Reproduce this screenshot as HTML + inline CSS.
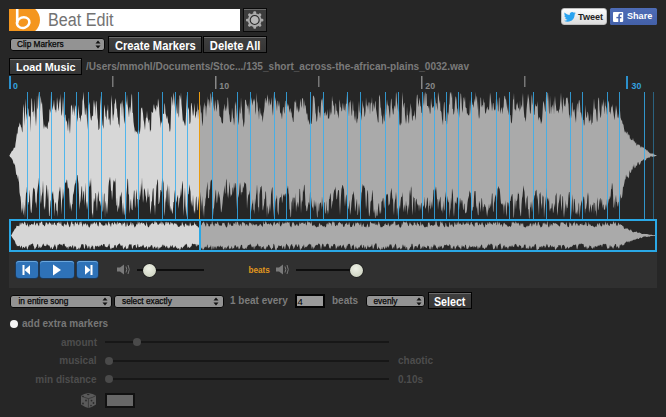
<!DOCTYPE html>
<html><head><meta charset="utf-8">
<style>
*{margin:0;padding:0;box-sizing:border-box}
html,body{width:666px;height:417px;overflow:hidden;background:#262626;font-family:"Liberation Sans",sans-serif}
.a{position:absolute}
.btn{position:absolute;background:linear-gradient(#3f3f3f,#353535);border:1px solid #030303;box-shadow:inset 0 1px 0 #6a6a6a;color:#fff;font-weight:bold;white-space:nowrap;text-align:center}
.sel{position:absolute;background:#939393;border:1px solid #080808;border-radius:3px;color:#050505;font-size:8.3px;white-space:nowrap;-webkit-text-stroke:0.25px #050505}
.lbl{position:absolute;font-weight:bold;white-space:nowrap;font-size:10px}
.t{display:inline-block;transform-origin:50% 50%}
.tl{display:inline-block;transform-origin:0 50%}
.arr{position:absolute;width:5px;height:8px}
</style></head><body>
<svg class="a" style="left:0;top:0" width="666" height="417" viewBox="0 0 666 417">
  <defs>
    <clipPath id="cl"><rect x="0" y="0" width="199" height="417"/></clipPath>
    <clipPath id="cr"><rect x="199" y="0" width="467" height="417"/></clipPath>
    <clipPath id="ml"><rect x="0" y="0" width="199" height="417"/></clipPath>
    <clipPath id="mr"><rect x="199" y="0" width="467" height="417"/></clipPath>
  </defs>
  <!-- main waveform -->
  <path d="M9.0,155.6 L9.5,155.4 L10.0,154.4 L10.5,153.4 L11.0,152.8 L11.5,151.5 L12.0,151.2 L12.5,150.6 L13.0,150.6 L13.5,148.8 L14.0,147.4 L14.5,147.6 L15.0,148.3 L15.5,143.5 L16.0,140.5 L16.5,136.3 L17.0,132.8 L17.5,134.5 L18.0,128.0 L18.5,126.4 L19.0,126.8 L19.5,122.2 L20.0,124.5 L20.5,124.4 L21.0,127.1 L21.5,127.5 L22.0,131.3 L22.5,132.5 L23.0,108.5 L23.5,103.8 L24.0,113.8 L24.5,125.9 L25.0,109.0 L25.5,98.4 L26.0,113.0 L26.5,115.5 L27.0,119.9 L27.5,108.1 L28.0,108.1 L28.5,109.9 L29.0,117.6 L29.5,116.3 L30.0,115.3 L30.5,132.0 L31.0,109.8 L31.5,97.7 L32.0,99.8 L32.5,112.0 L33.0,112.3 L33.5,110.2 L34.0,117.7 L34.5,98.2 L35.0,109.3 L35.5,119.0 L36.0,126.4 L36.5,116.5 L37.0,94.5 L37.5,109.7 L38.0,107.2 L38.5,91.6 L39.0,100.4 L39.5,107.0 L40.0,112.3 L40.5,95.4 L41.0,99.1 L41.5,104.4 L42.0,101.8 L42.5,109.2 L43.0,118.0 L43.5,126.0 L44.0,129.3 L44.5,123.9 L45.0,127.8 L45.5,127.1 L46.0,125.5 L46.5,127.2 L47.0,128.2 L47.5,129.3 L48.0,123.5 L48.5,120.8 L49.0,123.5 L49.5,108.4 L50.0,110.6 L50.5,112.9 L51.0,93.1 L51.5,98.6 L52.0,105.6 L52.5,110.2 L53.0,107.0 L53.5,103.9 L54.0,99.3 L54.5,106.3 L55.0,110.0 L55.5,109.6 L56.0,113.0 L56.5,108.2 L57.0,96.9 L57.5,101.6 L58.0,106.1 L58.5,111.4 L59.0,107.5 L59.5,98.3 L60.0,103.8 L60.5,93.5 L61.0,109.9 L61.5,115.9 L62.0,114.2 L62.5,105.8 L63.0,96.6 L63.5,104.4 L64.0,117.9 L64.5,117.7 L65.0,114.9 L65.5,114.6 L66.0,122.1 L66.5,120.1 L67.0,122.3 L67.5,126.0 L68.0,131.7 L68.5,122.2 L69.0,117.2 L69.5,129.4 L70.0,134.1 L70.5,123.0 L71.0,104.5 L71.5,106.6 L72.0,104.4 L72.5,115.5 L73.0,107.0 L73.5,112.6 L74.0,103.2 L74.5,116.5 L75.0,109.7 L75.5,104.9 L76.0,106.8 L76.5,109.6 L77.0,117.6 L77.5,122.1 L78.0,113.9 L78.5,104.8 L79.0,113.0 L79.5,117.9 L80.0,117.9 L80.5,122.3 L81.0,116.3 L81.5,115.5 L82.0,114.1 L82.5,101.1 L83.0,98.3 L83.5,91.6 L84.0,102.0 L84.5,107.6 L85.0,115.3 L85.5,113.9 L86.0,107.1 L86.5,111.1 L87.0,120.1 L87.5,129.7 L88.0,109.3 L88.5,105.2 L89.0,104.9 L89.5,101.8 L90.0,112.3 L90.5,117.3 L91.0,120.2 L91.5,120.4 L92.0,115.8 L92.5,115.8 L93.0,116.8 L93.5,104.1 L94.0,99.3 L94.5,107.3 L95.0,101.1 L95.5,116.2 L96.0,100.4 L96.5,102.0 L97.0,108.6 L97.5,117.8 L98.0,120.7 L98.5,130.2 L99.0,129.4 L99.5,127.9 L100.0,113.6 L100.5,95.2 L101.0,105.6 L101.5,111.1 L102.0,118.0 L102.5,124.5 L103.0,126.5 L103.5,129.1 L104.0,109.6 L104.5,104.3 L105.0,109.7 L105.5,115.9 L106.0,117.3 L106.5,120.6 L107.0,109.0 L107.5,111.6 L108.0,103.5 L108.5,118.6 L109.0,120.6 L109.5,117.3 L110.0,126.0 L110.5,123.8 L111.0,107.2 L111.5,94.8 L112.0,103.3 L112.5,113.9 L113.0,121.6 L113.5,115.5 L114.0,113.8 L114.5,104.1 L115.0,103.1 L115.5,98.0 L116.0,100.7 L116.5,108.0 L117.0,109.4 L117.5,116.4 L118.0,118.6 L118.5,124.2 L119.0,124.6 L119.5,128.5 L120.0,108.3 L120.5,102.8 L121.0,104.6 L121.5,100.9 L122.0,117.0 L122.5,99.2 L123.0,104.7 L123.5,109.4 L124.0,120.8 L124.5,124.0 L125.0,116.5 L125.5,102.4 L126.0,100.7 L126.5,105.6 L127.0,94.0 L127.5,103.9 L128.0,108.1 L128.5,112.2 L129.0,117.8 L129.5,108.6 L130.0,106.3 L130.5,112.9 L131.0,103.9 L131.5,95.4 L132.0,93.6 L132.5,112.4 L133.0,113.2 L133.5,121.7 L134.0,125.9 L134.5,128.4 L135.0,133.0 L135.5,130.0 L136.0,131.7 L136.5,131.6 L137.0,132.5 L137.5,134.5 L138.0,129.7 L138.5,132.3 L139.0,129.7 L139.5,134.0 L140.0,132.0 L140.5,126.8 L141.0,108.0 L141.5,108.6 L142.0,106.9 L142.5,110.3 L143.0,113.4 L143.5,119.6 L144.0,121.9 L144.5,126.1 L145.0,130.3 L145.5,122.1 L146.0,117.3 L146.5,118.1 L147.0,110.4 L147.5,117.5 L148.0,119.2 L148.5,123.6 L149.0,119.0 L149.5,120.7 L150.0,132.2 L150.5,129.6 L151.0,131.1 L151.5,111.5 L152.0,112.1 L152.5,112.8 L153.0,112.7 L153.5,106.1 L154.0,104.0 L154.5,108.1 L155.0,108.7 L155.5,109.7 L156.0,111.9 L156.5,104.7 L157.0,106.2 L157.5,107.8 L158.0,98.3 L158.5,101.0 L159.0,106.0 L159.5,114.3 L160.0,118.8 L160.5,127.9 L161.0,120.0 L161.5,123.7 L162.0,121.8 L162.5,121.6 L163.0,114.0 L163.5,113.5 L164.0,114.3 L164.5,102.7 L165.0,105.0 L165.5,113.6 L166.0,115.1 L166.5,117.6 L167.0,119.2 L167.5,115.3 L168.0,122.0 L168.5,123.3 L169.0,124.4 L169.5,130.8 L170.0,132.0 L170.5,128.4 L171.0,112.1 L171.5,96.1 L172.0,98.1 L172.5,102.3 L173.0,106.2 L173.5,92.3 L174.0,95.3 L174.5,101.9 L175.0,107.2 L175.5,111.8 L176.0,115.3 L176.5,103.0 L177.0,113.0 L177.5,114.1 L178.0,97.6 L178.5,115.3 L179.0,118.1 L179.5,95.0 L180.0,96.0 L180.5,100.1 L181.0,92.2 L181.5,104.1 L182.0,109.5 L182.5,116.7 L183.0,122.7 L183.5,119.8 L184.0,122.0 L184.5,123.8 L185.0,126.2 L185.5,124.2 L186.0,113.9 L186.5,103.1 L187.0,94.0 L187.5,104.0 L188.0,110.6 L188.5,106.9 L189.0,109.7 L189.5,123.5 L190.0,124.1 L190.5,121.6 L191.0,103.0 L191.5,103.3 L192.0,106.4 L192.5,111.7 L193.0,116.2 L193.5,114.3 L194.0,109.0 L194.5,103.0 L195.0,114.5 L195.5,118.4 L196.0,115.6 L196.5,111.3 L197.0,111.8 L197.5,102.6 L198.0,119.6 L198.5,109.3 L199.0,110.3 L199.5,98.3 L200.0,103.9 L200.5,106.7 L201.0,113.9 L201.5,111.5 L202.0,121.8 L202.5,126.6 L203.0,120.3 L203.5,104.5 L204.0,110.4 L204.5,102.1 L205.0,105.1 L205.5,106.5 L206.0,117.2 L206.5,108.2 L207.0,105.2 L207.5,95.9 L208.0,106.7 L208.5,99.2 L209.0,99.6 L209.5,103.2 L210.0,108.6 L210.5,92.8 L211.0,94.8 L211.5,103.5 L212.0,96.6 L212.5,97.3 L213.0,95.9 L213.5,104.5 L214.0,108.7 L214.5,111.8 L215.0,99.6 L215.5,102.7 L216.0,106.4 L216.5,112.1 L217.0,107.6 L217.5,100.1 L218.0,99.4 L218.5,103.3 L219.0,105.8 L219.5,116.0 L220.0,116.3 L220.5,117.4 L221.0,117.4 L221.5,122.0 L222.0,123.1 L222.5,123.4 L223.0,123.2 L223.5,107.8 L224.0,111.5 L224.5,103.6 L225.0,107.0 L225.5,110.1 L226.0,111.6 L226.5,104.9 L227.0,110.2 L227.5,97.8 L228.0,97.4 L228.5,106.9 L229.0,113.4 L229.5,115.4 L230.0,121.5 L230.5,121.9 L231.0,122.6 L231.5,118.6 L232.0,107.2 L232.5,112.0 L233.0,117.5 L233.5,119.1 L234.0,125.8 L234.5,121.7 L235.0,101.6 L235.5,106.0 L236.0,100.8 L236.5,118.4 L237.0,107.3 L237.5,112.8 L238.0,114.7 L238.5,125.2 L239.0,121.2 L239.5,106.3 L240.0,114.3 L240.5,112.2 L241.0,96.9 L241.5,105.5 L242.0,109.6 L242.5,117.9 L243.0,121.1 L243.5,127.5 L244.0,125.2 L244.5,121.6 L245.0,100.6 L245.5,99.4 L246.0,100.2 L246.5,104.0 L247.0,105.3 L247.5,106.2 L248.0,109.5 L248.5,102.9 L249.0,115.9 L249.5,109.9 L250.0,97.7 L250.5,105.4 L251.0,103.4 L251.5,96.9 L252.0,100.8 L252.5,105.7 L253.0,102.8 L253.5,98.5 L254.0,101.6 L254.5,98.2 L255.0,102.4 L255.5,114.9 L256.0,111.0 L256.5,92.6 L257.0,101.0 L257.5,103.5 L258.0,110.2 L258.5,111.9 L259.0,120.0 L259.5,110.1 L260.0,107.0 L260.5,114.9 L261.0,112.6 L261.5,116.7 L262.0,114.8 L262.5,122.5 L263.0,119.1 L263.5,113.6 L264.0,111.3 L264.5,106.6 L265.0,97.9 L265.5,98.5 L266.0,103.8 L266.5,101.0 L267.0,99.5 L267.5,94.3 L268.0,97.7 L268.5,102.8 L269.0,106.7 L269.5,98.1 L270.0,103.0 L270.5,105.5 L271.0,103.1 L271.5,97.1 L272.0,105.5 L272.5,111.8 L273.0,116.0 L273.5,102.6 L274.0,92.1 L274.5,100.2 L275.0,101.0 L275.5,97.1 L276.0,102.0 L276.5,106.1 L277.0,111.2 L277.5,101.3 L278.0,100.6 L278.5,104.7 L279.0,106.9 L279.5,101.0 L280.0,111.8 L280.5,114.0 L281.0,112.3 L281.5,116.0 L282.0,119.5 L282.5,113.1 L283.0,107.4 L283.5,106.8 L284.0,111.9 L284.5,114.0 L285.0,100.8 L285.5,100.9 L286.0,107.7 L286.5,95.7 L287.0,107.5 L287.5,102.8 L288.0,106.6 L288.5,104.1 L289.0,108.8 L289.5,112.7 L290.0,108.4 L290.5,108.4 L291.0,113.7 L291.5,110.8 L292.0,117.1 L292.5,118.0 L293.0,122.1 L293.5,121.8 L294.0,111.5 L294.5,101.9 L295.0,101.2 L295.5,103.2 L296.0,99.2 L296.5,111.3 L297.0,105.8 L297.5,108.5 L298.0,110.9 L298.5,112.8 L299.0,107.8 L299.5,112.0 L300.0,102.8 L300.5,98.5 L301.0,105.5 L301.5,108.1 L302.0,99.0 L302.5,98.3 L303.0,98.0 L303.5,104.6 L304.0,109.4 L304.5,99.7 L305.0,106.3 L305.5,104.7 L306.0,108.9 L306.5,114.7 L307.0,112.7 L307.5,115.0 L308.0,122.6 L308.5,119.0 L309.0,121.2 L309.5,125.1 L310.0,123.0 L310.5,123.2 L311.0,123.7 L311.5,123.9 L312.0,120.1 L312.5,110.0 L313.0,95.3 L313.5,96.1 L314.0,96.4 L314.5,98.4 L315.0,104.7 L315.5,112.6 L316.0,114.9 L316.5,121.8 L317.0,121.2 L317.5,115.8 L318.0,105.5 L318.5,106.8 L319.0,112.8 L319.5,112.3 L320.0,118.6 L320.5,113.8 L321.0,103.6 L321.5,98.8 L322.0,100.7 L322.5,97.3 L323.0,106.8 L323.5,108.3 L324.0,112.8 L324.5,113.0 L325.0,116.4 L325.5,111.1 L326.0,113.1 L326.5,116.0 L327.0,114.2 L327.5,109.1 L328.0,119.2 L328.5,117.7 L329.0,119.2 L329.5,115.4 L330.0,107.7 L330.5,115.8 L331.0,111.6 L331.5,114.8 L332.0,95.4 L332.5,100.4 L333.0,101.6 L333.5,106.6 L334.0,104.7 L334.5,113.5 L335.0,115.4 L335.5,103.7 L336.0,103.2 L336.5,111.1 L337.0,110.5 L337.5,113.0 L338.0,115.6 L338.5,118.8 L339.0,111.5 L339.5,99.3 L340.0,102.2 L340.5,107.3 L341.0,107.5 L341.5,110.9 L342.0,111.4 L342.5,105.1 L343.0,102.5 L343.5,107.4 L344.0,110.4 L344.5,109.9 L345.0,102.8 L345.5,112.3 L346.0,103.4 L346.5,104.1 L347.0,93.4 L347.5,99.1 L348.0,102.2 L348.5,106.9 L349.0,116.8 L349.5,101.8 L350.0,102.7 L350.5,99.5 L351.0,107.5 L351.5,114.1 L352.0,116.5 L352.5,106.0 L353.0,100.5 L353.5,111.7 L354.0,109.7 L354.5,120.7 L355.0,115.8 L355.5,121.6 L356.0,109.7 L356.5,121.4 L357.0,123.7 L357.5,119.0 L358.0,118.3 L358.5,108.2 L359.0,100.6 L359.5,110.3 L360.0,113.2 L360.5,112.2 L361.0,114.1 L361.5,120.8 L362.0,112.6 L362.5,99.9 L363.0,104.9 L363.5,107.3 L364.0,109.0 L364.5,117.2 L365.0,115.5 L365.5,110.9 L366.0,97.1 L366.5,103.6 L367.0,106.9 L367.5,104.4 L368.0,110.3 L368.5,103.4 L369.0,101.4 L369.5,103.5 L370.0,114.9 L370.5,105.0 L371.0,102.2 L371.5,103.4 L372.0,96.6 L372.5,110.7 L373.0,112.0 L373.5,102.5 L374.0,105.7 L374.5,109.6 L375.0,102.3 L375.5,100.5 L376.0,108.8 L376.5,112.1 L377.0,115.5 L377.5,119.3 L378.0,122.7 L378.5,122.1 L379.0,96.9 L379.5,94.5 L380.0,97.5 L380.5,107.0 L381.0,108.8 L381.5,115.0 L382.0,116.8 L382.5,123.0 L383.0,124.8 L383.5,113.1 L384.0,120.1 L384.5,122.1 L385.0,107.5 L385.5,114.4 L386.0,115.2 L386.5,106.2 L387.0,99.0 L387.5,103.7 L388.0,105.7 L388.5,105.6 L389.0,110.5 L389.5,115.1 L390.0,119.0 L390.5,106.5 L391.0,99.7 L391.5,98.3 L392.0,107.5 L392.5,110.1 L393.0,114.7 L393.5,113.9 L394.0,107.1 L394.5,105.0 L395.0,109.7 L395.5,105.0 L396.0,91.7 L396.5,94.3 L397.0,102.0 L397.5,106.0 L398.0,111.0 L398.5,112.0 L399.0,107.9 L399.5,123.5 L400.0,125.8 L400.5,124.7 L401.0,122.2 L401.5,124.6 L402.0,101.5 L402.5,91.8 L403.0,103.2 L403.5,108.3 L404.0,103.6 L404.5,102.5 L405.0,114.6 L405.5,119.5 L406.0,123.9 L406.5,120.3 L407.0,106.2 L407.5,114.7 L408.0,115.7 L408.5,122.1 L409.0,124.1 L409.5,109.9 L410.0,115.2 L410.5,102.9 L411.0,106.4 L411.5,110.1 L412.0,119.5 L412.5,121.2 L413.0,115.0 L413.5,116.1 L414.0,116.4 L414.5,109.7 L415.0,116.5 L415.5,120.8 L416.0,113.5 L416.5,99.5 L417.0,94.5 L417.5,95.0 L418.0,102.2 L418.5,107.2 L419.0,102.5 L419.5,97.4 L420.0,101.1 L420.5,106.3 L421.0,106.6 L421.5,112.4 L422.0,113.2 L422.5,117.3 L423.0,106.3 L423.5,102.3 L424.0,92.1 L424.5,96.6 L425.0,106.0 L425.5,91.6 L426.0,93.8 L426.5,93.7 L427.0,105.9 L427.5,106.1 L428.0,105.7 L428.5,108.7 L429.0,105.3 L429.5,110.1 L430.0,114.4 L430.5,111.9 L431.0,97.8 L431.5,102.9 L432.0,106.0 L432.5,108.3 L433.0,107.1 L433.5,105.8 L434.0,108.2 L434.5,110.6 L435.0,111.0 L435.5,96.6 L436.0,103.3 L436.5,103.3 L437.0,107.6 L437.5,110.8 L438.0,91.7 L438.5,94.5 L439.0,98.1 L439.5,103.9 L440.0,100.0 L440.5,110.7 L441.0,111.1 L441.5,112.8 L442.0,119.0 L442.5,121.5 L443.0,125.5 L443.5,110.0 L444.0,102.4 L444.5,102.0 L445.0,113.3 L445.5,121.1 L446.0,120.9 L446.5,123.7 L447.0,124.9 L447.5,113.7 L448.0,111.8 L448.5,115.6 L449.0,105.4 L449.5,103.4 L450.0,91.6 L450.5,94.1 L451.0,91.8 L451.5,98.2 L452.0,91.6 L452.5,109.0 L453.0,108.8 L453.5,114.8 L454.0,113.9 L454.5,109.9 L455.0,102.0 L455.5,96.7 L456.0,96.4 L456.5,100.1 L457.0,107.9 L457.5,109.5 L458.0,114.1 L458.5,115.8 L459.0,105.8 L459.5,118.3 L460.0,104.2 L460.5,93.9 L461.0,93.2 L461.5,99.8 L462.0,109.2 L462.5,113.0 L463.0,107.6 L463.5,98.0 L464.0,97.2 L464.5,102.3 L465.0,95.8 L465.5,106.7 L466.0,108.1 L466.5,108.0 L467.0,114.4 L467.5,112.7 L468.0,114.9 L468.5,115.1 L469.0,115.9 L469.5,113.2 L470.0,99.6 L470.5,114.0 L471.0,98.3 L471.5,97.0 L472.0,101.4 L472.5,104.4 L473.0,105.2 L473.5,107.9 L474.0,103.1 L474.5,98.3 L475.0,102.7 L475.5,91.6 L476.0,101.2 L476.5,97.2 L477.0,95.4 L477.5,110.6 L478.0,100.9 L478.5,114.4 L479.0,119.1 L479.5,117.1 L480.0,107.4 L480.5,98.1 L481.0,97.3 L481.5,107.6 L482.0,105.4 L482.5,104.8 L483.0,107.7 L483.5,97.9 L484.0,103.3 L484.5,101.8 L485.0,111.7 L485.5,114.0 L486.0,112.8 L486.5,109.5 L487.0,107.8 L487.5,106.5 L488.0,110.2 L488.5,108.7 L489.0,111.1 L489.5,102.9 L490.0,92.4 L490.5,95.5 L491.0,101.2 L491.5,104.9 L492.0,111.6 L492.5,107.7 L493.0,102.8 L493.5,103.5 L494.0,108.9 L494.5,109.9 L495.0,110.7 L495.5,108.8 L496.0,98.2 L496.5,106.8 L497.0,106.0 L497.5,98.4 L498.0,112.0 L498.5,110.2 L499.0,97.0 L499.5,98.6 L500.0,109.6 L500.5,114.0 L501.0,108.9 L501.5,107.0 L502.0,110.6 L502.5,114.6 L503.0,106.3 L503.5,108.9 L504.0,98.9 L504.5,96.0 L505.0,95.8 L505.5,99.4 L506.0,99.3 L506.5,103.0 L507.0,107.4 L507.5,111.2 L508.0,103.4 L508.5,115.5 L509.0,111.0 L509.5,112.8 L510.0,115.0 L510.5,115.3 L511.0,122.8 L511.5,123.5 L512.0,121.6 L512.5,113.4 L513.0,99.4 L513.5,99.5 L514.0,92.8 L514.5,108.4 L515.0,109.8 L515.5,109.3 L516.0,111.8 L516.5,103.0 L517.0,105.8 L517.5,101.7 L518.0,106.9 L518.5,108.5 L519.0,108.4 L519.5,112.1 L520.0,99.8 L520.5,110.0 L521.0,108.1 L521.5,104.4 L522.0,107.9 L522.5,98.1 L523.0,92.8 L523.5,106.5 L524.0,112.9 L524.5,118.2 L525.0,117.0 L525.5,122.0 L526.0,119.3 L526.5,109.9 L527.0,104.5 L527.5,100.6 L528.0,93.4 L528.5,96.9 L529.0,99.2 L529.5,106.2 L530.0,113.1 L530.5,114.0 L531.0,109.6 L531.5,96.9 L532.0,93.9 L532.5,102.6 L533.0,105.4 L533.5,110.5 L534.0,114.9 L534.5,114.6 L535.0,106.7 L535.5,103.6 L536.0,106.8 L536.5,106.2 L537.0,106.1 L537.5,101.0 L538.0,115.0 L538.5,120.8 L539.0,117.7 L539.5,117.1 L540.0,118.6 L540.5,120.4 L541.0,124.3 L541.5,122.2 L542.0,121.0 L542.5,113.0 L543.0,103.8 L543.5,100.7 L544.0,103.1 L544.5,106.3 L545.0,110.6 L545.5,112.3 L546.0,95.6 L546.5,94.8 L547.0,101.7 L547.5,93.0 L548.0,92.6 L548.5,101.1 L549.0,112.6 L549.5,114.2 L550.0,95.1 L550.5,105.2 L551.0,114.6 L551.5,107.4 L552.0,106.2 L552.5,104.3 L553.0,110.1 L553.5,100.6 L554.0,115.1 L554.5,102.0 L555.0,95.7 L555.5,102.7 L556.0,106.5 L556.5,111.6 L557.0,110.3 L557.5,110.7 L558.0,110.9 L558.5,113.4 L559.0,109.7 L559.5,109.5 L560.0,104.9 L560.5,99.7 L561.0,92.4 L561.5,101.6 L562.0,107.5 L562.5,114.1 L563.0,100.8 L563.5,96.7 L564.0,105.8 L564.5,106.4 L565.0,103.1 L565.5,107.4 L566.0,98.1 L566.5,97.4 L567.0,98.8 L567.5,96.9 L568.0,101.8 L568.5,104.6 L569.0,114.2 L569.5,115.6 L570.0,119.1 L570.5,115.2 L571.0,118.6 L571.5,114.2 L572.0,102.1 L572.5,103.3 L573.0,112.7 L573.5,110.8 L574.0,108.9 L574.5,109.9 L575.0,115.9 L575.5,119.2 L576.0,122.9 L576.5,110.3 L577.0,104.6 L577.5,103.0 L578.0,112.6 L578.5,103.8 L579.0,99.8 L579.5,100.5 L580.0,104.1 L580.5,112.8 L581.0,112.3 L581.5,115.1 L582.0,118.9 L582.5,116.0 L583.0,119.9 L583.5,119.8 L584.0,126.1 L584.5,124.2 L585.0,115.2 L585.5,104.6 L586.0,114.9 L586.5,118.3 L587.0,117.0 L587.5,111.5 L588.0,112.4 L588.5,116.0 L589.0,123.5 L589.5,120.2 L590.0,121.0 L590.5,119.5 L591.0,112.7 L591.5,125.5 L592.0,122.4 L592.5,122.9 L593.0,113.8 L593.5,107.2 L594.0,98.0 L594.5,105.5 L595.0,110.6 L595.5,108.1 L596.0,109.9 L596.5,117.5 L597.0,122.4 L597.5,119.9 L598.0,101.0 L598.5,98.1 L599.0,97.4 L599.5,109.4 L600.0,113.9 L600.5,118.0 L601.0,116.9 L601.5,110.0 L602.0,101.6 L602.5,107.1 L603.0,103.8 L603.5,98.8 L604.0,108.9 L604.5,114.6 L605.0,100.7 L605.5,105.5 L606.0,106.7 L606.5,108.8 L607.0,114.9 L607.5,113.6 L608.0,103.9 L608.5,100.5 L609.0,102.2 L609.5,112.4 L610.0,111.5 L610.5,114.7 L611.0,109.2 L611.5,106.0 L612.0,107.6 L612.5,104.1 L613.0,110.3 L613.5,112.9 L614.0,117.0 L614.5,120.2 L615.0,115.6 L615.5,111.1 L616.0,104.9 L616.5,108.6 L617.0,111.3 L617.5,116.2 L618.0,118.6 L618.5,117.1 L619.0,113.3 L619.5,107.3 L620.0,110.0 L620.5,117.5 L621.0,118.9 L621.5,120.7 L622.0,120.2 L622.5,123.4 L623.0,123.9 L623.5,125.0 L624.0,128.4 L624.5,131.1 L625.0,132.8 L625.5,132.1 L626.0,131.0 L626.5,133.8 L627.0,132.4 L627.5,131.4 L628.0,135.8 L628.5,133.5 L629.0,135.6 L629.5,134.4 L630.0,139.7 L630.5,138.1 L631.0,140.2 L631.5,139.7 L632.0,140.2 L632.5,139.9 L633.0,138.1 L633.5,140.2 L634.0,141.4 L634.5,140.9 L635.0,142.8 L635.5,143.6 L636.0,141.8 L636.5,145.4 L637.0,145.6 L637.5,144.5 L638.0,144.0 L638.5,144.9 L639.0,144.5 L639.5,144.9 L640.0,145.8 L640.5,147.1 L641.0,147.9 L641.5,146.6 L642.0,146.5 L642.5,147.5 L643.0,147.2 L643.5,147.6 L644.0,148.1 L644.5,148.7 L645.0,149.8 L645.5,148.9 L646.0,149.2 L646.5,150.8 L647.0,149.8 L647.5,150.6 L648.0,151.7 L648.5,151.6 L649.0,152.6 L649.5,152.8 L650.0,153.5 L650.5,153.6 L651.0,153.3 L651.5,153.5 L652.0,154.1 L652.5,153.6 L653.0,153.2 L653.5,153.7 L654.0,154.4 L654.5,154.6 L655.0,154.9 L655.5,154.9 L656.0,155.1 L656.5,155.4 L657.0,155.6 L657.0,155.6 L656.5,155.7 L656.0,155.9 L655.5,156.0 L655.0,156.2 L654.5,156.6 L654.0,156.5 L653.5,156.2 L653.0,156.7 L652.5,156.8 L652.0,156.8 L651.5,156.6 L651.0,156.0 L650.5,156.6 L650.0,157.1 L649.5,157.6 L649.0,158.0 L648.5,157.6 L648.0,157.5 L647.5,158.3 L647.0,158.1 L646.5,158.6 L646.0,159.7 L645.5,160.2 L645.0,160.6 L644.5,160.8 L644.0,159.8 L643.5,159.3 L643.0,159.8 L642.5,160.6 L642.0,160.9 L641.5,160.7 L641.0,161.6 L640.5,163.0 L640.0,164.3 L639.5,164.7 L639.0,164.4 L638.5,162.4 L638.0,162.1 L637.5,162.9 L637.0,165.7 L636.5,166.0 L636.0,164.9 L635.5,168.0 L635.0,167.2 L634.5,168.6 L634.0,164.0 L633.5,167.8 L633.0,165.6 L632.5,170.0 L632.0,169.0 L631.5,170.1 L631.0,172.2 L630.5,173.1 L630.0,172.4 L629.5,170.1 L629.0,177.5 L628.5,178.6 L628.0,176.6 L627.5,176.4 L627.0,177.5 L626.5,176.3 L626.0,174.2 L625.5,179.8 L625.0,179.0 L624.5,182.0 L624.0,184.8 L623.5,187.0 L623.0,186.8 L622.5,193.8 L622.0,197.6 L621.5,198.6 L621.0,197.0 L620.5,193.8 L620.0,201.6 L619.5,196.0 L619.0,201.5 L618.5,202.6 L618.0,206.9 L617.5,205.5 L617.0,202.2 L616.5,201.8 L616.0,194.8 L615.5,198.5 L615.0,210.0 L614.5,198.8 L614.0,206.4 L613.5,208.2 L613.0,192.8 L612.5,185.1 L612.0,182.6 L611.5,189.0 L611.0,189.2 L610.5,198.4 L610.0,195.7 L609.5,199.7 L609.0,198.6 L608.5,201.2 L608.0,204.1 L607.5,206.2 L607.0,198.6 L606.5,209.2 L606.0,204.0 L605.5,205.9 L605.0,210.0 L604.5,209.2 L604.0,209.9 L603.5,204.8 L603.0,204.6 L602.5,208.7 L602.0,198.6 L601.5,200.6 L601.0,204.2 L600.5,198.1 L600.0,198.6 L599.5,201.0 L599.0,205.3 L598.5,209.2 L598.0,210.6 L597.5,197.2 L597.0,201.3 L596.5,217.1 L596.0,211.5 L595.5,210.3 L595.0,202.9 L594.5,202.8 L594.0,214.5 L593.5,201.8 L593.0,205.3 L592.5,204.5 L592.0,207.2 L591.5,212.9 L591.0,207.3 L590.5,203.8 L590.0,207.8 L589.5,210.8 L589.0,212.9 L588.5,196.5 L588.0,192.2 L587.5,195.4 L587.0,202.5 L586.5,205.8 L586.0,209.0 L585.5,208.5 L585.0,214.3 L584.5,201.4 L584.0,196.3 L583.5,197.1 L583.0,199.9 L582.5,203.5 L582.0,203.1 L581.5,199.9 L581.0,204.3 L580.5,206.5 L580.0,212.6 L579.5,217.8 L579.0,202.2 L578.5,204.2 L578.0,215.2 L577.5,209.2 L577.0,215.3 L576.5,211.4 L576.0,214.3 L575.5,212.6 L575.0,203.4 L574.5,199.0 L574.0,198.7 L573.5,209.1 L573.0,213.2 L572.5,194.2 L572.0,200.7 L571.5,210.5 L571.0,217.5 L570.5,211.5 L570.0,198.9 L569.5,191.9 L569.0,192.0 L568.5,195.8 L568.0,203.8 L567.5,207.7 L567.0,208.6 L566.5,203.5 L566.0,212.6 L565.5,199.8 L565.0,206.8 L564.5,212.4 L564.0,218.0 L563.5,212.7 L563.0,196.4 L562.5,196.0 L562.0,203.9 L561.5,211.6 L561.0,204.7 L560.5,194.5 L560.0,194.2 L559.5,198.7 L559.0,201.7 L558.5,203.8 L558.0,208.5 L557.5,215.9 L557.0,211.1 L556.5,192.5 L556.0,194.4 L555.5,196.1 L555.0,207.8 L554.5,203.2 L554.0,208.2 L553.5,211.8 L553.0,213.6 L552.5,204.5 L552.0,202.5 L551.5,207.5 L551.0,208.9 L550.5,208.0 L550.0,211.7 L549.5,208.9 L549.0,197.7 L548.5,202.0 L548.0,198.1 L547.5,199.7 L547.0,196.5 L546.5,187.6 L546.0,196.2 L545.5,200.5 L545.0,205.8 L544.5,211.1 L544.0,218.4 L543.5,195.6 L543.0,197.5 L542.5,194.6 L542.0,209.6 L541.5,205.3 L541.0,202.8 L540.5,191.4 L540.0,194.2 L539.5,193.0 L539.0,216.1 L538.5,208.6 L538.0,202.4 L537.5,194.8 L537.0,200.1 L536.5,189.6 L536.0,190.7 L535.5,190.8 L535.0,195.2 L534.5,195.6 L534.0,199.0 L533.5,199.4 L533.0,200.0 L532.5,206.9 L532.0,212.6 L531.5,205.0 L531.0,201.3 L530.5,206.7 L530.0,207.9 L529.5,218.6 L529.0,218.6 L528.5,208.9 L528.0,209.6 L527.5,195.2 L527.0,197.0 L526.5,199.0 L526.0,209.3 L525.5,204.3 L525.0,200.9 L524.5,192.1 L524.0,189.2 L523.5,185.3 L523.0,190.6 L522.5,196.3 L522.0,198.2 L521.5,205.1 L521.0,216.6 L520.5,215.3 L520.0,211.6 L519.5,208.1 L519.0,194.0 L518.5,194.1 L518.0,191.9 L517.5,198.3 L517.0,201.1 L516.5,200.6 L516.0,209.7 L515.5,203.6 L515.0,198.1 L514.5,206.2 L514.0,216.0 L513.5,218.4 L513.0,204.8 L512.5,194.5 L512.0,194.1 L511.5,195.9 L511.0,196.9 L510.5,201.0 L510.0,201.1 L509.5,205.6 L509.0,207.2 L508.5,203.4 L508.0,202.3 L507.5,202.6 L507.0,208.0 L506.5,217.1 L506.0,213.0 L505.5,200.2 L505.0,206.7 L504.5,203.5 L504.0,215.3 L503.5,207.8 L503.0,203.1 L502.5,205.5 L502.0,202.7 L501.5,204.5 L501.0,203.7 L500.5,198.6 L500.0,192.0 L499.5,187.8 L499.0,189.3 L498.5,186.1 L498.0,187.6 L497.5,189.8 L497.0,201.5 L496.5,193.7 L496.0,197.4 L495.5,194.3 L495.0,197.1 L494.5,201.1 L494.0,203.1 L493.5,211.8 L493.0,211.4 L492.5,193.9 L492.0,193.1 L491.5,199.9 L491.0,207.2 L490.5,203.0 L490.0,207.7 L489.5,208.4 L489.0,203.8 L488.5,208.9 L488.0,211.1 L487.5,217.6 L487.0,208.6 L486.5,216.2 L486.0,207.6 L485.5,207.0 L485.0,204.7 L484.5,203.7 L484.0,207.1 L483.5,206.5 L483.0,212.1 L482.5,206.5 L482.0,198.7 L481.5,197.9 L481.0,207.0 L480.5,212.6 L480.0,203.9 L479.5,202.6 L479.0,200.5 L478.5,214.8 L478.0,215.6 L477.5,210.9 L477.0,205.7 L476.5,209.1 L476.0,202.4 L475.5,190.8 L475.0,191.6 L474.5,190.8 L474.0,197.1 L473.5,207.5 L473.0,206.6 L472.5,211.3 L472.0,209.9 L471.5,211.1 L471.0,198.3 L470.5,192.7 L470.0,192.5 L469.5,190.2 L469.0,195.4 L468.5,197.5 L468.0,199.2 L467.5,202.7 L467.0,209.2 L466.5,212.3 L466.0,213.1 L465.5,213.5 L465.0,211.9 L464.5,203.3 L464.0,204.6 L463.5,210.2 L463.0,209.1 L462.5,201.9 L462.0,199.5 L461.5,200.7 L461.0,204.3 L460.5,200.6 L460.0,197.6 L459.5,203.7 L459.0,210.5 L458.5,208.8 L458.0,198.5 L457.5,197.8 L457.0,196.6 L456.5,204.6 L456.0,202.3 L455.5,203.4 L455.0,200.6 L454.5,209.0 L454.0,216.9 L453.5,212.6 L453.0,194.7 L452.5,190.8 L452.0,188.3 L451.5,204.6 L451.0,197.3 L450.5,207.8 L450.0,211.3 L449.5,218.6 L449.0,199.1 L448.5,202.8 L448.0,201.8 L447.5,195.7 L447.0,202.1 L446.5,208.8 L446.0,191.2 L445.5,196.3 L445.0,198.2 L444.5,211.2 L444.0,208.8 L443.5,200.5 L443.0,213.7 L442.5,209.8 L442.0,206.1 L441.5,211.6 L441.0,209.4 L440.5,196.5 L440.0,198.0 L439.5,202.8 L439.0,198.8 L438.5,204.2 L438.0,210.1 L437.5,199.6 L437.0,198.9 L436.5,191.5 L436.0,186.2 L435.5,188.9 L435.0,190.9 L434.5,189.1 L434.0,189.2 L433.5,190.4 L433.0,198.5 L432.5,204.6 L432.0,208.4 L431.5,201.3 L431.0,207.7 L430.5,209.8 L430.0,199.6 L429.5,205.7 L429.0,205.7 L428.5,214.1 L428.0,202.4 L427.5,197.2 L427.0,198.4 L426.5,204.8 L426.0,206.8 L425.5,208.9 L425.0,207.2 L424.5,196.4 L424.0,205.3 L423.5,205.8 L423.0,207.4 L422.5,218.6 L422.0,211.5 L421.5,202.4 L421.0,203.8 L420.5,210.2 L420.0,204.3 L419.5,206.0 L419.0,212.0 L418.5,204.2 L418.0,206.1 L417.5,204.3 L417.0,203.2 L416.5,198.6 L416.0,199.5 L415.5,202.6 L415.0,213.7 L414.5,197.9 L414.0,198.1 L413.5,196.3 L413.0,204.5 L412.5,215.4 L412.0,208.7 L411.5,188.4 L411.0,185.9 L410.5,196.6 L410.0,189.6 L409.5,194.6 L409.0,211.3 L408.5,204.1 L408.0,209.7 L407.5,215.4 L407.0,205.0 L406.5,206.5 L406.0,200.6 L405.5,207.5 L405.0,212.3 L404.5,204.2 L404.0,207.6 L403.5,212.4 L403.0,204.5 L402.5,192.1 L402.0,196.9 L401.5,196.4 L401.0,197.7 L400.5,202.4 L400.0,209.2 L399.5,205.0 L399.0,211.4 L398.5,215.7 L398.0,207.3 L397.5,209.2 L397.0,216.9 L396.5,198.6 L396.0,191.8 L395.5,198.2 L395.0,200.2 L394.5,204.1 L394.0,215.5 L393.5,210.5 L393.0,197.6 L392.5,200.0 L392.0,193.7 L391.5,187.8 L391.0,190.4 L390.5,193.8 L390.0,200.7 L389.5,204.7 L389.0,204.2 L388.5,206.6 L388.0,195.2 L387.5,193.4 L387.0,194.9 L386.5,193.8 L386.0,197.0 L385.5,202.1 L385.0,198.8 L384.5,206.4 L384.0,209.0 L383.5,198.9 L383.0,197.5 L382.5,200.2 L382.0,201.7 L381.5,201.2 L381.0,214.3 L380.5,212.6 L380.0,209.8 L379.5,214.4 L379.0,202.8 L378.5,204.5 L378.0,208.2 L377.5,215.1 L377.0,216.4 L376.5,215.2 L376.0,209.0 L375.5,218.3 L375.0,217.6 L374.5,209.0 L374.0,213.6 L373.5,210.2 L373.0,197.9 L372.5,189.6 L372.0,193.5 L371.5,200.7 L371.0,200.6 L370.5,202.4 L370.0,211.8 L369.5,215.4 L369.0,216.4 L368.5,206.9 L368.0,191.6 L367.5,189.7 L367.0,194.8 L366.5,205.1 L366.0,209.6 L365.5,198.6 L365.0,188.0 L364.5,187.7 L364.0,185.2 L363.5,185.4 L363.0,186.8 L362.5,183.6 L362.0,191.3 L361.5,193.2 L361.0,202.8 L360.5,208.4 L360.0,213.1 L359.5,207.8 L359.0,203.1 L358.5,207.4 L358.0,214.6 L357.5,215.3 L357.0,198.5 L356.5,201.6 L356.0,205.2 L355.5,209.3 L355.0,211.9 L354.5,199.8 L354.0,194.5 L353.5,191.1 L353.0,194.7 L352.5,194.1 L352.0,198.7 L351.5,202.2 L351.0,208.9 L350.5,212.4 L350.0,215.2 L349.5,199.7 L349.0,205.5 L348.5,208.3 L348.0,209.4 L347.5,206.4 L347.0,205.3 L346.5,194.3 L346.0,196.0 L345.5,200.5 L345.0,206.8 L344.5,200.8 L344.0,189.6 L343.5,187.9 L343.0,185.4 L342.5,184.8 L342.0,187.1 L341.5,188.9 L341.0,195.6 L340.5,203.9 L340.0,215.5 L339.5,205.3 L339.0,189.7 L338.5,190.2 L338.0,190.5 L337.5,194.6 L337.0,199.1 L336.5,199.5 L336.0,194.1 L335.5,186.5 L335.0,189.5 L334.5,189.4 L334.0,191.2 L333.5,194.0 L333.0,200.4 L332.5,201.6 L332.0,205.5 L331.5,209.6 L331.0,198.2 L330.5,192.7 L330.0,195.0 L329.5,199.0 L329.0,199.3 L328.5,214.2 L328.0,209.9 L327.5,210.7 L327.0,215.3 L326.5,200.5 L326.0,208.9 L325.5,213.8 L325.0,213.0 L324.5,202.3 L324.0,202.6 L323.5,210.7 L323.0,207.8 L322.5,203.5 L322.0,196.5 L321.5,209.7 L321.0,203.6 L320.5,202.3 L320.0,203.1 L319.5,204.8 L319.0,212.2 L318.5,209.9 L318.0,201.8 L317.5,217.8 L317.0,216.8 L316.5,208.9 L316.0,201.1 L315.5,205.2 L315.0,207.3 L314.5,203.9 L314.0,199.6 L313.5,211.4 L313.0,206.3 L312.5,208.6 L312.0,205.9 L311.5,197.1 L311.0,207.1 L310.5,192.5 L310.0,192.0 L309.5,205.6 L309.0,202.1 L308.5,202.7 L308.0,205.4 L307.5,208.6 L307.0,211.3 L306.5,211.0 L306.0,206.4 L305.5,204.8 L305.0,193.2 L304.5,184.6 L304.0,185.5 L303.5,192.6 L303.0,189.6 L302.5,202.5 L302.0,199.8 L301.5,204.0 L301.0,213.4 L300.5,200.0 L300.0,188.7 L299.5,189.0 L299.0,201.4 L298.5,205.5 L298.0,207.9 L297.5,201.4 L297.0,204.2 L296.5,206.7 L296.0,212.4 L295.5,193.1 L295.0,203.7 L294.5,197.8 L294.0,197.4 L293.5,197.7 L293.0,209.9 L292.5,197.0 L292.0,200.7 L291.5,203.1 L291.0,217.6 L290.5,216.6 L290.0,209.3 L289.5,209.8 L289.0,194.9 L288.5,192.8 L288.0,185.3 L287.5,188.0 L287.0,189.1 L286.5,195.3 L286.0,193.5 L285.5,193.8 L285.0,197.3 L284.5,195.0 L284.0,194.0 L283.5,195.0 L283.0,196.5 L282.5,200.9 L282.0,203.5 L281.5,192.9 L281.0,197.5 L280.5,197.1 L280.0,197.4 L279.5,198.7 L279.0,203.5 L278.5,215.6 L278.0,213.4 L277.5,210.4 L277.0,194.8 L276.5,198.3 L276.0,199.1 L275.5,202.1 L275.0,210.2 L274.5,195.1 L274.0,202.1 L273.5,217.4 L273.0,205.4 L272.5,187.0 L272.0,187.9 L271.5,191.0 L271.0,194.4 L270.5,212.2 L270.0,203.2 L269.5,207.5 L269.0,212.3 L268.5,214.7 L268.0,208.4 L267.5,205.3 L267.0,217.9 L266.5,207.0 L266.0,192.3 L265.5,191.1 L265.0,198.5 L264.5,199.0 L264.0,204.8 L263.5,206.7 L263.0,210.8 L262.5,209.1 L262.0,191.4 L261.5,185.4 L261.0,186.7 L260.5,187.3 L260.0,191.1 L259.5,194.4 L259.0,212.9 L258.5,206.4 L258.0,207.8 L257.5,192.4 L257.0,184.2 L256.5,192.4 L256.0,195.7 L255.5,205.0 L255.0,198.0 L254.5,214.5 L254.0,209.3 L253.5,210.7 L253.0,198.9 L252.5,203.1 L252.0,204.3 L251.5,208.6 L251.0,211.7 L250.5,214.0 L250.0,195.0 L249.5,189.9 L249.0,195.0 L248.5,194.0 L248.0,197.0 L247.5,201.8 L247.0,209.3 L246.5,190.2 L246.0,183.6 L245.5,183.4 L245.0,183.3 L244.5,181.8 L244.0,185.4 L243.5,188.8 L243.0,186.0 L242.5,191.9 L242.0,192.6 L241.5,191.7 L241.0,195.8 L240.5,185.7 L240.0,182.3 L239.5,186.9 L239.0,193.7 L238.5,196.3 L238.0,198.0 L237.5,201.7 L237.0,209.8 L236.5,198.5 L236.0,183.2 L235.5,183.3 L235.0,188.8 L234.5,186.7 L234.0,182.2 L233.5,192.9 L233.0,187.1 L232.5,188.5 L232.0,194.5 L231.5,196.1 L231.0,193.5 L230.5,197.8 L230.0,187.2 L229.5,181.6 L229.0,190.1 L228.5,198.9 L228.0,191.7 L227.5,197.7 L227.0,186.4 L226.5,178.6 L226.0,181.0 L225.5,192.2 L225.0,194.2 L224.5,185.3 L224.0,189.9 L223.5,194.5 L223.0,197.7 L222.5,203.5 L222.0,208.1 L221.5,211.5 L221.0,212.6 L220.5,205.2 L220.0,198.9 L219.5,193.4 L219.0,198.5 L218.5,190.7 L218.0,193.2 L217.5,197.9 L217.0,203.7 L216.5,201.2 L216.0,189.3 L215.5,191.4 L215.0,197.3 L214.5,201.7 L214.0,207.7 L213.5,209.2 L213.0,216.4 L212.5,200.8 L212.0,181.2 L211.5,179.6 L211.0,179.9 L210.5,182.0 L210.0,189.6 L209.5,189.6 L209.0,198.5 L208.5,198.0 L208.0,197.7 L207.5,181.5 L207.0,186.3 L206.5,190.4 L206.0,196.9 L205.5,199.3 L205.0,205.5 L204.5,206.5 L204.0,218.6 L203.5,207.1 L203.0,216.6 L202.5,195.8 L202.0,206.4 L201.5,199.8 L201.0,212.7 L200.5,191.7 L200.0,199.6 L199.5,196.4 L199.0,207.7 L198.5,195.9 L198.0,203.7 L197.5,209.8 L197.0,210.6 L196.5,196.3 L196.0,197.5 L195.5,204.6 L195.0,214.6 L194.5,210.1 L194.0,213.2 L193.5,204.3 L193.0,194.7 L192.5,204.6 L192.0,207.0 L191.5,200.0 L191.0,205.3 L190.5,191.8 L190.0,188.8 L189.5,184.3 L189.0,189.2 L188.5,194.2 L188.0,194.2 L187.5,201.4 L187.0,204.4 L186.5,217.4 L186.0,212.0 L185.5,205.7 L185.0,187.2 L184.5,195.7 L184.0,207.7 L183.5,216.2 L183.0,186.9 L182.5,180.6 L182.0,184.4 L181.5,196.0 L181.0,187.7 L180.5,194.8 L180.0,197.6 L179.5,198.4 L179.0,203.9 L178.5,208.9 L178.0,194.6 L177.5,196.5 L177.0,198.0 L176.5,203.0 L176.0,200.4 L175.5,192.2 L175.0,189.8 L174.5,193.9 L174.0,202.1 L173.5,201.9 L173.0,209.1 L172.5,214.0 L172.0,212.8 L171.5,208.0 L171.0,212.1 L170.5,205.6 L170.0,210.9 L169.5,198.8 L169.0,185.1 L168.5,195.2 L168.0,207.2 L167.5,183.8 L167.0,189.2 L166.5,191.8 L166.0,203.0 L165.5,196.9 L165.0,211.3 L164.5,216.4 L164.0,198.5 L163.5,180.3 L163.0,183.2 L162.5,177.7 L162.0,180.1 L161.5,192.5 L161.0,189.9 L160.5,190.1 L160.0,196.6 L159.5,201.4 L159.0,203.7 L158.5,204.1 L158.0,180.7 L157.5,179.1 L157.0,183.4 L156.5,185.9 L156.0,194.6 L155.5,204.7 L155.0,215.4 L154.5,205.5 L154.0,205.2 L153.5,188.7 L153.0,188.0 L152.5,192.2 L152.0,200.7 L151.5,201.9 L151.0,207.9 L150.5,214.6 L150.0,207.9 L149.5,193.6 L149.0,197.6 L148.5,196.6 L148.0,187.5 L147.5,194.5 L147.0,199.4 L146.5,203.3 L146.0,197.3 L145.5,195.0 L145.0,190.5 L144.5,188.9 L144.0,188.1 L143.5,199.1 L143.0,203.0 L142.5,192.8 L142.0,177.1 L141.5,191.0 L141.0,182.8 L140.5,197.5 L140.0,190.5 L139.5,199.6 L139.0,200.1 L138.5,203.4 L138.0,208.8 L137.5,199.1 L137.0,199.0 L136.5,189.0 L136.0,193.4 L135.5,205.3 L135.0,208.4 L134.5,191.2 L134.0,190.0 L133.5,196.8 L133.0,200.9 L132.5,209.9 L132.0,210.2 L131.5,208.3 L131.0,198.4 L130.5,201.8 L130.0,209.1 L129.5,213.7 L129.0,194.9 L128.5,193.8 L128.0,179.4 L127.5,178.4 L127.0,187.5 L126.5,194.6 L126.0,216.0 L125.5,212.4 L125.0,207.4 L124.5,213.5 L124.0,215.7 L123.5,202.1 L123.0,215.0 L122.5,208.6 L122.0,202.2 L121.5,191.4 L121.0,193.9 L120.5,197.6 L120.0,194.8 L119.5,202.2 L119.0,209.6 L118.5,205.1 L118.0,209.9 L117.5,212.4 L117.0,197.3 L116.5,206.2 L116.0,204.7 L115.5,177.6 L115.0,182.9 L114.5,180.4 L114.0,182.0 L113.5,179.4 L113.0,186.0 L112.5,195.0 L112.0,200.8 L111.5,191.3 L111.0,190.3 L110.5,181.6 L110.0,176.7 L109.5,179.4 L109.0,181.3 L108.5,186.6 L108.0,200.0 L107.5,214.6 L107.0,202.5 L106.5,214.2 L106.0,203.7 L105.5,200.4 L105.0,218.6 L104.5,194.2 L104.0,193.1 L103.5,204.3 L103.0,212.3 L102.5,210.3 L102.0,190.8 L101.5,205.4 L101.0,201.9 L100.5,206.7 L100.0,200.5 L99.5,202.1 L99.0,200.1 L98.5,191.0 L98.0,194.3 L97.5,198.7 L97.0,212.0 L96.5,204.4 L96.0,193.0 L95.5,193.2 L95.0,202.2 L94.5,200.2 L94.0,197.7 L93.5,203.8 L93.0,218.6 L92.5,212.5 L92.0,215.3 L91.5,192.7 L91.0,177.5 L90.5,186.5 L90.0,179.8 L89.5,185.7 L89.0,187.3 L88.5,192.4 L88.0,200.8 L87.5,206.1 L87.0,210.0 L86.5,203.8 L86.0,201.0 L85.5,182.6 L85.0,197.3 L84.5,206.0 L84.0,190.4 L83.5,192.0 L83.0,195.7 L82.5,201.3 L82.0,185.5 L81.5,187.5 L81.0,193.3 L80.5,200.5 L80.0,203.6 L79.5,210.1 L79.0,195.3 L78.5,183.8 L78.0,180.2 L77.5,174.7 L77.0,175.4 L76.5,181.2 L76.0,179.3 L75.5,183.0 L75.0,183.8 L74.5,185.9 L74.0,191.1 L73.5,193.5 L73.0,194.9 L72.5,204.1 L72.0,204.5 L71.5,211.7 L71.0,206.9 L70.5,202.1 L70.0,210.1 L69.5,199.6 L69.0,188.4 L68.5,187.2 L68.0,189.5 L67.5,184.6 L67.0,179.2 L66.5,180.4 L66.0,183.5 L65.5,181.9 L65.0,183.2 L64.5,190.3 L64.0,192.0 L63.5,199.3 L63.0,188.1 L62.5,197.3 L62.0,200.7 L61.5,214.9 L61.0,200.9 L60.5,191.8 L60.0,186.3 L59.5,190.5 L59.0,192.0 L58.5,198.4 L58.0,202.3 L57.5,217.1 L57.0,209.9 L56.5,211.4 L56.0,201.9 L55.5,202.7 L55.0,204.4 L54.5,216.9 L54.0,200.9 L53.5,197.9 L53.0,190.7 L52.5,194.5 L52.0,191.8 L51.5,193.5 L51.0,199.5 L50.5,202.1 L50.0,209.5 L49.5,216.0 L49.0,216.1 L48.5,198.1 L48.0,188.2 L47.5,199.7 L47.0,184.9 L46.5,185.6 L46.0,191.6 L45.5,201.2 L45.0,209.9 L44.5,206.1 L44.0,210.3 L43.5,193.1 L43.0,180.5 L42.5,191.5 L42.0,194.3 L41.5,196.7 L41.0,204.3 L40.5,200.7 L40.0,185.9 L39.5,186.4 L39.0,177.2 L38.5,182.8 L38.0,185.8 L37.5,189.8 L37.0,194.4 L36.5,208.7 L36.0,201.2 L35.5,204.0 L35.0,192.4 L34.5,188.7 L34.0,188.8 L33.5,187.3 L33.0,189.4 L32.5,196.5 L32.0,205.9 L31.5,212.6 L31.0,213.0 L30.5,208.6 L30.0,196.5 L29.5,189.4 L29.0,201.8 L28.5,202.3 L28.0,205.5 L27.5,201.1 L27.0,186.2 L26.5,191.9 L26.0,193.3 L25.5,202.2 L25.0,218.6 L24.5,204.6 L24.0,212.5 L23.5,215.4 L23.0,201.3 L22.5,211.9 L22.0,207.8 L21.5,213.6 L21.0,202.5 L20.5,197.1 L20.0,195.2 L19.5,192.3 L19.0,182.5 L18.5,179.9 L18.0,175.1 L17.5,179.5 L17.0,175.0 L16.5,175.1 L16.0,173.2 L15.5,168.7 L15.0,165.3 L14.5,164.6 L14.0,162.9 L13.5,164.0 L13.0,161.2 L12.5,159.7 L12.0,159.1 L11.5,158.3 L11.0,157.4 L10.5,157.2 L10.0,156.7 L9.5,155.8 L9.0,155.6Z" fill="#d7d7d7" clip-path="url(#cl)"/>
  <path d="M9.0,155.6 L9.5,155.4 L10.0,154.4 L10.5,153.4 L11.0,152.8 L11.5,151.5 L12.0,151.2 L12.5,150.6 L13.0,150.6 L13.5,148.8 L14.0,147.4 L14.5,147.6 L15.0,148.3 L15.5,143.5 L16.0,140.5 L16.5,136.3 L17.0,132.8 L17.5,134.5 L18.0,128.0 L18.5,126.4 L19.0,126.8 L19.5,122.2 L20.0,124.5 L20.5,124.4 L21.0,127.1 L21.5,127.5 L22.0,131.3 L22.5,132.5 L23.0,108.5 L23.5,103.8 L24.0,113.8 L24.5,125.9 L25.0,109.0 L25.5,98.4 L26.0,113.0 L26.5,115.5 L27.0,119.9 L27.5,108.1 L28.0,108.1 L28.5,109.9 L29.0,117.6 L29.5,116.3 L30.0,115.3 L30.5,132.0 L31.0,109.8 L31.5,97.7 L32.0,99.8 L32.5,112.0 L33.0,112.3 L33.5,110.2 L34.0,117.7 L34.5,98.2 L35.0,109.3 L35.5,119.0 L36.0,126.4 L36.5,116.5 L37.0,94.5 L37.5,109.7 L38.0,107.2 L38.5,91.6 L39.0,100.4 L39.5,107.0 L40.0,112.3 L40.5,95.4 L41.0,99.1 L41.5,104.4 L42.0,101.8 L42.5,109.2 L43.0,118.0 L43.5,126.0 L44.0,129.3 L44.5,123.9 L45.0,127.8 L45.5,127.1 L46.0,125.5 L46.5,127.2 L47.0,128.2 L47.5,129.3 L48.0,123.5 L48.5,120.8 L49.0,123.5 L49.5,108.4 L50.0,110.6 L50.5,112.9 L51.0,93.1 L51.5,98.6 L52.0,105.6 L52.5,110.2 L53.0,107.0 L53.5,103.9 L54.0,99.3 L54.5,106.3 L55.0,110.0 L55.5,109.6 L56.0,113.0 L56.5,108.2 L57.0,96.9 L57.5,101.6 L58.0,106.1 L58.5,111.4 L59.0,107.5 L59.5,98.3 L60.0,103.8 L60.5,93.5 L61.0,109.9 L61.5,115.9 L62.0,114.2 L62.5,105.8 L63.0,96.6 L63.5,104.4 L64.0,117.9 L64.5,117.7 L65.0,114.9 L65.5,114.6 L66.0,122.1 L66.5,120.1 L67.0,122.3 L67.5,126.0 L68.0,131.7 L68.5,122.2 L69.0,117.2 L69.5,129.4 L70.0,134.1 L70.5,123.0 L71.0,104.5 L71.5,106.6 L72.0,104.4 L72.5,115.5 L73.0,107.0 L73.5,112.6 L74.0,103.2 L74.5,116.5 L75.0,109.7 L75.5,104.9 L76.0,106.8 L76.5,109.6 L77.0,117.6 L77.5,122.1 L78.0,113.9 L78.5,104.8 L79.0,113.0 L79.5,117.9 L80.0,117.9 L80.5,122.3 L81.0,116.3 L81.5,115.5 L82.0,114.1 L82.5,101.1 L83.0,98.3 L83.5,91.6 L84.0,102.0 L84.5,107.6 L85.0,115.3 L85.5,113.9 L86.0,107.1 L86.5,111.1 L87.0,120.1 L87.5,129.7 L88.0,109.3 L88.5,105.2 L89.0,104.9 L89.5,101.8 L90.0,112.3 L90.5,117.3 L91.0,120.2 L91.5,120.4 L92.0,115.8 L92.5,115.8 L93.0,116.8 L93.5,104.1 L94.0,99.3 L94.5,107.3 L95.0,101.1 L95.5,116.2 L96.0,100.4 L96.5,102.0 L97.0,108.6 L97.5,117.8 L98.0,120.7 L98.5,130.2 L99.0,129.4 L99.5,127.9 L100.0,113.6 L100.5,95.2 L101.0,105.6 L101.5,111.1 L102.0,118.0 L102.5,124.5 L103.0,126.5 L103.5,129.1 L104.0,109.6 L104.5,104.3 L105.0,109.7 L105.5,115.9 L106.0,117.3 L106.5,120.6 L107.0,109.0 L107.5,111.6 L108.0,103.5 L108.5,118.6 L109.0,120.6 L109.5,117.3 L110.0,126.0 L110.5,123.8 L111.0,107.2 L111.5,94.8 L112.0,103.3 L112.5,113.9 L113.0,121.6 L113.5,115.5 L114.0,113.8 L114.5,104.1 L115.0,103.1 L115.5,98.0 L116.0,100.7 L116.5,108.0 L117.0,109.4 L117.5,116.4 L118.0,118.6 L118.5,124.2 L119.0,124.6 L119.5,128.5 L120.0,108.3 L120.5,102.8 L121.0,104.6 L121.5,100.9 L122.0,117.0 L122.5,99.2 L123.0,104.7 L123.5,109.4 L124.0,120.8 L124.5,124.0 L125.0,116.5 L125.5,102.4 L126.0,100.7 L126.5,105.6 L127.0,94.0 L127.5,103.9 L128.0,108.1 L128.5,112.2 L129.0,117.8 L129.5,108.6 L130.0,106.3 L130.5,112.9 L131.0,103.9 L131.5,95.4 L132.0,93.6 L132.5,112.4 L133.0,113.2 L133.5,121.7 L134.0,125.9 L134.5,128.4 L135.0,133.0 L135.5,130.0 L136.0,131.7 L136.5,131.6 L137.0,132.5 L137.5,134.5 L138.0,129.7 L138.5,132.3 L139.0,129.7 L139.5,134.0 L140.0,132.0 L140.5,126.8 L141.0,108.0 L141.5,108.6 L142.0,106.9 L142.5,110.3 L143.0,113.4 L143.5,119.6 L144.0,121.9 L144.5,126.1 L145.0,130.3 L145.5,122.1 L146.0,117.3 L146.5,118.1 L147.0,110.4 L147.5,117.5 L148.0,119.2 L148.5,123.6 L149.0,119.0 L149.5,120.7 L150.0,132.2 L150.5,129.6 L151.0,131.1 L151.5,111.5 L152.0,112.1 L152.5,112.8 L153.0,112.7 L153.5,106.1 L154.0,104.0 L154.5,108.1 L155.0,108.7 L155.5,109.7 L156.0,111.9 L156.5,104.7 L157.0,106.2 L157.5,107.8 L158.0,98.3 L158.5,101.0 L159.0,106.0 L159.5,114.3 L160.0,118.8 L160.5,127.9 L161.0,120.0 L161.5,123.7 L162.0,121.8 L162.5,121.6 L163.0,114.0 L163.5,113.5 L164.0,114.3 L164.5,102.7 L165.0,105.0 L165.5,113.6 L166.0,115.1 L166.5,117.6 L167.0,119.2 L167.5,115.3 L168.0,122.0 L168.5,123.3 L169.0,124.4 L169.5,130.8 L170.0,132.0 L170.5,128.4 L171.0,112.1 L171.5,96.1 L172.0,98.1 L172.5,102.3 L173.0,106.2 L173.5,92.3 L174.0,95.3 L174.5,101.9 L175.0,107.2 L175.5,111.8 L176.0,115.3 L176.5,103.0 L177.0,113.0 L177.5,114.1 L178.0,97.6 L178.5,115.3 L179.0,118.1 L179.5,95.0 L180.0,96.0 L180.5,100.1 L181.0,92.2 L181.5,104.1 L182.0,109.5 L182.5,116.7 L183.0,122.7 L183.5,119.8 L184.0,122.0 L184.5,123.8 L185.0,126.2 L185.5,124.2 L186.0,113.9 L186.5,103.1 L187.0,94.0 L187.5,104.0 L188.0,110.6 L188.5,106.9 L189.0,109.7 L189.5,123.5 L190.0,124.1 L190.5,121.6 L191.0,103.0 L191.5,103.3 L192.0,106.4 L192.5,111.7 L193.0,116.2 L193.5,114.3 L194.0,109.0 L194.5,103.0 L195.0,114.5 L195.5,118.4 L196.0,115.6 L196.5,111.3 L197.0,111.8 L197.5,102.6 L198.0,119.6 L198.5,109.3 L199.0,110.3 L199.5,98.3 L200.0,103.9 L200.5,106.7 L201.0,113.9 L201.5,111.5 L202.0,121.8 L202.5,126.6 L203.0,120.3 L203.5,104.5 L204.0,110.4 L204.5,102.1 L205.0,105.1 L205.5,106.5 L206.0,117.2 L206.5,108.2 L207.0,105.2 L207.5,95.9 L208.0,106.7 L208.5,99.2 L209.0,99.6 L209.5,103.2 L210.0,108.6 L210.5,92.8 L211.0,94.8 L211.5,103.5 L212.0,96.6 L212.5,97.3 L213.0,95.9 L213.5,104.5 L214.0,108.7 L214.5,111.8 L215.0,99.6 L215.5,102.7 L216.0,106.4 L216.5,112.1 L217.0,107.6 L217.5,100.1 L218.0,99.4 L218.5,103.3 L219.0,105.8 L219.5,116.0 L220.0,116.3 L220.5,117.4 L221.0,117.4 L221.5,122.0 L222.0,123.1 L222.5,123.4 L223.0,123.2 L223.5,107.8 L224.0,111.5 L224.5,103.6 L225.0,107.0 L225.5,110.1 L226.0,111.6 L226.5,104.9 L227.0,110.2 L227.5,97.8 L228.0,97.4 L228.5,106.9 L229.0,113.4 L229.5,115.4 L230.0,121.5 L230.5,121.9 L231.0,122.6 L231.5,118.6 L232.0,107.2 L232.5,112.0 L233.0,117.5 L233.5,119.1 L234.0,125.8 L234.5,121.7 L235.0,101.6 L235.5,106.0 L236.0,100.8 L236.5,118.4 L237.0,107.3 L237.5,112.8 L238.0,114.7 L238.5,125.2 L239.0,121.2 L239.5,106.3 L240.0,114.3 L240.5,112.2 L241.0,96.9 L241.5,105.5 L242.0,109.6 L242.5,117.9 L243.0,121.1 L243.5,127.5 L244.0,125.2 L244.5,121.6 L245.0,100.6 L245.5,99.4 L246.0,100.2 L246.5,104.0 L247.0,105.3 L247.5,106.2 L248.0,109.5 L248.5,102.9 L249.0,115.9 L249.5,109.9 L250.0,97.7 L250.5,105.4 L251.0,103.4 L251.5,96.9 L252.0,100.8 L252.5,105.7 L253.0,102.8 L253.5,98.5 L254.0,101.6 L254.5,98.2 L255.0,102.4 L255.5,114.9 L256.0,111.0 L256.5,92.6 L257.0,101.0 L257.5,103.5 L258.0,110.2 L258.5,111.9 L259.0,120.0 L259.5,110.1 L260.0,107.0 L260.5,114.9 L261.0,112.6 L261.5,116.7 L262.0,114.8 L262.5,122.5 L263.0,119.1 L263.5,113.6 L264.0,111.3 L264.5,106.6 L265.0,97.9 L265.5,98.5 L266.0,103.8 L266.5,101.0 L267.0,99.5 L267.5,94.3 L268.0,97.7 L268.5,102.8 L269.0,106.7 L269.5,98.1 L270.0,103.0 L270.5,105.5 L271.0,103.1 L271.5,97.1 L272.0,105.5 L272.5,111.8 L273.0,116.0 L273.5,102.6 L274.0,92.1 L274.5,100.2 L275.0,101.0 L275.5,97.1 L276.0,102.0 L276.5,106.1 L277.0,111.2 L277.5,101.3 L278.0,100.6 L278.5,104.7 L279.0,106.9 L279.5,101.0 L280.0,111.8 L280.5,114.0 L281.0,112.3 L281.5,116.0 L282.0,119.5 L282.5,113.1 L283.0,107.4 L283.5,106.8 L284.0,111.9 L284.5,114.0 L285.0,100.8 L285.5,100.9 L286.0,107.7 L286.5,95.7 L287.0,107.5 L287.5,102.8 L288.0,106.6 L288.5,104.1 L289.0,108.8 L289.5,112.7 L290.0,108.4 L290.5,108.4 L291.0,113.7 L291.5,110.8 L292.0,117.1 L292.5,118.0 L293.0,122.1 L293.5,121.8 L294.0,111.5 L294.5,101.9 L295.0,101.2 L295.5,103.2 L296.0,99.2 L296.5,111.3 L297.0,105.8 L297.5,108.5 L298.0,110.9 L298.5,112.8 L299.0,107.8 L299.5,112.0 L300.0,102.8 L300.5,98.5 L301.0,105.5 L301.5,108.1 L302.0,99.0 L302.5,98.3 L303.0,98.0 L303.5,104.6 L304.0,109.4 L304.5,99.7 L305.0,106.3 L305.5,104.7 L306.0,108.9 L306.5,114.7 L307.0,112.7 L307.5,115.0 L308.0,122.6 L308.5,119.0 L309.0,121.2 L309.5,125.1 L310.0,123.0 L310.5,123.2 L311.0,123.7 L311.5,123.9 L312.0,120.1 L312.5,110.0 L313.0,95.3 L313.5,96.1 L314.0,96.4 L314.5,98.4 L315.0,104.7 L315.5,112.6 L316.0,114.9 L316.5,121.8 L317.0,121.2 L317.5,115.8 L318.0,105.5 L318.5,106.8 L319.0,112.8 L319.5,112.3 L320.0,118.6 L320.5,113.8 L321.0,103.6 L321.5,98.8 L322.0,100.7 L322.5,97.3 L323.0,106.8 L323.5,108.3 L324.0,112.8 L324.5,113.0 L325.0,116.4 L325.5,111.1 L326.0,113.1 L326.5,116.0 L327.0,114.2 L327.5,109.1 L328.0,119.2 L328.5,117.7 L329.0,119.2 L329.5,115.4 L330.0,107.7 L330.5,115.8 L331.0,111.6 L331.5,114.8 L332.0,95.4 L332.5,100.4 L333.0,101.6 L333.5,106.6 L334.0,104.7 L334.5,113.5 L335.0,115.4 L335.5,103.7 L336.0,103.2 L336.5,111.1 L337.0,110.5 L337.5,113.0 L338.0,115.6 L338.5,118.8 L339.0,111.5 L339.5,99.3 L340.0,102.2 L340.5,107.3 L341.0,107.5 L341.5,110.9 L342.0,111.4 L342.5,105.1 L343.0,102.5 L343.5,107.4 L344.0,110.4 L344.5,109.9 L345.0,102.8 L345.5,112.3 L346.0,103.4 L346.5,104.1 L347.0,93.4 L347.5,99.1 L348.0,102.2 L348.5,106.9 L349.0,116.8 L349.5,101.8 L350.0,102.7 L350.5,99.5 L351.0,107.5 L351.5,114.1 L352.0,116.5 L352.5,106.0 L353.0,100.5 L353.5,111.7 L354.0,109.7 L354.5,120.7 L355.0,115.8 L355.5,121.6 L356.0,109.7 L356.5,121.4 L357.0,123.7 L357.5,119.0 L358.0,118.3 L358.5,108.2 L359.0,100.6 L359.5,110.3 L360.0,113.2 L360.5,112.2 L361.0,114.1 L361.5,120.8 L362.0,112.6 L362.5,99.9 L363.0,104.9 L363.5,107.3 L364.0,109.0 L364.5,117.2 L365.0,115.5 L365.5,110.9 L366.0,97.1 L366.5,103.6 L367.0,106.9 L367.5,104.4 L368.0,110.3 L368.5,103.4 L369.0,101.4 L369.5,103.5 L370.0,114.9 L370.5,105.0 L371.0,102.2 L371.5,103.4 L372.0,96.6 L372.5,110.7 L373.0,112.0 L373.5,102.5 L374.0,105.7 L374.5,109.6 L375.0,102.3 L375.5,100.5 L376.0,108.8 L376.5,112.1 L377.0,115.5 L377.5,119.3 L378.0,122.7 L378.5,122.1 L379.0,96.9 L379.5,94.5 L380.0,97.5 L380.5,107.0 L381.0,108.8 L381.5,115.0 L382.0,116.8 L382.5,123.0 L383.0,124.8 L383.5,113.1 L384.0,120.1 L384.5,122.1 L385.0,107.5 L385.5,114.4 L386.0,115.2 L386.5,106.2 L387.0,99.0 L387.5,103.7 L388.0,105.7 L388.5,105.6 L389.0,110.5 L389.5,115.1 L390.0,119.0 L390.5,106.5 L391.0,99.7 L391.5,98.3 L392.0,107.5 L392.5,110.1 L393.0,114.7 L393.5,113.9 L394.0,107.1 L394.5,105.0 L395.0,109.7 L395.5,105.0 L396.0,91.7 L396.5,94.3 L397.0,102.0 L397.5,106.0 L398.0,111.0 L398.5,112.0 L399.0,107.9 L399.5,123.5 L400.0,125.8 L400.5,124.7 L401.0,122.2 L401.5,124.6 L402.0,101.5 L402.5,91.8 L403.0,103.2 L403.5,108.3 L404.0,103.6 L404.5,102.5 L405.0,114.6 L405.5,119.5 L406.0,123.9 L406.5,120.3 L407.0,106.2 L407.5,114.7 L408.0,115.7 L408.5,122.1 L409.0,124.1 L409.5,109.9 L410.0,115.2 L410.5,102.9 L411.0,106.4 L411.5,110.1 L412.0,119.5 L412.5,121.2 L413.0,115.0 L413.5,116.1 L414.0,116.4 L414.5,109.7 L415.0,116.5 L415.5,120.8 L416.0,113.5 L416.5,99.5 L417.0,94.5 L417.5,95.0 L418.0,102.2 L418.5,107.2 L419.0,102.5 L419.5,97.4 L420.0,101.1 L420.5,106.3 L421.0,106.6 L421.5,112.4 L422.0,113.2 L422.5,117.3 L423.0,106.3 L423.5,102.3 L424.0,92.1 L424.5,96.6 L425.0,106.0 L425.5,91.6 L426.0,93.8 L426.5,93.7 L427.0,105.9 L427.5,106.1 L428.0,105.7 L428.5,108.7 L429.0,105.3 L429.5,110.1 L430.0,114.4 L430.5,111.9 L431.0,97.8 L431.5,102.9 L432.0,106.0 L432.5,108.3 L433.0,107.1 L433.5,105.8 L434.0,108.2 L434.5,110.6 L435.0,111.0 L435.5,96.6 L436.0,103.3 L436.5,103.3 L437.0,107.6 L437.5,110.8 L438.0,91.7 L438.5,94.5 L439.0,98.1 L439.5,103.9 L440.0,100.0 L440.5,110.7 L441.0,111.1 L441.5,112.8 L442.0,119.0 L442.5,121.5 L443.0,125.5 L443.5,110.0 L444.0,102.4 L444.5,102.0 L445.0,113.3 L445.5,121.1 L446.0,120.9 L446.5,123.7 L447.0,124.9 L447.5,113.7 L448.0,111.8 L448.5,115.6 L449.0,105.4 L449.5,103.4 L450.0,91.6 L450.5,94.1 L451.0,91.8 L451.5,98.2 L452.0,91.6 L452.5,109.0 L453.0,108.8 L453.5,114.8 L454.0,113.9 L454.5,109.9 L455.0,102.0 L455.5,96.7 L456.0,96.4 L456.5,100.1 L457.0,107.9 L457.5,109.5 L458.0,114.1 L458.5,115.8 L459.0,105.8 L459.5,118.3 L460.0,104.2 L460.5,93.9 L461.0,93.2 L461.5,99.8 L462.0,109.2 L462.5,113.0 L463.0,107.6 L463.5,98.0 L464.0,97.2 L464.5,102.3 L465.0,95.8 L465.5,106.7 L466.0,108.1 L466.5,108.0 L467.0,114.4 L467.5,112.7 L468.0,114.9 L468.5,115.1 L469.0,115.9 L469.5,113.2 L470.0,99.6 L470.5,114.0 L471.0,98.3 L471.5,97.0 L472.0,101.4 L472.5,104.4 L473.0,105.2 L473.5,107.9 L474.0,103.1 L474.5,98.3 L475.0,102.7 L475.5,91.6 L476.0,101.2 L476.5,97.2 L477.0,95.4 L477.5,110.6 L478.0,100.9 L478.5,114.4 L479.0,119.1 L479.5,117.1 L480.0,107.4 L480.5,98.1 L481.0,97.3 L481.5,107.6 L482.0,105.4 L482.5,104.8 L483.0,107.7 L483.5,97.9 L484.0,103.3 L484.5,101.8 L485.0,111.7 L485.5,114.0 L486.0,112.8 L486.5,109.5 L487.0,107.8 L487.5,106.5 L488.0,110.2 L488.5,108.7 L489.0,111.1 L489.5,102.9 L490.0,92.4 L490.5,95.5 L491.0,101.2 L491.5,104.9 L492.0,111.6 L492.5,107.7 L493.0,102.8 L493.5,103.5 L494.0,108.9 L494.5,109.9 L495.0,110.7 L495.5,108.8 L496.0,98.2 L496.5,106.8 L497.0,106.0 L497.5,98.4 L498.0,112.0 L498.5,110.2 L499.0,97.0 L499.5,98.6 L500.0,109.6 L500.5,114.0 L501.0,108.9 L501.5,107.0 L502.0,110.6 L502.5,114.6 L503.0,106.3 L503.5,108.9 L504.0,98.9 L504.5,96.0 L505.0,95.8 L505.5,99.4 L506.0,99.3 L506.5,103.0 L507.0,107.4 L507.5,111.2 L508.0,103.4 L508.5,115.5 L509.0,111.0 L509.5,112.8 L510.0,115.0 L510.5,115.3 L511.0,122.8 L511.5,123.5 L512.0,121.6 L512.5,113.4 L513.0,99.4 L513.5,99.5 L514.0,92.8 L514.5,108.4 L515.0,109.8 L515.5,109.3 L516.0,111.8 L516.5,103.0 L517.0,105.8 L517.5,101.7 L518.0,106.9 L518.5,108.5 L519.0,108.4 L519.5,112.1 L520.0,99.8 L520.5,110.0 L521.0,108.1 L521.5,104.4 L522.0,107.9 L522.5,98.1 L523.0,92.8 L523.5,106.5 L524.0,112.9 L524.5,118.2 L525.0,117.0 L525.5,122.0 L526.0,119.3 L526.5,109.9 L527.0,104.5 L527.5,100.6 L528.0,93.4 L528.5,96.9 L529.0,99.2 L529.5,106.2 L530.0,113.1 L530.5,114.0 L531.0,109.6 L531.5,96.9 L532.0,93.9 L532.5,102.6 L533.0,105.4 L533.5,110.5 L534.0,114.9 L534.5,114.6 L535.0,106.7 L535.5,103.6 L536.0,106.8 L536.5,106.2 L537.0,106.1 L537.5,101.0 L538.0,115.0 L538.5,120.8 L539.0,117.7 L539.5,117.1 L540.0,118.6 L540.5,120.4 L541.0,124.3 L541.5,122.2 L542.0,121.0 L542.5,113.0 L543.0,103.8 L543.5,100.7 L544.0,103.1 L544.5,106.3 L545.0,110.6 L545.5,112.3 L546.0,95.6 L546.5,94.8 L547.0,101.7 L547.5,93.0 L548.0,92.6 L548.5,101.1 L549.0,112.6 L549.5,114.2 L550.0,95.1 L550.5,105.2 L551.0,114.6 L551.5,107.4 L552.0,106.2 L552.5,104.3 L553.0,110.1 L553.5,100.6 L554.0,115.1 L554.5,102.0 L555.0,95.7 L555.5,102.7 L556.0,106.5 L556.5,111.6 L557.0,110.3 L557.5,110.7 L558.0,110.9 L558.5,113.4 L559.0,109.7 L559.5,109.5 L560.0,104.9 L560.5,99.7 L561.0,92.4 L561.5,101.6 L562.0,107.5 L562.5,114.1 L563.0,100.8 L563.5,96.7 L564.0,105.8 L564.5,106.4 L565.0,103.1 L565.5,107.4 L566.0,98.1 L566.5,97.4 L567.0,98.8 L567.5,96.9 L568.0,101.8 L568.5,104.6 L569.0,114.2 L569.5,115.6 L570.0,119.1 L570.5,115.2 L571.0,118.6 L571.5,114.2 L572.0,102.1 L572.5,103.3 L573.0,112.7 L573.5,110.8 L574.0,108.9 L574.5,109.9 L575.0,115.9 L575.5,119.2 L576.0,122.9 L576.5,110.3 L577.0,104.6 L577.5,103.0 L578.0,112.6 L578.5,103.8 L579.0,99.8 L579.5,100.5 L580.0,104.1 L580.5,112.8 L581.0,112.3 L581.5,115.1 L582.0,118.9 L582.5,116.0 L583.0,119.9 L583.5,119.8 L584.0,126.1 L584.5,124.2 L585.0,115.2 L585.5,104.6 L586.0,114.9 L586.5,118.3 L587.0,117.0 L587.5,111.5 L588.0,112.4 L588.5,116.0 L589.0,123.5 L589.5,120.2 L590.0,121.0 L590.5,119.5 L591.0,112.7 L591.5,125.5 L592.0,122.4 L592.5,122.9 L593.0,113.8 L593.5,107.2 L594.0,98.0 L594.5,105.5 L595.0,110.6 L595.5,108.1 L596.0,109.9 L596.5,117.5 L597.0,122.4 L597.5,119.9 L598.0,101.0 L598.5,98.1 L599.0,97.4 L599.5,109.4 L600.0,113.9 L600.5,118.0 L601.0,116.9 L601.5,110.0 L602.0,101.6 L602.5,107.1 L603.0,103.8 L603.5,98.8 L604.0,108.9 L604.5,114.6 L605.0,100.7 L605.5,105.5 L606.0,106.7 L606.5,108.8 L607.0,114.9 L607.5,113.6 L608.0,103.9 L608.5,100.5 L609.0,102.2 L609.5,112.4 L610.0,111.5 L610.5,114.7 L611.0,109.2 L611.5,106.0 L612.0,107.6 L612.5,104.1 L613.0,110.3 L613.5,112.9 L614.0,117.0 L614.5,120.2 L615.0,115.6 L615.5,111.1 L616.0,104.9 L616.5,108.6 L617.0,111.3 L617.5,116.2 L618.0,118.6 L618.5,117.1 L619.0,113.3 L619.5,107.3 L620.0,110.0 L620.5,117.5 L621.0,118.9 L621.5,120.7 L622.0,120.2 L622.5,123.4 L623.0,123.9 L623.5,125.0 L624.0,128.4 L624.5,131.1 L625.0,132.8 L625.5,132.1 L626.0,131.0 L626.5,133.8 L627.0,132.4 L627.5,131.4 L628.0,135.8 L628.5,133.5 L629.0,135.6 L629.5,134.4 L630.0,139.7 L630.5,138.1 L631.0,140.2 L631.5,139.7 L632.0,140.2 L632.5,139.9 L633.0,138.1 L633.5,140.2 L634.0,141.4 L634.5,140.9 L635.0,142.8 L635.5,143.6 L636.0,141.8 L636.5,145.4 L637.0,145.6 L637.5,144.5 L638.0,144.0 L638.5,144.9 L639.0,144.5 L639.5,144.9 L640.0,145.8 L640.5,147.1 L641.0,147.9 L641.5,146.6 L642.0,146.5 L642.5,147.5 L643.0,147.2 L643.5,147.6 L644.0,148.1 L644.5,148.7 L645.0,149.8 L645.5,148.9 L646.0,149.2 L646.5,150.8 L647.0,149.8 L647.5,150.6 L648.0,151.7 L648.5,151.6 L649.0,152.6 L649.5,152.8 L650.0,153.5 L650.5,153.6 L651.0,153.3 L651.5,153.5 L652.0,154.1 L652.5,153.6 L653.0,153.2 L653.5,153.7 L654.0,154.4 L654.5,154.6 L655.0,154.9 L655.5,154.9 L656.0,155.1 L656.5,155.4 L657.0,155.6 L657.0,155.6 L656.5,155.7 L656.0,155.9 L655.5,156.0 L655.0,156.2 L654.5,156.6 L654.0,156.5 L653.5,156.2 L653.0,156.7 L652.5,156.8 L652.0,156.8 L651.5,156.6 L651.0,156.0 L650.5,156.6 L650.0,157.1 L649.5,157.6 L649.0,158.0 L648.5,157.6 L648.0,157.5 L647.5,158.3 L647.0,158.1 L646.5,158.6 L646.0,159.7 L645.5,160.2 L645.0,160.6 L644.5,160.8 L644.0,159.8 L643.5,159.3 L643.0,159.8 L642.5,160.6 L642.0,160.9 L641.5,160.7 L641.0,161.6 L640.5,163.0 L640.0,164.3 L639.5,164.7 L639.0,164.4 L638.5,162.4 L638.0,162.1 L637.5,162.9 L637.0,165.7 L636.5,166.0 L636.0,164.9 L635.5,168.0 L635.0,167.2 L634.5,168.6 L634.0,164.0 L633.5,167.8 L633.0,165.6 L632.5,170.0 L632.0,169.0 L631.5,170.1 L631.0,172.2 L630.5,173.1 L630.0,172.4 L629.5,170.1 L629.0,177.5 L628.5,178.6 L628.0,176.6 L627.5,176.4 L627.0,177.5 L626.5,176.3 L626.0,174.2 L625.5,179.8 L625.0,179.0 L624.5,182.0 L624.0,184.8 L623.5,187.0 L623.0,186.8 L622.5,193.8 L622.0,197.6 L621.5,198.6 L621.0,197.0 L620.5,193.8 L620.0,201.6 L619.5,196.0 L619.0,201.5 L618.5,202.6 L618.0,206.9 L617.5,205.5 L617.0,202.2 L616.5,201.8 L616.0,194.8 L615.5,198.5 L615.0,210.0 L614.5,198.8 L614.0,206.4 L613.5,208.2 L613.0,192.8 L612.5,185.1 L612.0,182.6 L611.5,189.0 L611.0,189.2 L610.5,198.4 L610.0,195.7 L609.5,199.7 L609.0,198.6 L608.5,201.2 L608.0,204.1 L607.5,206.2 L607.0,198.6 L606.5,209.2 L606.0,204.0 L605.5,205.9 L605.0,210.0 L604.5,209.2 L604.0,209.9 L603.5,204.8 L603.0,204.6 L602.5,208.7 L602.0,198.6 L601.5,200.6 L601.0,204.2 L600.5,198.1 L600.0,198.6 L599.5,201.0 L599.0,205.3 L598.5,209.2 L598.0,210.6 L597.5,197.2 L597.0,201.3 L596.5,217.1 L596.0,211.5 L595.5,210.3 L595.0,202.9 L594.5,202.8 L594.0,214.5 L593.5,201.8 L593.0,205.3 L592.5,204.5 L592.0,207.2 L591.5,212.9 L591.0,207.3 L590.5,203.8 L590.0,207.8 L589.5,210.8 L589.0,212.9 L588.5,196.5 L588.0,192.2 L587.5,195.4 L587.0,202.5 L586.5,205.8 L586.0,209.0 L585.5,208.5 L585.0,214.3 L584.5,201.4 L584.0,196.3 L583.5,197.1 L583.0,199.9 L582.5,203.5 L582.0,203.1 L581.5,199.9 L581.0,204.3 L580.5,206.5 L580.0,212.6 L579.5,217.8 L579.0,202.2 L578.5,204.2 L578.0,215.2 L577.5,209.2 L577.0,215.3 L576.5,211.4 L576.0,214.3 L575.5,212.6 L575.0,203.4 L574.5,199.0 L574.0,198.7 L573.5,209.1 L573.0,213.2 L572.5,194.2 L572.0,200.7 L571.5,210.5 L571.0,217.5 L570.5,211.5 L570.0,198.9 L569.5,191.9 L569.0,192.0 L568.5,195.8 L568.0,203.8 L567.5,207.7 L567.0,208.6 L566.5,203.5 L566.0,212.6 L565.5,199.8 L565.0,206.8 L564.5,212.4 L564.0,218.0 L563.5,212.7 L563.0,196.4 L562.5,196.0 L562.0,203.9 L561.5,211.6 L561.0,204.7 L560.5,194.5 L560.0,194.2 L559.5,198.7 L559.0,201.7 L558.5,203.8 L558.0,208.5 L557.5,215.9 L557.0,211.1 L556.5,192.5 L556.0,194.4 L555.5,196.1 L555.0,207.8 L554.5,203.2 L554.0,208.2 L553.5,211.8 L553.0,213.6 L552.5,204.5 L552.0,202.5 L551.5,207.5 L551.0,208.9 L550.5,208.0 L550.0,211.7 L549.5,208.9 L549.0,197.7 L548.5,202.0 L548.0,198.1 L547.5,199.7 L547.0,196.5 L546.5,187.6 L546.0,196.2 L545.5,200.5 L545.0,205.8 L544.5,211.1 L544.0,218.4 L543.5,195.6 L543.0,197.5 L542.5,194.6 L542.0,209.6 L541.5,205.3 L541.0,202.8 L540.5,191.4 L540.0,194.2 L539.5,193.0 L539.0,216.1 L538.5,208.6 L538.0,202.4 L537.5,194.8 L537.0,200.1 L536.5,189.6 L536.0,190.7 L535.5,190.8 L535.0,195.2 L534.5,195.6 L534.0,199.0 L533.5,199.4 L533.0,200.0 L532.5,206.9 L532.0,212.6 L531.5,205.0 L531.0,201.3 L530.5,206.7 L530.0,207.9 L529.5,218.6 L529.0,218.6 L528.5,208.9 L528.0,209.6 L527.5,195.2 L527.0,197.0 L526.5,199.0 L526.0,209.3 L525.5,204.3 L525.0,200.9 L524.5,192.1 L524.0,189.2 L523.5,185.3 L523.0,190.6 L522.5,196.3 L522.0,198.2 L521.5,205.1 L521.0,216.6 L520.5,215.3 L520.0,211.6 L519.5,208.1 L519.0,194.0 L518.5,194.1 L518.0,191.9 L517.5,198.3 L517.0,201.1 L516.5,200.6 L516.0,209.7 L515.5,203.6 L515.0,198.1 L514.5,206.2 L514.0,216.0 L513.5,218.4 L513.0,204.8 L512.5,194.5 L512.0,194.1 L511.5,195.9 L511.0,196.9 L510.5,201.0 L510.0,201.1 L509.5,205.6 L509.0,207.2 L508.5,203.4 L508.0,202.3 L507.5,202.6 L507.0,208.0 L506.5,217.1 L506.0,213.0 L505.5,200.2 L505.0,206.7 L504.5,203.5 L504.0,215.3 L503.5,207.8 L503.0,203.1 L502.5,205.5 L502.0,202.7 L501.5,204.5 L501.0,203.7 L500.5,198.6 L500.0,192.0 L499.5,187.8 L499.0,189.3 L498.5,186.1 L498.0,187.6 L497.5,189.8 L497.0,201.5 L496.5,193.7 L496.0,197.4 L495.5,194.3 L495.0,197.1 L494.5,201.1 L494.0,203.1 L493.5,211.8 L493.0,211.4 L492.5,193.9 L492.0,193.1 L491.5,199.9 L491.0,207.2 L490.5,203.0 L490.0,207.7 L489.5,208.4 L489.0,203.8 L488.5,208.9 L488.0,211.1 L487.5,217.6 L487.0,208.6 L486.5,216.2 L486.0,207.6 L485.5,207.0 L485.0,204.7 L484.5,203.7 L484.0,207.1 L483.5,206.5 L483.0,212.1 L482.5,206.5 L482.0,198.7 L481.5,197.9 L481.0,207.0 L480.5,212.6 L480.0,203.9 L479.5,202.6 L479.0,200.5 L478.5,214.8 L478.0,215.6 L477.5,210.9 L477.0,205.7 L476.5,209.1 L476.0,202.4 L475.5,190.8 L475.0,191.6 L474.5,190.8 L474.0,197.1 L473.5,207.5 L473.0,206.6 L472.5,211.3 L472.0,209.9 L471.5,211.1 L471.0,198.3 L470.5,192.7 L470.0,192.5 L469.5,190.2 L469.0,195.4 L468.5,197.5 L468.0,199.2 L467.5,202.7 L467.0,209.2 L466.5,212.3 L466.0,213.1 L465.5,213.5 L465.0,211.9 L464.5,203.3 L464.0,204.6 L463.5,210.2 L463.0,209.1 L462.5,201.9 L462.0,199.5 L461.5,200.7 L461.0,204.3 L460.5,200.6 L460.0,197.6 L459.5,203.7 L459.0,210.5 L458.5,208.8 L458.0,198.5 L457.5,197.8 L457.0,196.6 L456.5,204.6 L456.0,202.3 L455.5,203.4 L455.0,200.6 L454.5,209.0 L454.0,216.9 L453.5,212.6 L453.0,194.7 L452.5,190.8 L452.0,188.3 L451.5,204.6 L451.0,197.3 L450.5,207.8 L450.0,211.3 L449.5,218.6 L449.0,199.1 L448.5,202.8 L448.0,201.8 L447.5,195.7 L447.0,202.1 L446.5,208.8 L446.0,191.2 L445.5,196.3 L445.0,198.2 L444.5,211.2 L444.0,208.8 L443.5,200.5 L443.0,213.7 L442.5,209.8 L442.0,206.1 L441.5,211.6 L441.0,209.4 L440.5,196.5 L440.0,198.0 L439.5,202.8 L439.0,198.8 L438.5,204.2 L438.0,210.1 L437.5,199.6 L437.0,198.9 L436.5,191.5 L436.0,186.2 L435.5,188.9 L435.0,190.9 L434.5,189.1 L434.0,189.2 L433.5,190.4 L433.0,198.5 L432.5,204.6 L432.0,208.4 L431.5,201.3 L431.0,207.7 L430.5,209.8 L430.0,199.6 L429.5,205.7 L429.0,205.7 L428.5,214.1 L428.0,202.4 L427.5,197.2 L427.0,198.4 L426.5,204.8 L426.0,206.8 L425.5,208.9 L425.0,207.2 L424.5,196.4 L424.0,205.3 L423.5,205.8 L423.0,207.4 L422.5,218.6 L422.0,211.5 L421.5,202.4 L421.0,203.8 L420.5,210.2 L420.0,204.3 L419.5,206.0 L419.0,212.0 L418.5,204.2 L418.0,206.1 L417.5,204.3 L417.0,203.2 L416.5,198.6 L416.0,199.5 L415.5,202.6 L415.0,213.7 L414.5,197.9 L414.0,198.1 L413.5,196.3 L413.0,204.5 L412.5,215.4 L412.0,208.7 L411.5,188.4 L411.0,185.9 L410.5,196.6 L410.0,189.6 L409.5,194.6 L409.0,211.3 L408.5,204.1 L408.0,209.7 L407.5,215.4 L407.0,205.0 L406.5,206.5 L406.0,200.6 L405.5,207.5 L405.0,212.3 L404.5,204.2 L404.0,207.6 L403.5,212.4 L403.0,204.5 L402.5,192.1 L402.0,196.9 L401.5,196.4 L401.0,197.7 L400.5,202.4 L400.0,209.2 L399.5,205.0 L399.0,211.4 L398.5,215.7 L398.0,207.3 L397.5,209.2 L397.0,216.9 L396.5,198.6 L396.0,191.8 L395.5,198.2 L395.0,200.2 L394.5,204.1 L394.0,215.5 L393.5,210.5 L393.0,197.6 L392.5,200.0 L392.0,193.7 L391.5,187.8 L391.0,190.4 L390.5,193.8 L390.0,200.7 L389.5,204.7 L389.0,204.2 L388.5,206.6 L388.0,195.2 L387.5,193.4 L387.0,194.9 L386.5,193.8 L386.0,197.0 L385.5,202.1 L385.0,198.8 L384.5,206.4 L384.0,209.0 L383.5,198.9 L383.0,197.5 L382.5,200.2 L382.0,201.7 L381.5,201.2 L381.0,214.3 L380.5,212.6 L380.0,209.8 L379.5,214.4 L379.0,202.8 L378.5,204.5 L378.0,208.2 L377.5,215.1 L377.0,216.4 L376.5,215.2 L376.0,209.0 L375.5,218.3 L375.0,217.6 L374.5,209.0 L374.0,213.6 L373.5,210.2 L373.0,197.9 L372.5,189.6 L372.0,193.5 L371.5,200.7 L371.0,200.6 L370.5,202.4 L370.0,211.8 L369.5,215.4 L369.0,216.4 L368.5,206.9 L368.0,191.6 L367.5,189.7 L367.0,194.8 L366.5,205.1 L366.0,209.6 L365.5,198.6 L365.0,188.0 L364.5,187.7 L364.0,185.2 L363.5,185.4 L363.0,186.8 L362.5,183.6 L362.0,191.3 L361.5,193.2 L361.0,202.8 L360.5,208.4 L360.0,213.1 L359.5,207.8 L359.0,203.1 L358.5,207.4 L358.0,214.6 L357.5,215.3 L357.0,198.5 L356.5,201.6 L356.0,205.2 L355.5,209.3 L355.0,211.9 L354.5,199.8 L354.0,194.5 L353.5,191.1 L353.0,194.7 L352.5,194.1 L352.0,198.7 L351.5,202.2 L351.0,208.9 L350.5,212.4 L350.0,215.2 L349.5,199.7 L349.0,205.5 L348.5,208.3 L348.0,209.4 L347.5,206.4 L347.0,205.3 L346.5,194.3 L346.0,196.0 L345.5,200.5 L345.0,206.8 L344.5,200.8 L344.0,189.6 L343.5,187.9 L343.0,185.4 L342.5,184.8 L342.0,187.1 L341.5,188.9 L341.0,195.6 L340.5,203.9 L340.0,215.5 L339.5,205.3 L339.0,189.7 L338.5,190.2 L338.0,190.5 L337.5,194.6 L337.0,199.1 L336.5,199.5 L336.0,194.1 L335.5,186.5 L335.0,189.5 L334.5,189.4 L334.0,191.2 L333.5,194.0 L333.0,200.4 L332.5,201.6 L332.0,205.5 L331.5,209.6 L331.0,198.2 L330.5,192.7 L330.0,195.0 L329.5,199.0 L329.0,199.3 L328.5,214.2 L328.0,209.9 L327.5,210.7 L327.0,215.3 L326.5,200.5 L326.0,208.9 L325.5,213.8 L325.0,213.0 L324.5,202.3 L324.0,202.6 L323.5,210.7 L323.0,207.8 L322.5,203.5 L322.0,196.5 L321.5,209.7 L321.0,203.6 L320.5,202.3 L320.0,203.1 L319.5,204.8 L319.0,212.2 L318.5,209.9 L318.0,201.8 L317.5,217.8 L317.0,216.8 L316.5,208.9 L316.0,201.1 L315.5,205.2 L315.0,207.3 L314.5,203.9 L314.0,199.6 L313.5,211.4 L313.0,206.3 L312.5,208.6 L312.0,205.9 L311.5,197.1 L311.0,207.1 L310.5,192.5 L310.0,192.0 L309.5,205.6 L309.0,202.1 L308.5,202.7 L308.0,205.4 L307.5,208.6 L307.0,211.3 L306.5,211.0 L306.0,206.4 L305.5,204.8 L305.0,193.2 L304.5,184.6 L304.0,185.5 L303.5,192.6 L303.0,189.6 L302.5,202.5 L302.0,199.8 L301.5,204.0 L301.0,213.4 L300.5,200.0 L300.0,188.7 L299.5,189.0 L299.0,201.4 L298.5,205.5 L298.0,207.9 L297.5,201.4 L297.0,204.2 L296.5,206.7 L296.0,212.4 L295.5,193.1 L295.0,203.7 L294.5,197.8 L294.0,197.4 L293.5,197.7 L293.0,209.9 L292.5,197.0 L292.0,200.7 L291.5,203.1 L291.0,217.6 L290.5,216.6 L290.0,209.3 L289.5,209.8 L289.0,194.9 L288.5,192.8 L288.0,185.3 L287.5,188.0 L287.0,189.1 L286.5,195.3 L286.0,193.5 L285.5,193.8 L285.0,197.3 L284.5,195.0 L284.0,194.0 L283.5,195.0 L283.0,196.5 L282.5,200.9 L282.0,203.5 L281.5,192.9 L281.0,197.5 L280.5,197.1 L280.0,197.4 L279.5,198.7 L279.0,203.5 L278.5,215.6 L278.0,213.4 L277.5,210.4 L277.0,194.8 L276.5,198.3 L276.0,199.1 L275.5,202.1 L275.0,210.2 L274.5,195.1 L274.0,202.1 L273.5,217.4 L273.0,205.4 L272.5,187.0 L272.0,187.9 L271.5,191.0 L271.0,194.4 L270.5,212.2 L270.0,203.2 L269.5,207.5 L269.0,212.3 L268.5,214.7 L268.0,208.4 L267.5,205.3 L267.0,217.9 L266.5,207.0 L266.0,192.3 L265.5,191.1 L265.0,198.5 L264.5,199.0 L264.0,204.8 L263.5,206.7 L263.0,210.8 L262.5,209.1 L262.0,191.4 L261.5,185.4 L261.0,186.7 L260.5,187.3 L260.0,191.1 L259.5,194.4 L259.0,212.9 L258.5,206.4 L258.0,207.8 L257.5,192.4 L257.0,184.2 L256.5,192.4 L256.0,195.7 L255.5,205.0 L255.0,198.0 L254.5,214.5 L254.0,209.3 L253.5,210.7 L253.0,198.9 L252.5,203.1 L252.0,204.3 L251.5,208.6 L251.0,211.7 L250.5,214.0 L250.0,195.0 L249.5,189.9 L249.0,195.0 L248.5,194.0 L248.0,197.0 L247.5,201.8 L247.0,209.3 L246.5,190.2 L246.0,183.6 L245.5,183.4 L245.0,183.3 L244.5,181.8 L244.0,185.4 L243.5,188.8 L243.0,186.0 L242.5,191.9 L242.0,192.6 L241.5,191.7 L241.0,195.8 L240.5,185.7 L240.0,182.3 L239.5,186.9 L239.0,193.7 L238.5,196.3 L238.0,198.0 L237.5,201.7 L237.0,209.8 L236.5,198.5 L236.0,183.2 L235.5,183.3 L235.0,188.8 L234.5,186.7 L234.0,182.2 L233.5,192.9 L233.0,187.1 L232.5,188.5 L232.0,194.5 L231.5,196.1 L231.0,193.5 L230.5,197.8 L230.0,187.2 L229.5,181.6 L229.0,190.1 L228.5,198.9 L228.0,191.7 L227.5,197.7 L227.0,186.4 L226.5,178.6 L226.0,181.0 L225.5,192.2 L225.0,194.2 L224.5,185.3 L224.0,189.9 L223.5,194.5 L223.0,197.7 L222.5,203.5 L222.0,208.1 L221.5,211.5 L221.0,212.6 L220.5,205.2 L220.0,198.9 L219.5,193.4 L219.0,198.5 L218.5,190.7 L218.0,193.2 L217.5,197.9 L217.0,203.7 L216.5,201.2 L216.0,189.3 L215.5,191.4 L215.0,197.3 L214.5,201.7 L214.0,207.7 L213.5,209.2 L213.0,216.4 L212.5,200.8 L212.0,181.2 L211.5,179.6 L211.0,179.9 L210.5,182.0 L210.0,189.6 L209.5,189.6 L209.0,198.5 L208.5,198.0 L208.0,197.7 L207.5,181.5 L207.0,186.3 L206.5,190.4 L206.0,196.9 L205.5,199.3 L205.0,205.5 L204.5,206.5 L204.0,218.6 L203.5,207.1 L203.0,216.6 L202.5,195.8 L202.0,206.4 L201.5,199.8 L201.0,212.7 L200.5,191.7 L200.0,199.6 L199.5,196.4 L199.0,207.7 L198.5,195.9 L198.0,203.7 L197.5,209.8 L197.0,210.6 L196.5,196.3 L196.0,197.5 L195.5,204.6 L195.0,214.6 L194.5,210.1 L194.0,213.2 L193.5,204.3 L193.0,194.7 L192.5,204.6 L192.0,207.0 L191.5,200.0 L191.0,205.3 L190.5,191.8 L190.0,188.8 L189.5,184.3 L189.0,189.2 L188.5,194.2 L188.0,194.2 L187.5,201.4 L187.0,204.4 L186.5,217.4 L186.0,212.0 L185.5,205.7 L185.0,187.2 L184.5,195.7 L184.0,207.7 L183.5,216.2 L183.0,186.9 L182.5,180.6 L182.0,184.4 L181.5,196.0 L181.0,187.7 L180.5,194.8 L180.0,197.6 L179.5,198.4 L179.0,203.9 L178.5,208.9 L178.0,194.6 L177.5,196.5 L177.0,198.0 L176.5,203.0 L176.0,200.4 L175.5,192.2 L175.0,189.8 L174.5,193.9 L174.0,202.1 L173.5,201.9 L173.0,209.1 L172.5,214.0 L172.0,212.8 L171.5,208.0 L171.0,212.1 L170.5,205.6 L170.0,210.9 L169.5,198.8 L169.0,185.1 L168.5,195.2 L168.0,207.2 L167.5,183.8 L167.0,189.2 L166.5,191.8 L166.0,203.0 L165.5,196.9 L165.0,211.3 L164.5,216.4 L164.0,198.5 L163.5,180.3 L163.0,183.2 L162.5,177.7 L162.0,180.1 L161.5,192.5 L161.0,189.9 L160.5,190.1 L160.0,196.6 L159.5,201.4 L159.0,203.7 L158.5,204.1 L158.0,180.7 L157.5,179.1 L157.0,183.4 L156.5,185.9 L156.0,194.6 L155.5,204.7 L155.0,215.4 L154.5,205.5 L154.0,205.2 L153.5,188.7 L153.0,188.0 L152.5,192.2 L152.0,200.7 L151.5,201.9 L151.0,207.9 L150.5,214.6 L150.0,207.9 L149.5,193.6 L149.0,197.6 L148.5,196.6 L148.0,187.5 L147.5,194.5 L147.0,199.4 L146.5,203.3 L146.0,197.3 L145.5,195.0 L145.0,190.5 L144.5,188.9 L144.0,188.1 L143.5,199.1 L143.0,203.0 L142.5,192.8 L142.0,177.1 L141.5,191.0 L141.0,182.8 L140.5,197.5 L140.0,190.5 L139.5,199.6 L139.0,200.1 L138.5,203.4 L138.0,208.8 L137.5,199.1 L137.0,199.0 L136.5,189.0 L136.0,193.4 L135.5,205.3 L135.0,208.4 L134.5,191.2 L134.0,190.0 L133.5,196.8 L133.0,200.9 L132.5,209.9 L132.0,210.2 L131.5,208.3 L131.0,198.4 L130.5,201.8 L130.0,209.1 L129.5,213.7 L129.0,194.9 L128.5,193.8 L128.0,179.4 L127.5,178.4 L127.0,187.5 L126.5,194.6 L126.0,216.0 L125.5,212.4 L125.0,207.4 L124.5,213.5 L124.0,215.7 L123.5,202.1 L123.0,215.0 L122.5,208.6 L122.0,202.2 L121.5,191.4 L121.0,193.9 L120.5,197.6 L120.0,194.8 L119.5,202.2 L119.0,209.6 L118.5,205.1 L118.0,209.9 L117.5,212.4 L117.0,197.3 L116.5,206.2 L116.0,204.7 L115.5,177.6 L115.0,182.9 L114.5,180.4 L114.0,182.0 L113.5,179.4 L113.0,186.0 L112.5,195.0 L112.0,200.8 L111.5,191.3 L111.0,190.3 L110.5,181.6 L110.0,176.7 L109.5,179.4 L109.0,181.3 L108.5,186.6 L108.0,200.0 L107.5,214.6 L107.0,202.5 L106.5,214.2 L106.0,203.7 L105.5,200.4 L105.0,218.6 L104.5,194.2 L104.0,193.1 L103.5,204.3 L103.0,212.3 L102.5,210.3 L102.0,190.8 L101.5,205.4 L101.0,201.9 L100.5,206.7 L100.0,200.5 L99.5,202.1 L99.0,200.1 L98.5,191.0 L98.0,194.3 L97.5,198.7 L97.0,212.0 L96.5,204.4 L96.0,193.0 L95.5,193.2 L95.0,202.2 L94.5,200.2 L94.0,197.7 L93.5,203.8 L93.0,218.6 L92.5,212.5 L92.0,215.3 L91.5,192.7 L91.0,177.5 L90.5,186.5 L90.0,179.8 L89.5,185.7 L89.0,187.3 L88.5,192.4 L88.0,200.8 L87.5,206.1 L87.0,210.0 L86.5,203.8 L86.0,201.0 L85.5,182.6 L85.0,197.3 L84.5,206.0 L84.0,190.4 L83.5,192.0 L83.0,195.7 L82.5,201.3 L82.0,185.5 L81.5,187.5 L81.0,193.3 L80.5,200.5 L80.0,203.6 L79.5,210.1 L79.0,195.3 L78.5,183.8 L78.0,180.2 L77.5,174.7 L77.0,175.4 L76.5,181.2 L76.0,179.3 L75.5,183.0 L75.0,183.8 L74.5,185.9 L74.0,191.1 L73.5,193.5 L73.0,194.9 L72.5,204.1 L72.0,204.5 L71.5,211.7 L71.0,206.9 L70.5,202.1 L70.0,210.1 L69.5,199.6 L69.0,188.4 L68.5,187.2 L68.0,189.5 L67.5,184.6 L67.0,179.2 L66.5,180.4 L66.0,183.5 L65.5,181.9 L65.0,183.2 L64.5,190.3 L64.0,192.0 L63.5,199.3 L63.0,188.1 L62.5,197.3 L62.0,200.7 L61.5,214.9 L61.0,200.9 L60.5,191.8 L60.0,186.3 L59.5,190.5 L59.0,192.0 L58.5,198.4 L58.0,202.3 L57.5,217.1 L57.0,209.9 L56.5,211.4 L56.0,201.9 L55.5,202.7 L55.0,204.4 L54.5,216.9 L54.0,200.9 L53.5,197.9 L53.0,190.7 L52.5,194.5 L52.0,191.8 L51.5,193.5 L51.0,199.5 L50.5,202.1 L50.0,209.5 L49.5,216.0 L49.0,216.1 L48.5,198.1 L48.0,188.2 L47.5,199.7 L47.0,184.9 L46.5,185.6 L46.0,191.6 L45.5,201.2 L45.0,209.9 L44.5,206.1 L44.0,210.3 L43.5,193.1 L43.0,180.5 L42.5,191.5 L42.0,194.3 L41.5,196.7 L41.0,204.3 L40.5,200.7 L40.0,185.9 L39.5,186.4 L39.0,177.2 L38.5,182.8 L38.0,185.8 L37.5,189.8 L37.0,194.4 L36.5,208.7 L36.0,201.2 L35.5,204.0 L35.0,192.4 L34.5,188.7 L34.0,188.8 L33.5,187.3 L33.0,189.4 L32.5,196.5 L32.0,205.9 L31.5,212.6 L31.0,213.0 L30.5,208.6 L30.0,196.5 L29.5,189.4 L29.0,201.8 L28.5,202.3 L28.0,205.5 L27.5,201.1 L27.0,186.2 L26.5,191.9 L26.0,193.3 L25.5,202.2 L25.0,218.6 L24.5,204.6 L24.0,212.5 L23.5,215.4 L23.0,201.3 L22.5,211.9 L22.0,207.8 L21.5,213.6 L21.0,202.5 L20.5,197.1 L20.0,195.2 L19.5,192.3 L19.0,182.5 L18.5,179.9 L18.0,175.1 L17.5,179.5 L17.0,175.0 L16.5,175.1 L16.0,173.2 L15.5,168.7 L15.0,165.3 L14.5,164.6 L14.0,162.9 L13.5,164.0 L13.0,161.2 L12.5,159.7 L12.0,159.1 L11.5,158.3 L11.0,157.4 L10.5,157.2 L10.0,156.7 L9.5,155.8 L9.0,155.6Z" fill="#aaaaaa" clip-path="url(#cr)"/>
  <rect x="27" y="92" width="1" height="127" fill="#34aef0" fill-opacity="0.82"/><rect x="39" y="92" width="1" height="127" fill="#34aef0" fill-opacity="0.82"/><rect x="51" y="92" width="1" height="127" fill="#34aef0" fill-opacity="0.82"/><rect x="64" y="92" width="1" height="127" fill="#34aef0" fill-opacity="0.82"/><rect x="76" y="92" width="1" height="127" fill="#34aef0" fill-opacity="0.82"/><rect x="88" y="92" width="1" height="127" fill="#34aef0" fill-opacity="0.82"/><rect x="101" y="92" width="1" height="127" fill="#34aef0" fill-opacity="0.82"/><rect x="125" y="92" width="1" height="127" fill="#34aef0" fill-opacity="0.82"/><rect x="138" y="92" width="1" height="127" fill="#34aef0" fill-opacity="0.82"/><rect x="162" y="92" width="1" height="127" fill="#34aef0" fill-opacity="0.82"/><rect x="175" y="92" width="1" height="127" fill="#34aef0" fill-opacity="0.82"/><rect x="187" y="92" width="1" height="127" fill="#34aef0" fill-opacity="0.82"/><rect x="212" y="92" width="1" height="127" fill="#34aef0" fill-opacity="0.82"/><rect x="237" y="92" width="1" height="127" fill="#34aef0" fill-opacity="0.82"/><rect x="250" y="92" width="1" height="127" fill="#34aef0" fill-opacity="0.82"/><rect x="274" y="92" width="1" height="127" fill="#34aef0" fill-opacity="0.82"/><rect x="286" y="92" width="1" height="127" fill="#34aef0" fill-opacity="0.82"/><rect x="310" y="92" width="1" height="127" fill="#34aef0" fill-opacity="0.82"/><rect x="323" y="92" width="1" height="127" fill="#34aef0" fill-opacity="0.82"/><rect x="347" y="92" width="1" height="127" fill="#34aef0" fill-opacity="0.82"/><rect x="360" y="92" width="1" height="127" fill="#34aef0" fill-opacity="0.82"/><rect x="385" y="92" width="1" height="127" fill="#34aef0" fill-opacity="0.82"/><rect x="398" y="92" width="1" height="127" fill="#34aef0" fill-opacity="0.82"/><rect x="422" y="92" width="1" height="127" fill="#34aef0" fill-opacity="0.82"/><rect x="434" y="92" width="1" height="127" fill="#34aef0" fill-opacity="0.82"/><rect x="446" y="92" width="1" height="127" fill="#34aef0" fill-opacity="0.82"/><rect x="458" y="92" width="1" height="127" fill="#34aef0" fill-opacity="0.82"/><rect x="471" y="92" width="1" height="127" fill="#34aef0" fill-opacity="0.82"/><rect x="496" y="92" width="1" height="127" fill="#34aef0" fill-opacity="0.82"/><rect x="509" y="92" width="1" height="127" fill="#34aef0" fill-opacity="0.82"/><rect x="533" y="92" width="1" height="127" fill="#34aef0" fill-opacity="0.82"/><rect x="546" y="92" width="1" height="127" fill="#34aef0" fill-opacity="0.82"/><rect x="570" y="92" width="1" height="127" fill="#34aef0" fill-opacity="0.82"/><rect x="582" y="92" width="1" height="127" fill="#34aef0" fill-opacity="0.82"/><rect x="607" y="92" width="1" height="127" fill="#34aef0" fill-opacity="0.82"/><rect x="619" y="92" width="1" height="127" fill="#34aef0" fill-opacity="0.82"/><rect x="644" y="92" width="1" height="127" fill="#34aef0" fill-opacity="0.82"/><rect x="653" y="92" width="1" height="127" fill="#34aef0" fill-opacity="0.45"/>
  <rect x="199" y="92" width="1" height="127" fill="#ea9c10"/>
  <!-- ruler -->
  <rect x="9" y="76" width="2" height="13" fill="#2b90cc"/>
  <rect x="112" y="76" width="1.5" height="11" fill="#777"/>
  <rect x="215" y="76" width="1.5" height="13" fill="#888"/>
  <rect x="318" y="76" width="1.5" height="11" fill="#777"/>
  <rect x="421" y="76" width="1.5" height="13" fill="#888"/>
  <rect x="524" y="76" width="1.5" height="11" fill="#777"/>
  <rect x="626" y="76" width="2" height="13" fill="#2b90cc"/>
  <!-- minimap -->
  <rect x="9" y="252" width="648" height="36" fill="#303030"/>
  <path d="M11.0,235.5 L11.5,234.7 L12.0,234.1 L12.5,233.0 L13.0,231.8 L13.5,231.4 L14.0,230.6 L14.5,229.5 L15.0,228.5 L15.5,228.6 L16.0,227.9 L16.5,225.7 L17.0,225.7 L17.5,226.0 L18.0,225.9 L18.5,225.7 L19.0,226.4 L19.5,225.3 L20.0,221.9 L20.5,223.8 L21.0,225.2 L21.5,222.2 L22.0,224.0 L22.5,222.3 L23.0,223.4 L23.5,224.6 L24.0,223.0 L24.5,221.5 L25.0,222.3 L25.5,223.2 L26.0,225.5 L26.5,225.5 L27.0,224.8 L27.5,222.8 L28.0,225.6 L28.5,226.3 L29.0,227.5 L29.5,223.9 L30.0,225.3 L30.5,224.9 L31.0,224.6 L31.5,223.7 L32.0,224.2 L32.5,224.0 L33.0,225.2 L33.5,224.3 L34.0,223.2 L34.5,221.0 L35.0,223.4 L35.5,225.8 L36.0,224.4 L36.5,223.2 L37.0,222.8 L37.5,223.2 L38.0,224.8 L38.5,225.5 L39.0,226.5 L39.5,222.7 L40.0,222.5 L40.5,223.4 L41.0,221.4 L41.5,222.0 L42.0,221.2 L42.5,223.9 L43.0,225.0 L43.5,224.8 L44.0,225.5 L44.5,226.4 L45.0,225.8 L45.5,224.1 L46.0,221.7 L46.5,222.8 L47.0,222.9 L47.5,223.7 L48.0,224.9 L48.5,223.7 L49.0,223.3 L49.5,222.1 L50.0,222.7 L50.5,223.5 L51.0,223.9 L51.5,225.5 L52.0,222.3 L52.5,224.8 L53.0,225.1 L53.5,224.6 L54.0,222.8 L54.5,222.5 L55.0,223.3 L55.5,225.0 L56.0,224.9 L56.5,225.9 L57.0,223.0 L57.5,222.7 L58.0,223.6 L58.5,222.5 L59.0,221.4 L59.5,222.9 L60.0,224.2 L60.5,223.2 L61.0,221.0 L61.5,224.5 L62.0,225.8 L62.5,225.6 L63.0,226.2 L63.5,226.7 L64.0,223.4 L64.5,223.4 L65.0,224.7 L65.5,224.3 L66.0,225.7 L66.5,224.7 L67.0,223.6 L67.5,221.0 L68.0,223.0 L68.5,224.4 L69.0,225.8 L69.5,227.2 L70.0,226.9 L70.5,225.0 L71.0,222.9 L71.5,222.0 L72.0,221.0 L72.5,223.7 L73.0,224.3 L73.5,223.8 L74.0,226.8 L74.5,224.7 L75.0,222.1 L75.5,222.4 L76.0,222.5 L76.5,224.0 L77.0,224.2 L77.5,221.2 L78.0,223.9 L78.5,224.8 L79.0,225.4 L79.5,222.7 L80.0,221.8 L80.5,221.8 L81.0,224.4 L81.5,221.0 L82.0,224.0 L82.5,227.1 L83.0,225.0 L83.5,222.9 L84.0,224.4 L84.5,224.4 L85.0,223.3 L85.5,223.4 L86.0,223.5 L86.5,225.3 L87.0,225.7 L87.5,223.6 L88.0,224.7 L88.5,226.5 L89.0,227.4 L89.5,227.4 L90.0,226.5 L90.5,224.7 L91.0,223.0 L91.5,223.9 L92.0,224.7 L92.5,223.9 L93.0,222.6 L93.5,224.3 L94.0,222.3 L94.5,222.1 L95.0,223.2 L95.5,224.6 L96.0,222.5 L96.5,222.0 L97.0,223.5 L97.5,225.2 L98.0,226.3 L98.5,226.5 L99.0,223.5 L99.5,221.8 L100.0,222.3 L100.5,222.7 L101.0,223.6 L101.5,224.9 L102.0,223.9 L102.5,225.6 L103.0,225.5 L103.5,225.8 L104.0,225.5 L104.5,225.1 L105.0,226.0 L105.5,223.8 L106.0,222.7 L106.5,224.0 L107.0,225.3 L107.5,225.7 L108.0,223.5 L108.5,222.3 L109.0,221.3 L109.5,224.6 L110.0,223.4 L110.5,225.8 L111.0,227.1 L111.5,223.5 L112.0,223.1 L112.5,222.5 L113.0,223.8 L113.5,225.1 L114.0,223.7 L114.5,221.7 L115.0,222.8 L115.5,224.6 L116.0,222.7 L116.5,224.0 L117.0,225.5 L117.5,221.5 L118.0,222.6 L118.5,224.0 L119.0,223.2 L119.5,222.6 L120.0,223.0 L120.5,223.2 L121.0,223.3 L121.5,224.5 L122.0,225.9 L122.5,224.3 L123.0,222.2 L123.5,224.3 L124.0,223.5 L124.5,222.2 L125.0,222.8 L125.5,225.7 L126.0,227.3 L126.5,225.2 L127.0,221.9 L127.5,224.1 L128.0,225.5 L128.5,226.2 L129.0,225.7 L129.5,225.0 L130.0,224.6 L130.5,223.1 L131.0,221.5 L131.5,224.1 L132.0,225.9 L132.5,223.3 L133.0,223.1 L133.5,224.6 L134.0,225.6 L134.5,227.3 L135.0,227.6 L135.5,226.3 L136.0,225.7 L136.5,223.6 L137.0,224.7 L137.5,224.2 L138.0,221.1 L138.5,223.9 L139.0,222.2 L139.5,222.2 L140.0,224.9 L140.5,222.9 L141.0,223.3 L141.5,222.7 L142.0,221.9 L142.5,224.1 L143.0,223.3 L143.5,222.9 L144.0,223.2 L144.5,224.2 L145.0,225.3 L145.5,226.3 L146.0,224.7 L146.5,221.8 L147.0,223.8 L147.5,225.8 L148.0,227.1 L148.5,227.4 L149.0,226.7 L149.5,225.9 L150.0,224.0 L150.5,225.5 L151.0,223.5 L151.5,223.5 L152.0,223.8 L152.5,222.2 L153.0,223.8 L153.5,224.2 L154.0,224.0 L154.5,222.0 L155.0,221.1 L155.5,221.9 L156.0,223.4 L156.5,221.7 L157.0,222.9 L157.5,224.3 L158.0,224.9 L158.5,224.6 L159.0,224.5 L159.5,223.2 L160.0,223.4 L160.5,223.5 L161.0,221.1 L161.5,222.4 L162.0,225.1 L162.5,222.3 L163.0,222.5 L163.5,223.7 L164.0,224.4 L164.5,225.8 L165.0,224.9 L165.5,222.6 L166.0,221.8 L166.5,222.0 L167.0,224.5 L167.5,222.3 L168.0,222.3 L168.5,222.3 L169.0,223.4 L169.5,224.5 L170.0,225.1 L170.5,222.3 L171.0,221.9 L171.5,223.8 L172.0,222.5 L172.5,223.8 L173.0,223.2 L173.5,225.5 L174.0,223.8 L174.5,223.0 L175.0,223.6 L175.5,224.0 L176.0,223.1 L176.5,224.4 L177.0,224.5 L177.5,225.6 L178.0,226.7 L178.5,226.7 L179.0,227.1 L179.5,226.4 L180.0,226.2 L180.5,225.3 L181.0,225.6 L181.5,225.6 L182.0,221.8 L182.5,223.1 L183.0,224.2 L183.5,225.2 L184.0,226.7 L184.5,227.0 L185.0,224.1 L185.5,223.7 L186.0,223.3 L186.5,224.9 L187.0,225.8 L187.5,225.6 L188.0,224.5 L188.5,225.8 L189.0,226.4 L189.5,225.3 L190.0,222.0 L190.5,223.6 L191.0,225.0 L191.5,226.3 L192.0,225.4 L192.5,225.5 L193.0,224.9 L193.5,225.5 L194.0,224.6 L194.5,221.7 L195.0,224.1 L195.5,224.9 L196.0,224.1 L196.5,226.0 L197.0,226.0 L197.5,226.1 L198.0,227.6 L198.5,227.5 L199.0,227.1 L199.5,226.6 L200.0,227.5 L200.5,227.0 L201.0,225.4 L201.5,225.1 L202.0,224.0 L202.5,222.6 L203.0,222.9 L203.5,221.6 L204.0,222.0 L204.5,223.6 L205.0,224.6 L205.5,225.9 L206.0,226.7 L206.5,223.1 L207.0,222.3 L207.5,224.2 L208.0,223.4 L208.5,226.0 L209.0,226.5 L209.5,226.6 L210.0,225.8 L210.5,223.4 L211.0,224.6 L211.5,223.9 L212.0,221.0 L212.5,222.2 L213.0,224.3 L213.5,224.8 L214.0,226.5 L214.5,225.8 L215.0,222.7 L215.5,223.6 L216.0,224.0 L216.5,223.5 L217.0,224.1 L217.5,221.5 L218.0,222.3 L218.5,223.9 L219.0,225.3 L219.5,225.2 L220.0,225.8 L220.5,225.4 L221.0,225.5 L221.5,226.0 L222.0,224.8 L222.5,222.7 L223.0,222.9 L223.5,223.3 L224.0,222.4 L224.5,223.4 L225.0,224.9 L225.5,225.8 L226.0,227.2 L226.5,227.5 L227.0,227.1 L227.5,225.4 L228.0,222.3 L228.5,222.5 L229.0,223.5 L229.5,225.5 L230.0,222.8 L230.5,224.2 L231.0,224.9 L231.5,226.1 L232.0,225.7 L232.5,225.5 L233.0,226.3 L233.5,223.0 L234.0,223.5 L234.5,224.1 L235.0,222.4 L235.5,221.8 L236.0,225.3 L236.5,223.0 L237.0,221.3 L237.5,222.3 L238.0,222.3 L238.5,224.4 L239.0,225.6 L239.5,226.1 L240.0,223.2 L240.5,224.2 L241.0,224.7 L241.5,226.4 L242.0,222.6 L242.5,222.5 L243.0,222.1 L243.5,222.4 L244.0,223.6 L244.5,222.8 L245.0,224.0 L245.5,226.2 L246.0,223.7 L246.5,224.5 L247.0,224.4 L247.5,224.8 L248.0,226.3 L248.5,225.9 L249.0,224.1 L249.5,222.2 L250.0,222.9 L250.5,222.7 L251.0,224.0 L251.5,224.8 L252.0,222.6 L252.5,225.3 L253.0,225.4 L253.5,223.6 L254.0,224.7 L254.5,224.8 L255.0,225.7 L255.5,224.3 L256.0,224.5 L256.5,224.4 L257.0,224.1 L257.5,226.5 L258.0,225.9 L258.5,225.8 L259.0,225.5 L259.5,225.0 L260.0,223.6 L260.5,224.3 L261.0,224.5 L261.5,225.4 L262.0,226.3 L262.5,227.0 L263.0,225.0 L263.5,221.0 L264.0,223.7 L264.5,224.3 L265.0,223.5 L265.5,221.0 L266.0,222.0 L266.5,222.6 L267.0,224.3 L267.5,224.2 L268.0,224.0 L268.5,223.4 L269.0,223.5 L269.5,224.9 L270.0,223.4 L270.5,223.3 L271.0,223.5 L271.5,224.7 L272.0,225.0 L272.5,226.6 L273.0,224.8 L273.5,223.2 L274.0,221.7 L274.5,222.0 L275.0,223.4 L275.5,225.0 L276.0,224.3 L276.5,223.3 L277.0,223.0 L277.5,222.4 L278.0,223.0 L278.5,224.6 L279.0,221.0 L279.5,222.2 L280.0,225.8 L280.5,226.1 L281.0,226.8 L281.5,224.2 L282.0,224.8 L282.5,222.0 L283.0,222.9 L283.5,224.2 L284.0,222.2 L284.5,223.9 L285.0,222.6 L285.5,223.5 L286.0,221.0 L286.5,223.0 L287.0,223.5 L287.5,221.5 L288.0,222.2 L288.5,223.3 L289.0,221.4 L289.5,222.7 L290.0,226.0 L290.5,226.2 L291.0,227.6 L291.5,226.8 L292.0,223.9 L292.5,221.8 L293.0,223.4 L293.5,221.7 L294.0,223.4 L294.5,224.4 L295.0,226.2 L295.5,225.6 L296.0,224.9 L296.5,224.4 L297.0,223.5 L297.5,224.9 L298.0,226.3 L298.5,226.0 L299.0,224.7 L299.5,223.0 L300.0,221.9 L300.5,224.2 L301.0,223.7 L301.5,222.5 L302.0,223.0 L302.5,223.0 L303.0,222.1 L303.5,223.4 L304.0,223.9 L304.5,223.9 L305.0,222.8 L305.5,222.2 L306.0,224.9 L306.5,225.4 L307.0,223.5 L307.5,221.2 L308.0,221.3 L308.5,222.6 L309.0,222.4 L309.5,222.4 L310.0,222.1 L310.5,223.8 L311.0,223.5 L311.5,221.1 L312.0,224.8 L312.5,225.9 L313.0,225.7 L313.5,225.4 L314.0,224.4 L314.5,225.1 L315.0,226.6 L315.5,226.0 L316.0,226.9 L316.5,227.6 L317.0,227.1 L317.5,226.5 L318.0,227.1 L318.5,226.8 L319.0,224.3 L319.5,223.0 L320.0,223.6 L320.5,225.2 L321.0,225.4 L321.5,224.6 L322.0,225.2 L322.5,226.2 L323.0,226.2 L323.5,226.5 L324.0,226.6 L324.5,225.5 L325.0,227.7 L325.5,226.7 L326.0,226.9 L326.5,224.0 L327.0,223.6 L327.5,223.3 L328.0,224.9 L328.5,223.7 L329.0,221.6 L329.5,222.9 L330.0,223.0 L330.5,223.6 L331.0,223.5 L331.5,226.2 L332.0,222.8 L332.5,221.0 L333.0,223.4 L333.5,221.4 L334.0,221.9 L334.5,222.7 L335.0,225.5 L335.5,226.3 L336.0,225.9 L336.5,224.8 L337.0,224.8 L337.5,225.9 L338.0,223.8 L338.5,223.0 L339.0,222.6 L339.5,221.9 L340.0,222.8 L340.5,223.3 L341.0,223.5 L341.5,224.7 L342.0,223.3 L342.5,223.7 L343.0,225.5 L343.5,226.9 L344.0,227.0 L344.5,226.3 L345.0,224.2 L345.5,223.4 L346.0,224.4 L346.5,222.5 L347.0,223.1 L347.5,225.0 L348.0,225.1 L348.5,224.2 L349.0,222.1 L349.5,223.1 L350.0,225.5 L350.5,227.3 L351.0,226.9 L351.5,227.0 L352.0,226.8 L352.5,225.2 L353.0,224.2 L353.5,222.5 L354.0,225.5 L354.5,226.7 L355.0,225.0 L355.5,222.9 L356.0,222.2 L356.5,223.8 L357.0,223.0 L357.5,222.4 L358.0,222.4 L358.5,224.1 L359.0,222.5 L359.5,225.2 L360.0,225.0 L360.5,223.9 L361.0,222.0 L361.5,225.4 L362.0,227.6 L362.5,225.0 L363.0,224.2 L363.5,223.0 L364.0,226.5 L364.5,226.8 L365.0,226.9 L365.5,226.6 L366.0,227.7 L366.5,226.6 L367.0,225.0 L367.5,223.2 L368.0,225.2 L368.5,227.2 L369.0,227.2 L369.5,226.6 L370.0,222.7 L370.5,221.3 L371.0,222.6 L371.5,223.6 L372.0,222.9 L372.5,223.3 L373.0,223.9 L373.5,223.4 L374.0,222.9 L374.5,224.5 L375.0,222.1 L375.5,224.7 L376.0,225.1 L376.5,224.8 L377.0,223.3 L377.5,225.7 L378.0,224.5 L378.5,221.6 L379.0,222.1 L379.5,223.8 L380.0,225.0 L380.5,227.1 L381.0,227.6 L381.5,227.1 L382.0,227.2 L382.5,226.9 L383.0,225.8 L383.5,226.0 L384.0,226.3 L384.5,224.2 L385.0,224.0 L385.5,222.9 L386.0,225.2 L386.5,224.7 L387.0,225.0 L387.5,225.5 L388.0,222.6 L388.5,223.6 L389.0,224.9 L389.5,226.3 L390.0,226.5 L390.5,225.0 L391.0,224.1 L391.5,225.2 L392.0,223.1 L392.5,224.2 L393.0,224.2 L393.5,223.1 L394.0,221.0 L394.5,222.0 L395.0,221.0 L395.5,224.6 L396.0,226.0 L396.5,224.7 L397.0,225.1 L397.5,225.3 L398.0,223.8 L398.5,224.2 L399.0,225.3 L399.5,226.9 L400.0,227.4 L400.5,227.6 L401.0,227.6 L401.5,225.6 L402.0,222.2 L402.5,225.2 L403.0,222.8 L403.5,221.0 L404.0,222.2 L404.5,222.2 L405.0,222.2 L405.5,222.2 L406.0,222.9 L406.5,221.0 L407.0,223.0 L407.5,223.5 L408.0,225.6 L408.5,226.3 L409.0,225.3 L409.5,223.3 L410.0,222.0 L410.5,223.5 L411.0,224.1 L411.5,224.4 L412.0,225.6 L412.5,225.8 L413.0,225.1 L413.5,225.2 L414.0,221.5 L414.5,223.6 L415.0,222.3 L415.5,224.7 L416.0,225.3 L416.5,225.7 L417.0,222.2 L417.5,222.5 L418.0,224.0 L418.5,224.3 L419.0,224.6 L419.5,226.0 L420.0,226.2 L420.5,221.3 L421.0,223.0 L421.5,225.3 L422.0,225.5 L422.5,223.6 L423.0,224.3 L423.5,225.5 L424.0,226.4 L424.5,227.6 L425.0,227.1 L425.5,227.5 L426.0,226.4 L426.5,226.9 L427.0,226.6 L427.5,227.5 L428.0,223.3 L428.5,222.7 L429.0,222.0 L429.5,223.3 L430.0,225.3 L430.5,226.0 L431.0,225.1 L431.5,225.1 L432.0,225.2 L432.5,225.5 L433.0,225.9 L433.5,225.5 L434.0,225.3 L434.5,224.3 L435.0,225.5 L435.5,222.0 L436.0,221.0 L436.5,221.7 L437.0,224.7 L437.5,225.5 L438.0,226.8 L438.5,226.5 L439.0,226.8 L439.5,226.8 L440.0,224.5 L440.5,221.0 L441.0,222.3 L441.5,223.5 L442.0,221.0 L442.5,223.3 L443.0,224.2 L443.5,225.6 L444.0,226.6 L444.5,226.9 L445.0,227.5 L445.5,223.3 L446.0,222.9 L446.5,225.6 L447.0,226.7 L447.5,226.3 L448.0,227.1 L448.5,227.3 L449.0,225.5 L449.5,221.8 L450.0,223.2 L450.5,225.4 L451.0,225.2 L451.5,224.7 L452.0,223.3 L452.5,225.3 L453.0,226.6 L453.5,227.3 L454.0,225.7 L454.5,222.6 L455.0,222.2 L455.5,224.3 L456.0,224.9 L456.5,224.7 L457.0,222.1 L457.5,223.1 L458.0,224.9 L458.5,221.0 L459.0,223.0 L459.5,224.4 L460.0,223.1 L460.5,223.5 L461.0,224.5 L461.5,224.8 L462.0,224.9 L462.5,224.6 L463.0,221.5 L463.5,223.3 L464.0,223.9 L464.5,224.8 L465.0,224.5 L465.5,223.2 L466.0,224.4 L466.5,222.3 L467.0,222.7 L467.5,224.3 L468.0,221.0 L468.5,223.4 L469.0,224.3 L469.5,225.1 L470.0,225.4 L470.5,223.4 L471.0,222.0 L471.5,222.0 L472.0,224.0 L472.5,224.4 L473.0,224.6 L473.5,225.9 L474.0,226.5 L474.5,226.8 L475.0,222.0 L475.5,223.6 L476.0,222.2 L476.5,222.5 L477.0,223.1 L477.5,221.9 L478.0,224.9 L478.5,225.4 L479.0,224.8 L479.5,222.7 L480.0,224.7 L480.5,224.4 L481.0,225.0 L481.5,223.2 L482.0,222.1 L482.5,223.1 L483.0,224.6 L483.5,225.1 L484.0,226.9 L484.5,227.5 L485.0,225.9 L485.5,223.0 L486.0,224.3 L486.5,225.0 L487.0,225.1 L487.5,222.8 L488.0,222.3 L488.5,223.6 L489.0,224.4 L489.5,221.8 L490.0,222.6 L490.5,222.9 L491.0,224.4 L491.5,223.2 L492.0,224.6 L492.5,225.0 L493.0,223.2 L493.5,222.1 L494.0,223.5 L494.5,223.9 L495.0,221.9 L495.5,223.3 L496.0,221.6 L496.5,225.3 L497.0,225.1 L497.5,221.0 L498.0,222.7 L498.5,224.9 L499.0,221.6 L499.5,223.0 L500.0,223.5 L500.5,225.4 L501.0,225.1 L501.5,223.9 L502.0,224.6 L502.5,227.1 L503.0,226.2 L503.5,222.8 L504.0,223.9 L504.5,222.4 L505.0,223.7 L505.5,224.7 L506.0,224.2 L506.5,225.1 L507.0,225.6 L507.5,226.0 L508.0,227.3 L508.5,226.5 L509.0,226.3 L509.5,226.1 L510.0,226.3 L510.5,226.9 L511.0,226.4 L511.5,224.8 L512.0,221.3 L512.5,222.5 L513.0,223.1 L513.5,221.6 L514.0,223.4 L514.5,222.6 L515.0,224.5 L515.5,221.4 L516.0,221.8 L516.5,222.9 L517.0,223.7 L517.5,223.5 L518.0,222.5 L518.5,222.9 L519.0,224.1 L519.5,224.9 L520.0,226.3 L520.5,223.8 L521.0,222.9 L521.5,223.8 L522.0,224.4 L522.5,223.7 L523.0,222.7 L523.5,226.0 L524.0,227.3 L524.5,226.8 L525.0,227.6 L525.5,227.2 L526.0,227.6 L526.5,225.6 L527.0,226.9 L527.5,226.0 L528.0,225.2 L528.5,226.3 L529.0,226.3 L529.5,225.2 L530.0,223.2 L530.5,223.9 L531.0,222.8 L531.5,225.8 L532.0,226.7 L532.5,224.5 L533.0,223.1 L533.5,223.5 L534.0,225.4 L534.5,223.8 L535.0,223.6 L535.5,221.9 L536.0,223.3 L536.5,225.2 L537.0,226.3 L537.5,224.2 L538.0,222.0 L538.5,222.0 L539.0,223.7 L539.5,225.3 L540.0,225.5 L540.5,227.3 L541.0,227.6 L541.5,226.8 L542.0,226.7 L542.5,225.3 L543.0,222.4 L543.5,223.2 L544.0,224.1 L544.5,222.2 L545.0,224.8 L545.5,223.0 L546.0,225.1 L546.5,224.4 L547.0,222.7 L547.5,221.0 L548.0,225.4 L548.5,227.1 L549.0,227.6 L549.5,226.0 L550.0,222.8 L550.5,225.2 L551.0,226.1 L551.5,223.7 L552.0,224.4 L552.5,226.1 L553.0,222.6 L553.5,223.3 L554.0,222.7 L554.5,223.5 L555.0,224.0 L555.5,223.1 L556.0,223.3 L556.5,223.9 L557.0,223.9 L557.5,224.7 L558.0,224.7 L558.5,225.8 L559.0,225.8 L559.5,226.7 L560.0,226.1 L560.5,223.2 L561.0,222.0 L561.5,223.0 L562.0,221.7 L562.5,223.1 L563.0,222.0 L563.5,222.9 L564.0,223.4 L564.5,224.0 L565.0,224.2 L565.5,225.1 L566.0,222.9 L566.5,222.2 L567.0,224.8 L567.5,226.6 L568.0,227.1 L568.5,227.2 L569.0,226.6 L569.5,222.6 L570.0,222.4 L570.5,223.9 L571.0,222.9 L571.5,225.5 L572.0,226.0 L572.5,225.4 L573.0,223.8 L573.5,222.6 L574.0,224.0 L574.5,221.3 L575.0,223.0 L575.5,225.9 L576.0,223.7 L576.5,222.7 L577.0,224.3 L577.5,223.3 L578.0,225.9 L578.5,225.1 L579.0,225.7 L579.5,225.6 L580.0,223.6 L580.5,223.9 L581.0,224.0 L581.5,225.0 L582.0,222.4 L582.5,224.9 L583.0,225.2 L583.5,225.1 L584.0,225.4 L584.5,223.8 L585.0,225.6 L585.5,222.3 L586.0,222.0 L586.5,223.5 L587.0,226.2 L587.5,226.0 L588.0,225.5 L588.5,221.8 L589.0,224.7 L589.5,223.4 L590.0,225.7 L590.5,224.1 L591.0,225.9 L591.5,225.9 L592.0,225.8 L592.5,225.6 L593.0,226.4 L593.5,226.3 L594.0,226.9 L594.5,227.4 L595.0,226.5 L595.5,226.6 L596.0,226.5 L596.5,226.9 L597.0,224.4 L597.5,223.8 L598.0,223.0 L598.5,225.8 L599.0,223.6 L599.5,222.8 L600.0,224.4 L600.5,225.4 L601.0,226.5 L601.5,226.3 L602.0,226.3 L602.5,223.8 L603.0,223.3 L603.5,225.4 L604.0,224.0 L604.5,225.7 L605.0,223.8 L605.5,221.3 L606.0,224.0 L606.5,225.2 L607.0,222.8 L607.5,223.1 L608.0,224.7 L608.5,224.8 L609.0,226.1 L609.5,226.1 L610.0,224.3 L610.5,223.6 L611.0,223.6 L611.5,224.4 L612.0,223.8 L612.5,224.5 L613.0,223.1 L613.5,221.2 L614.0,222.0 L614.5,224.0 L615.0,223.2 L615.5,221.7 L616.0,224.2 L616.5,225.6 L617.0,225.9 L617.5,225.6 L618.0,224.0 L618.5,222.5 L619.0,223.6 L619.5,224.9 L620.0,224.6 L620.5,224.3 L621.0,224.8 L621.5,225.1 L622.0,225.0 L622.5,226.2 L623.0,225.8 L623.5,226.8 L624.0,228.4 L624.5,229.0 L625.0,228.7 L625.5,228.6 L626.0,228.6 L626.5,228.6 L627.0,228.6 L627.5,228.3 L628.0,229.2 L628.5,229.4 L629.0,230.0 L629.5,230.4 L630.0,230.5 L630.5,229.5 L631.0,229.6 L631.5,230.6 L632.0,231.2 L632.5,232.0 L633.0,232.2 L633.5,232.2 L634.0,232.2 L634.5,231.7 L635.0,232.1 L635.5,231.9 L636.0,231.6 L636.5,231.6 L637.0,231.9 L637.5,232.8 L638.0,233.1 L638.5,232.8 L639.0,232.5 L639.5,232.6 L640.0,232.9 L640.5,233.0 L641.0,233.4 L641.5,233.8 L642.0,234.0 L642.5,234.0 L643.0,234.0 L643.5,234.0 L644.0,233.7 L644.5,234.0 L645.0,234.0 L645.5,234.0 L646.0,233.9 L646.5,234.0 L647.0,234.0 L647.5,234.3 L648.0,234.1 L648.5,234.4 L649.0,234.7 L649.5,234.8 L650.0,234.6 L650.5,234.9 L651.0,234.6 L651.5,234.7 L652.0,234.9 L652.5,235.1 L653.0,235.2 L653.5,235.3 L654.0,235.1 L654.5,235.0 L655.0,235.0 L655.0,235.9 L654.5,235.7 L654.0,235.7 L653.5,235.9 L653.0,235.9 L652.5,236.1 L652.0,236.0 L651.5,236.1 L651.0,236.1 L650.5,236.1 L650.0,236.4 L649.5,236.8 L649.0,236.6 L648.5,236.4 L648.0,236.8 L647.5,236.7 L647.0,236.9 L646.5,237.0 L646.0,236.4 L645.5,236.5 L645.0,236.5 L644.5,236.6 L644.0,236.6 L643.5,236.8 L643.0,236.8 L642.5,237.2 L642.0,237.7 L641.5,238.2 L641.0,237.8 L640.5,237.6 L640.0,237.7 L639.5,238.1 L639.0,238.7 L638.5,239.1 L638.0,238.9 L637.5,238.4 L637.0,238.6 L636.5,238.9 L636.0,239.2 L635.5,239.8 L635.0,239.3 L634.5,239.8 L634.0,240.3 L633.5,239.8 L633.0,239.8 L632.5,240.6 L632.0,241.3 L631.5,240.3 L631.0,241.8 L630.5,240.9 L630.0,240.8 L629.5,241.7 L629.0,242.7 L628.5,240.9 L628.0,242.2 L627.5,242.1 L627.0,241.0 L626.5,241.8 L626.0,242.0 L625.5,242.7 L625.0,242.7 L624.5,243.8 L624.0,245.2 L623.5,245.2 L623.0,244.6 L622.5,245.4 L622.0,245.6 L621.5,243.9 L621.0,244.6 L620.5,245.7 L620.0,244.3 L619.5,246.7 L619.0,248.7 L618.5,248.1 L618.0,247.3 L617.5,246.0 L617.0,247.0 L616.5,247.8 L616.0,244.3 L615.5,244.1 L615.0,244.2 L614.5,245.8 L614.0,246.3 L613.5,248.1 L613.0,249.1 L612.5,247.2 L612.0,247.4 L611.5,246.0 L611.0,246.7 L610.5,246.6 L610.0,244.8 L609.5,246.9 L609.0,248.7 L608.5,248.1 L608.0,248.7 L607.5,248.8 L607.0,247.4 L606.5,245.6 L606.0,243.5 L605.5,244.3 L605.0,243.9 L604.5,244.5 L604.0,243.5 L603.5,244.3 L603.0,244.0 L602.5,244.9 L602.0,247.5 L601.5,245.2 L601.0,245.2 L600.5,244.9 L600.0,244.5 L599.5,245.5 L599.0,246.2 L598.5,245.5 L598.0,245.2 L597.5,246.3 L597.0,247.0 L596.5,246.2 L596.0,247.3 L595.5,246.1 L595.0,245.9 L594.5,247.1 L594.0,248.8 L593.5,246.6 L593.0,248.2 L592.5,249.0 L592.0,247.5 L591.5,248.2 L591.0,245.8 L590.5,245.9 L590.0,246.6 L589.5,244.9 L589.0,247.4 L588.5,248.4 L588.0,246.9 L587.5,248.6 L587.0,249.4 L586.5,247.2 L586.0,246.0 L585.5,246.7 L585.0,247.8 L584.5,247.0 L584.0,246.8 L583.5,244.3 L583.0,243.7 L582.5,244.0 L582.0,244.2 L581.5,243.4 L581.0,243.5 L580.5,244.6 L580.0,243.3 L579.5,244.5 L579.0,243.8 L578.5,244.9 L578.0,246.1 L577.5,248.4 L577.0,249.6 L576.5,247.4 L576.0,244.2 L575.5,244.7 L575.0,244.8 L574.5,244.9 L574.0,245.2 L573.5,244.4 L573.0,245.3 L572.5,246.0 L572.0,246.6 L571.5,246.7 L571.0,247.2 L570.5,246.5 L570.0,247.3 L569.5,247.2 L569.0,248.3 L568.5,248.7 L568.0,247.8 L567.5,246.5 L567.0,247.4 L566.5,248.0 L566.0,248.9 L565.5,249.1 L565.0,247.0 L564.5,246.1 L564.0,245.3 L563.5,244.8 L563.0,244.9 L562.5,245.3 L562.0,246.1 L561.5,249.5 L561.0,247.0 L560.5,245.2 L560.0,244.7 L559.5,245.8 L559.0,244.9 L558.5,245.0 L558.0,247.8 L557.5,246.8 L557.0,247.5 L556.5,248.2 L556.0,249.2 L555.5,250.0 L555.0,248.9 L554.5,246.4 L554.0,246.5 L553.5,247.1 L553.0,247.1 L552.5,245.4 L552.0,247.5 L551.5,246.8 L551.0,245.8 L550.5,244.8 L550.0,246.1 L549.5,246.9 L549.0,247.8 L548.5,247.3 L548.0,246.7 L547.5,245.1 L547.0,244.0 L546.5,244.5 L546.0,246.4 L545.5,246.7 L545.0,248.4 L544.5,246.1 L544.0,245.7 L543.5,245.5 L543.0,246.6 L542.5,246.5 L542.0,248.0 L541.5,246.2 L541.0,245.9 L540.5,247.3 L540.0,247.1 L539.5,246.6 L539.0,248.6 L538.5,249.3 L538.0,248.9 L537.5,250.0 L537.0,250.0 L536.5,249.4 L536.0,245.0 L535.5,243.8 L535.0,244.4 L534.5,244.7 L534.0,247.7 L533.5,246.3 L533.0,246.3 L532.5,246.5 L532.0,247.2 L531.5,247.8 L531.0,249.2 L530.5,247.2 L530.0,245.6 L529.5,246.1 L529.0,248.3 L528.5,249.3 L528.0,247.0 L527.5,248.5 L527.0,248.8 L526.5,247.7 L526.0,248.9 L525.5,245.1 L525.0,244.2 L524.5,244.8 L524.0,245.3 L523.5,247.4 L523.0,247.8 L522.5,247.6 L522.0,248.3 L521.5,248.5 L521.0,246.0 L520.5,245.5 L520.0,246.3 L519.5,244.7 L519.0,245.3 L518.5,247.4 L518.0,246.4 L517.5,246.5 L517.0,246.8 L516.5,244.4 L516.0,244.5 L515.5,243.8 L515.0,244.3 L514.5,244.8 L514.0,247.2 L513.5,246.4 L513.0,246.9 L512.5,246.0 L512.0,245.1 L511.5,246.6 L511.0,246.7 L510.5,246.5 L510.0,245.4 L509.5,246.5 L509.0,246.6 L508.5,247.4 L508.0,249.8 L507.5,247.8 L507.0,247.5 L506.5,246.5 L506.0,247.4 L505.5,246.3 L505.0,248.4 L504.5,245.0 L504.0,245.7 L503.5,245.5 L503.0,247.3 L502.5,248.2 L502.0,249.4 L501.5,248.9 L501.0,246.7 L500.5,243.6 L500.0,243.8 L499.5,243.8 L499.0,245.2 L498.5,245.1 L498.0,245.3 L497.5,247.6 L497.0,249.6 L496.5,247.2 L496.0,245.3 L495.5,245.7 L495.0,247.6 L494.5,248.5 L494.0,249.4 L493.5,249.3 L493.0,248.6 L492.5,244.4 L492.0,244.7 L491.5,243.6 L491.0,244.3 L490.5,243.5 L490.0,246.1 L489.5,244.2 L489.0,245.3 L488.5,243.5 L488.0,245.6 L487.5,245.3 L487.0,247.1 L486.5,248.2 L486.0,246.4 L485.5,248.3 L485.0,248.2 L484.5,249.3 L484.0,248.7 L483.5,247.6 L483.0,248.1 L482.5,247.8 L482.0,244.8 L481.5,244.6 L481.0,245.6 L480.5,246.3 L480.0,248.2 L479.5,247.7 L479.0,246.5 L478.5,248.1 L478.0,249.4 L477.5,248.1 L477.0,245.4 L476.5,246.1 L476.0,247.6 L475.5,246.8 L475.0,247.5 L474.5,246.4 L474.0,245.9 L473.5,248.1 L473.0,245.7 L472.5,246.4 L472.0,246.9 L471.5,247.0 L471.0,246.4 L470.5,246.7 L470.0,247.8 L469.5,245.0 L469.0,246.8 L468.5,247.8 L468.0,249.2 L467.5,248.8 L467.0,248.7 L466.5,248.7 L466.0,245.6 L465.5,244.6 L465.0,245.2 L464.5,248.2 L464.0,246.9 L463.5,245.7 L463.0,247.0 L462.5,246.6 L462.0,244.9 L461.5,246.9 L461.0,249.9 L460.5,248.4 L460.0,248.0 L459.5,247.2 L459.0,247.3 L458.5,246.8 L458.0,244.4 L457.5,245.4 L457.0,246.8 L456.5,246.1 L456.0,247.8 L455.5,248.6 L455.0,250.0 L454.5,246.9 L454.0,245.4 L453.5,246.5 L453.0,246.8 L452.5,248.9 L452.0,248.4 L451.5,247.6 L451.0,250.0 L450.5,245.4 L450.0,244.8 L449.5,244.1 L449.0,246.0 L448.5,245.5 L448.0,245.9 L447.5,245.2 L447.0,245.6 L446.5,243.9 L446.0,245.4 L445.5,245.1 L445.0,244.9 L444.5,244.8 L444.0,245.9 L443.5,247.8 L443.0,247.7 L442.5,248.9 L442.0,247.3 L441.5,245.8 L441.0,246.3 L440.5,247.3 L440.0,245.2 L439.5,247.0 L439.0,248.3 L438.5,246.4 L438.0,246.8 L437.5,249.4 L437.0,248.5 L436.5,248.1 L436.0,246.9 L435.5,245.1 L435.0,246.1 L434.5,245.1 L434.0,244.0 L433.5,245.7 L433.0,247.1 L432.5,247.3 L432.0,250.0 L431.5,246.7 L431.0,246.2 L430.5,249.5 L430.0,249.4 L429.5,248.9 L429.0,247.1 L428.5,245.8 L428.0,246.2 L427.5,245.3 L427.0,247.5 L426.5,248.3 L426.0,247.8 L425.5,247.2 L425.0,247.1 L424.5,247.0 L424.0,245.5 L423.5,246.8 L423.0,249.0 L422.5,245.9 L422.0,246.9 L421.5,248.3 L421.0,248.7 L420.5,249.3 L420.0,245.4 L419.5,243.7 L419.0,244.0 L418.5,245.0 L418.0,246.3 L417.5,247.6 L417.0,248.3 L416.5,245.8 L416.0,246.6 L415.5,246.0 L415.0,246.0 L414.5,247.0 L414.0,249.1 L413.5,250.0 L413.0,246.9 L412.5,244.2 L412.0,243.5 L411.5,244.2 L411.0,247.2 L410.5,246.4 L410.0,247.7 L409.5,248.5 L409.0,250.0 L408.5,249.7 L408.0,249.7 L407.5,250.0 L407.0,246.9 L406.5,246.9 L406.0,249.2 L405.5,247.9 L405.0,244.9 L404.5,246.8 L404.0,247.1 L403.5,245.9 L403.0,244.2 L402.5,245.5 L402.0,248.4 L401.5,248.0 L401.0,249.7 L400.5,248.8 L400.0,248.4 L399.5,247.2 L399.0,247.2 L398.5,248.5 L398.0,247.9 L397.5,248.7 L397.0,249.9 L396.5,247.5 L396.0,244.6 L395.5,243.4 L395.0,245.0 L394.5,245.7 L394.0,249.1 L393.5,246.6 L393.0,247.7 L392.5,249.3 L392.0,247.1 L391.5,245.2 L391.0,243.9 L390.5,245.1 L390.0,243.9 L389.5,244.9 L389.0,246.8 L388.5,248.1 L388.0,245.5 L387.5,246.8 L387.0,247.6 L386.5,248.6 L386.0,246.1 L385.5,247.2 L385.0,248.8 L384.5,249.4 L384.0,247.4 L383.5,246.6 L383.0,248.4 L382.5,249.5 L382.0,246.5 L381.5,249.5 L381.0,248.5 L380.5,250.0 L380.0,249.8 L379.5,248.3 L379.0,248.2 L378.5,246.3 L378.0,248.2 L377.5,249.3 L377.0,248.6 L376.5,243.5 L376.0,243.5 L375.5,243.3 L375.0,244.6 L374.5,244.7 L374.0,247.2 L373.5,248.3 L373.0,249.4 L372.5,246.8 L372.0,243.7 L371.5,245.7 L371.0,246.4 L370.5,246.6 L370.0,247.3 L369.5,247.6 L369.0,247.1 L368.5,247.5 L368.0,245.0 L367.5,246.3 L367.0,248.1 L366.5,249.0 L366.0,249.1 L365.5,246.3 L365.0,246.9 L364.5,248.9 L364.0,245.3 L363.5,245.0 L363.0,247.3 L362.5,247.9 L362.0,247.6 L361.5,244.4 L361.0,244.8 L360.5,245.5 L360.0,246.3 L359.5,247.8 L359.0,247.2 L358.5,247.3 L358.0,249.1 L357.5,248.7 L357.0,248.0 L356.5,248.5 L356.0,246.1 L355.5,247.0 L355.0,249.5 L354.5,249.4 L354.0,246.8 L353.5,244.4 L353.0,244.7 L352.5,246.1 L352.0,245.5 L351.5,248.8 L351.0,248.9 L350.5,246.6 L350.0,244.2 L349.5,243.9 L349.0,243.6 L348.5,244.4 L348.0,243.8 L347.5,246.6 L347.0,245.0 L346.5,247.6 L346.0,249.1 L345.5,249.5 L345.0,246.4 L344.5,248.7 L344.0,246.6 L343.5,244.3 L343.0,245.4 L342.5,245.4 L342.0,247.0 L341.5,248.2 L341.0,245.8 L340.5,244.7 L340.0,245.9 L339.5,246.6 L339.0,244.7 L338.5,247.7 L338.0,245.5 L337.5,246.6 L337.0,247.7 L336.5,247.8 L336.0,250.0 L335.5,245.9 L335.0,244.6 L334.5,243.7 L334.0,244.2 L333.5,244.0 L333.0,245.7 L332.5,246.2 L332.0,246.9 L331.5,245.5 L331.0,246.2 L330.5,248.9 L330.0,248.0 L329.5,248.5 L329.0,246.5 L328.5,244.2 L328.0,243.8 L327.5,243.6 L327.0,244.2 L326.5,244.0 L326.0,245.4 L325.5,247.3 L325.0,245.7 L324.5,246.4 L324.0,247.5 L323.5,244.7 L323.0,243.7 L322.5,243.7 L322.0,245.1 L321.5,247.3 L321.0,250.0 L320.5,247.4 L320.0,244.6 L319.5,244.3 L319.0,243.6 L318.5,243.5 L318.0,244.4 L317.5,245.4 L317.0,244.6 L316.5,245.0 L316.0,245.2 L315.5,245.5 L315.0,245.9 L314.5,247.7 L314.0,247.6 L313.5,249.6 L313.0,246.6 L312.5,246.7 L312.0,249.2 L311.5,247.3 L311.0,244.1 L310.5,244.4 L310.0,244.7 L309.5,243.5 L309.0,244.4 L308.5,244.7 L308.0,244.5 L307.5,246.5 L307.0,246.1 L306.5,247.6 L306.0,246.6 L305.5,247.0 L305.0,247.6 L304.5,248.6 L304.0,244.3 L303.5,245.5 L303.0,246.9 L302.5,245.8 L302.0,247.8 L301.5,249.0 L301.0,248.0 L300.5,250.0 L300.0,249.7 L299.5,246.8 L299.0,244.3 L298.5,244.5 L298.0,246.2 L297.5,246.9 L297.0,246.5 L296.5,244.4 L296.0,244.3 L295.5,244.7 L295.0,245.9 L294.5,247.3 L294.0,248.2 L293.5,249.2 L293.0,246.1 L292.5,246.5 L292.0,243.7 L291.5,244.3 L291.0,245.3 L290.5,245.6 L290.0,247.9 L289.5,249.8 L289.0,248.3 L288.5,246.0 L288.0,246.8 L287.5,245.1 L287.0,244.7 L286.5,243.6 L286.0,244.4 L285.5,247.2 L285.0,249.5 L284.5,248.5 L284.0,245.5 L283.5,246.6 L283.0,247.4 L282.5,249.3 L282.0,246.9 L281.5,245.0 L281.0,245.9 L280.5,246.1 L280.0,246.2 L279.5,245.5 L279.0,246.2 L278.5,245.0 L278.0,247.0 L277.5,247.9 L277.0,247.9 L276.5,250.0 L276.0,250.0 L275.5,249.9 L275.0,248.3 L274.5,245.6 L274.0,243.9 L273.5,243.7 L273.0,247.7 L272.5,248.0 L272.0,248.7 L271.5,249.7 L271.0,248.7 L270.5,247.5 L270.0,247.4 L269.5,245.4 L269.0,245.3 L268.5,244.6 L268.0,245.4 L267.5,247.6 L267.0,246.0 L266.5,247.0 L266.0,248.8 L265.5,250.0 L265.0,247.5 L264.5,249.3 L264.0,249.1 L263.5,245.7 L263.0,246.7 L262.5,247.5 L262.0,246.6 L261.5,248.2 L261.0,249.2 L260.5,245.9 L260.0,245.9 L259.5,246.4 L259.0,246.6 L258.5,246.1 L258.0,244.0 L257.5,243.5 L257.0,245.4 L256.5,245.8 L256.0,245.7 L255.5,247.6 L255.0,245.4 L254.5,248.0 L254.0,249.7 L253.5,246.5 L253.0,246.6 L252.5,246.8 L252.0,247.7 L251.5,246.3 L251.0,244.9 L250.5,243.4 L250.0,245.3 L249.5,244.3 L249.0,245.3 L248.5,245.3 L248.0,245.0 L247.5,246.4 L247.0,247.1 L246.5,248.8 L246.0,248.8 L245.5,247.5 L245.0,249.3 L244.5,248.4 L244.0,249.1 L243.5,248.8 L243.0,247.9 L242.5,248.4 L242.0,244.4 L241.5,244.9 L241.0,244.9 L240.5,246.6 L240.0,248.0 L239.5,248.4 L239.0,249.6 L238.5,248.3 L238.0,245.7 L237.5,246.7 L237.0,247.6 L236.5,247.6 L236.0,246.2 L235.5,245.0 L235.0,245.5 L234.5,245.4 L234.0,248.8 L233.5,247.7 L233.0,248.4 L232.5,248.9 L232.0,246.9 L231.5,246.1 L231.0,248.9 L230.5,247.7 L230.0,249.3 L229.5,248.8 L229.0,248.0 L228.5,245.2 L228.0,245.9 L227.5,246.8 L227.0,247.4 L226.5,249.0 L226.0,247.2 L225.5,247.3 L225.0,250.0 L224.5,247.0 L224.0,248.4 L223.5,249.8 L223.0,249.0 L222.5,246.5 L222.0,246.1 L221.5,246.9 L221.0,247.1 L220.5,245.2 L220.0,246.2 L219.5,246.7 L219.0,247.6 L218.5,245.4 L218.0,246.9 L217.5,246.2 L217.0,246.1 L216.5,247.9 L216.0,249.0 L215.5,246.8 L215.0,246.6 L214.5,246.8 L214.0,249.4 L213.5,247.9 L213.0,245.6 L212.5,247.6 L212.0,249.9 L211.5,249.0 L211.0,245.1 L210.5,246.5 L210.0,246.9 L209.5,246.9 L209.0,248.4 L208.5,247.3 L208.0,248.6 L207.5,244.3 L207.0,245.5 L206.5,247.3 L206.0,247.6 L205.5,246.8 L205.0,246.6 L204.5,247.4 L204.0,248.6 L203.5,249.8 L203.0,249.3 L202.5,249.8 L202.0,247.2 L201.5,248.9 L201.0,247.6 L200.5,245.4 L200.0,247.6 L199.5,247.4 L199.0,245.5 L198.5,244.6 L198.0,245.0 L197.5,246.1 L197.0,243.4 L196.5,246.5 L196.0,246.2 L195.5,243.7 L195.0,244.5 L194.5,243.9 L194.0,243.8 L193.5,244.2 L193.0,244.3 L192.5,243.6 L192.0,243.8 L191.5,246.5 L191.0,245.9 L190.5,247.6 L190.0,247.0 L189.5,247.9 L189.0,248.1 L188.5,246.4 L188.0,247.2 L187.5,248.1 L187.0,244.7 L186.5,243.4 L186.0,244.7 L185.5,244.6 L185.0,244.6 L184.5,245.7 L184.0,246.3 L183.5,246.8 L183.0,247.1 L182.5,248.4 L182.0,248.1 L181.5,246.9 L181.0,246.7 L180.5,249.3 L180.0,249.5 L179.5,250.0 L179.0,247.8 L178.5,248.5 L178.0,248.7 L177.5,249.0 L177.0,247.3 L176.5,248.1 L176.0,247.4 L175.5,245.7 L175.0,246.0 L174.5,247.8 L174.0,247.1 L173.5,248.3 L173.0,247.1 L172.5,244.9 L172.0,245.5 L171.5,246.6 L171.0,247.2 L170.5,245.1 L170.0,246.7 L169.5,248.4 L169.0,247.0 L168.5,248.7 L168.0,247.9 L167.5,247.7 L167.0,245.5 L166.5,246.2 L166.0,246.9 L165.5,247.8 L165.0,246.0 L164.5,246.0 L164.0,244.6 L163.5,245.3 L163.0,247.1 L162.5,244.3 L162.0,245.6 L161.5,246.9 L161.0,247.1 L160.5,247.6 L160.0,247.8 L159.5,248.7 L159.0,246.8 L158.5,248.8 L158.0,250.0 L157.5,246.4 L157.0,246.8 L156.5,247.8 L156.0,248.6 L155.5,248.2 L155.0,245.9 L154.5,246.9 L154.0,247.0 L153.5,248.2 L153.0,248.9 L152.5,246.8 L152.0,245.1 L151.5,245.4 L151.0,245.0 L150.5,246.7 L150.0,246.4 L149.5,247.3 L149.0,247.6 L148.5,246.3 L148.0,248.6 L147.5,249.4 L147.0,247.3 L146.5,245.7 L146.0,246.8 L145.5,247.4 L145.0,247.4 L144.5,248.0 L144.0,246.8 L143.5,245.2 L143.0,244.6 L142.5,245.8 L142.0,246.3 L141.5,247.0 L141.0,245.7 L140.5,246.6 L140.0,247.2 L139.5,246.9 L139.0,247.1 L138.5,247.5 L138.0,243.7 L137.5,244.5 L137.0,246.9 L136.5,247.9 L136.0,247.5 L135.5,244.6 L135.0,245.0 L134.5,244.9 L134.0,245.2 L133.5,245.7 L133.0,247.0 L132.5,249.0 L132.0,248.3 L131.5,244.5 L131.0,244.3 L130.5,244.3 L130.0,245.2 L129.5,244.1 L129.0,244.4 L128.5,246.6 L128.0,249.2 L127.5,248.3 L127.0,248.2 L126.5,249.2 L126.0,248.5 L125.5,245.6 L125.0,247.1 L124.5,247.6 L124.0,247.8 L123.5,249.6 L123.0,248.4 L122.5,245.6 L122.0,245.2 L121.5,245.7 L121.0,245.8 L120.5,245.4 L120.0,244.1 L119.5,243.3 L119.0,243.9 L118.5,244.2 L118.0,244.8 L117.5,245.5 L117.0,245.8 L116.5,248.3 L116.0,246.9 L115.5,244.8 L115.0,245.2 L114.5,245.0 L114.0,247.1 L113.5,247.8 L113.0,248.3 L112.5,248.0 L112.0,247.6 L111.5,248.2 L111.0,249.8 L110.5,248.8 L110.0,247.6 L109.5,244.2 L109.0,243.5 L108.5,245.7 L108.0,245.7 L107.5,247.5 L107.0,246.8 L106.5,247.2 L106.0,247.2 L105.5,246.3 L105.0,246.9 L104.5,244.2 L104.0,243.9 L103.5,244.1 L103.0,244.5 L102.5,246.6 L102.0,245.0 L101.5,244.5 L101.0,245.2 L100.5,246.5 L100.0,244.8 L99.5,246.9 L99.0,245.4 L98.5,247.2 L98.0,246.5 L97.5,245.7 L97.0,245.8 L96.5,246.8 L96.0,246.3 L95.5,245.6 L95.0,246.7 L94.5,249.6 L94.0,249.3 L93.5,248.7 L93.0,245.6 L92.5,246.4 L92.0,245.0 L91.5,246.9 L91.0,247.2 L90.5,248.5 L90.0,249.7 L89.5,247.0 L89.0,245.4 L88.5,246.5 L88.0,248.5 L87.5,248.3 L87.0,245.8 L86.5,245.5 L86.0,244.2 L85.5,244.1 L85.0,247.2 L84.5,249.0 L84.0,248.2 L83.5,244.5 L83.0,244.5 L82.5,244.1 L82.0,244.4 L81.5,244.1 L81.0,245.8 L80.5,247.9 L80.0,247.3 L79.5,249.9 L79.0,247.5 L78.5,247.9 L78.0,250.0 L77.5,248.7 L77.0,249.3 L76.5,250.0 L76.0,246.7 L75.5,245.9 L75.0,247.5 L74.5,245.6 L74.0,247.5 L73.5,249.1 L73.0,244.9 L72.5,245.6 L72.0,246.5 L71.5,248.0 L71.0,246.4 L70.5,246.1 L70.0,246.7 L69.5,247.1 L69.0,245.7 L68.5,247.9 L68.0,249.8 L67.5,246.8 L67.0,247.4 L66.5,247.7 L66.0,246.0 L65.5,246.5 L65.0,246.2 L64.5,244.1 L64.0,243.6 L63.5,244.3 L63.0,244.0 L62.5,246.5 L62.0,244.0 L61.5,245.2 L61.0,244.4 L60.5,244.6 L60.0,244.4 L59.5,243.7 L59.0,243.9 L58.5,245.5 L58.0,244.4 L57.5,245.5 L57.0,249.0 L56.5,249.9 L56.0,247.1 L55.5,246.3 L55.0,244.1 L54.5,245.1 L54.0,246.2 L53.5,247.1 L53.0,248.5 L52.5,249.0 L52.0,248.9 L51.5,246.4 L51.0,247.8 L50.5,249.0 L50.0,246.5 L49.5,246.2 L49.0,244.8 L48.5,245.7 L48.0,245.3 L47.5,244.8 L47.0,243.4 L46.5,245.2 L46.0,246.1 L45.5,246.3 L45.0,245.5 L44.5,246.1 L44.0,245.5 L43.5,243.6 L43.0,244.0 L42.5,245.1 L42.0,246.3 L41.5,246.9 L41.0,247.7 L40.5,248.1 L40.0,246.1 L39.5,247.0 L39.0,248.1 L38.5,248.0 L38.0,243.8 L37.5,244.2 L37.0,245.0 L36.5,246.9 L36.0,247.2 L35.5,248.7 L35.0,248.3 L34.5,249.8 L34.0,246.5 L33.5,245.9 L33.0,243.4 L32.5,243.6 L32.0,243.9 L31.5,244.3 L31.0,244.3 L30.5,244.4 L30.0,245.9 L29.5,244.8 L29.0,245.0 L28.5,246.5 L28.0,247.5 L27.5,249.8 L27.0,248.9 L26.5,246.7 L26.0,245.7 L25.5,246.7 L25.0,247.5 L24.5,248.3 L24.0,247.3 L23.5,246.7 L23.0,247.2 L22.5,249.1 L22.0,246.8 L21.5,245.5 L21.0,246.6 L20.5,247.9 L20.0,246.6 L19.5,245.6 L19.0,245.7 L18.5,246.2 L18.0,246.1 L17.5,245.7 L17.0,246.5 L16.5,244.6 L16.0,244.5 L15.5,243.2 L15.0,241.4 L14.5,240.6 L14.0,239.8 L13.5,239.4 L13.0,238.5 L12.5,238.0 L12.0,237.1 L11.5,236.3 L11.0,235.5Z" fill="#d6d6d6" clip-path="url(#ml)"/>
  <path d="M11.0,235.5 L11.5,234.7 L12.0,234.1 L12.5,233.0 L13.0,231.8 L13.5,231.4 L14.0,230.6 L14.5,229.5 L15.0,228.5 L15.5,228.6 L16.0,227.9 L16.5,225.7 L17.0,225.7 L17.5,226.0 L18.0,225.9 L18.5,225.7 L19.0,226.4 L19.5,225.3 L20.0,221.9 L20.5,223.8 L21.0,225.2 L21.5,222.2 L22.0,224.0 L22.5,222.3 L23.0,223.4 L23.5,224.6 L24.0,223.0 L24.5,221.5 L25.0,222.3 L25.5,223.2 L26.0,225.5 L26.5,225.5 L27.0,224.8 L27.5,222.8 L28.0,225.6 L28.5,226.3 L29.0,227.5 L29.5,223.9 L30.0,225.3 L30.5,224.9 L31.0,224.6 L31.5,223.7 L32.0,224.2 L32.5,224.0 L33.0,225.2 L33.5,224.3 L34.0,223.2 L34.5,221.0 L35.0,223.4 L35.5,225.8 L36.0,224.4 L36.5,223.2 L37.0,222.8 L37.5,223.2 L38.0,224.8 L38.5,225.5 L39.0,226.5 L39.5,222.7 L40.0,222.5 L40.5,223.4 L41.0,221.4 L41.5,222.0 L42.0,221.2 L42.5,223.9 L43.0,225.0 L43.5,224.8 L44.0,225.5 L44.5,226.4 L45.0,225.8 L45.5,224.1 L46.0,221.7 L46.5,222.8 L47.0,222.9 L47.5,223.7 L48.0,224.9 L48.5,223.7 L49.0,223.3 L49.5,222.1 L50.0,222.7 L50.5,223.5 L51.0,223.9 L51.5,225.5 L52.0,222.3 L52.5,224.8 L53.0,225.1 L53.5,224.6 L54.0,222.8 L54.5,222.5 L55.0,223.3 L55.5,225.0 L56.0,224.9 L56.5,225.9 L57.0,223.0 L57.5,222.7 L58.0,223.6 L58.5,222.5 L59.0,221.4 L59.5,222.9 L60.0,224.2 L60.5,223.2 L61.0,221.0 L61.5,224.5 L62.0,225.8 L62.5,225.6 L63.0,226.2 L63.5,226.7 L64.0,223.4 L64.5,223.4 L65.0,224.7 L65.5,224.3 L66.0,225.7 L66.5,224.7 L67.0,223.6 L67.5,221.0 L68.0,223.0 L68.5,224.4 L69.0,225.8 L69.5,227.2 L70.0,226.9 L70.5,225.0 L71.0,222.9 L71.5,222.0 L72.0,221.0 L72.5,223.7 L73.0,224.3 L73.5,223.8 L74.0,226.8 L74.5,224.7 L75.0,222.1 L75.5,222.4 L76.0,222.5 L76.5,224.0 L77.0,224.2 L77.5,221.2 L78.0,223.9 L78.5,224.8 L79.0,225.4 L79.5,222.7 L80.0,221.8 L80.5,221.8 L81.0,224.4 L81.5,221.0 L82.0,224.0 L82.5,227.1 L83.0,225.0 L83.5,222.9 L84.0,224.4 L84.5,224.4 L85.0,223.3 L85.5,223.4 L86.0,223.5 L86.5,225.3 L87.0,225.7 L87.5,223.6 L88.0,224.7 L88.5,226.5 L89.0,227.4 L89.5,227.4 L90.0,226.5 L90.5,224.7 L91.0,223.0 L91.5,223.9 L92.0,224.7 L92.5,223.9 L93.0,222.6 L93.5,224.3 L94.0,222.3 L94.5,222.1 L95.0,223.2 L95.5,224.6 L96.0,222.5 L96.5,222.0 L97.0,223.5 L97.5,225.2 L98.0,226.3 L98.5,226.5 L99.0,223.5 L99.5,221.8 L100.0,222.3 L100.5,222.7 L101.0,223.6 L101.5,224.9 L102.0,223.9 L102.5,225.6 L103.0,225.5 L103.5,225.8 L104.0,225.5 L104.5,225.1 L105.0,226.0 L105.5,223.8 L106.0,222.7 L106.5,224.0 L107.0,225.3 L107.5,225.7 L108.0,223.5 L108.5,222.3 L109.0,221.3 L109.5,224.6 L110.0,223.4 L110.5,225.8 L111.0,227.1 L111.5,223.5 L112.0,223.1 L112.5,222.5 L113.0,223.8 L113.5,225.1 L114.0,223.7 L114.5,221.7 L115.0,222.8 L115.5,224.6 L116.0,222.7 L116.5,224.0 L117.0,225.5 L117.5,221.5 L118.0,222.6 L118.5,224.0 L119.0,223.2 L119.5,222.6 L120.0,223.0 L120.5,223.2 L121.0,223.3 L121.5,224.5 L122.0,225.9 L122.5,224.3 L123.0,222.2 L123.5,224.3 L124.0,223.5 L124.5,222.2 L125.0,222.8 L125.5,225.7 L126.0,227.3 L126.5,225.2 L127.0,221.9 L127.5,224.1 L128.0,225.5 L128.5,226.2 L129.0,225.7 L129.5,225.0 L130.0,224.6 L130.5,223.1 L131.0,221.5 L131.5,224.1 L132.0,225.9 L132.5,223.3 L133.0,223.1 L133.5,224.6 L134.0,225.6 L134.5,227.3 L135.0,227.6 L135.5,226.3 L136.0,225.7 L136.5,223.6 L137.0,224.7 L137.5,224.2 L138.0,221.1 L138.5,223.9 L139.0,222.2 L139.5,222.2 L140.0,224.9 L140.5,222.9 L141.0,223.3 L141.5,222.7 L142.0,221.9 L142.5,224.1 L143.0,223.3 L143.5,222.9 L144.0,223.2 L144.5,224.2 L145.0,225.3 L145.5,226.3 L146.0,224.7 L146.5,221.8 L147.0,223.8 L147.5,225.8 L148.0,227.1 L148.5,227.4 L149.0,226.7 L149.5,225.9 L150.0,224.0 L150.5,225.5 L151.0,223.5 L151.5,223.5 L152.0,223.8 L152.5,222.2 L153.0,223.8 L153.5,224.2 L154.0,224.0 L154.5,222.0 L155.0,221.1 L155.5,221.9 L156.0,223.4 L156.5,221.7 L157.0,222.9 L157.5,224.3 L158.0,224.9 L158.5,224.6 L159.0,224.5 L159.5,223.2 L160.0,223.4 L160.5,223.5 L161.0,221.1 L161.5,222.4 L162.0,225.1 L162.5,222.3 L163.0,222.5 L163.5,223.7 L164.0,224.4 L164.5,225.8 L165.0,224.9 L165.5,222.6 L166.0,221.8 L166.5,222.0 L167.0,224.5 L167.5,222.3 L168.0,222.3 L168.5,222.3 L169.0,223.4 L169.5,224.5 L170.0,225.1 L170.5,222.3 L171.0,221.9 L171.5,223.8 L172.0,222.5 L172.5,223.8 L173.0,223.2 L173.5,225.5 L174.0,223.8 L174.5,223.0 L175.0,223.6 L175.5,224.0 L176.0,223.1 L176.5,224.4 L177.0,224.5 L177.5,225.6 L178.0,226.7 L178.5,226.7 L179.0,227.1 L179.5,226.4 L180.0,226.2 L180.5,225.3 L181.0,225.6 L181.5,225.6 L182.0,221.8 L182.5,223.1 L183.0,224.2 L183.5,225.2 L184.0,226.7 L184.5,227.0 L185.0,224.1 L185.5,223.7 L186.0,223.3 L186.5,224.9 L187.0,225.8 L187.5,225.6 L188.0,224.5 L188.5,225.8 L189.0,226.4 L189.5,225.3 L190.0,222.0 L190.5,223.6 L191.0,225.0 L191.5,226.3 L192.0,225.4 L192.5,225.5 L193.0,224.9 L193.5,225.5 L194.0,224.6 L194.5,221.7 L195.0,224.1 L195.5,224.9 L196.0,224.1 L196.5,226.0 L197.0,226.0 L197.5,226.1 L198.0,227.6 L198.5,227.5 L199.0,227.1 L199.5,226.6 L200.0,227.5 L200.5,227.0 L201.0,225.4 L201.5,225.1 L202.0,224.0 L202.5,222.6 L203.0,222.9 L203.5,221.6 L204.0,222.0 L204.5,223.6 L205.0,224.6 L205.5,225.9 L206.0,226.7 L206.5,223.1 L207.0,222.3 L207.5,224.2 L208.0,223.4 L208.5,226.0 L209.0,226.5 L209.5,226.6 L210.0,225.8 L210.5,223.4 L211.0,224.6 L211.5,223.9 L212.0,221.0 L212.5,222.2 L213.0,224.3 L213.5,224.8 L214.0,226.5 L214.5,225.8 L215.0,222.7 L215.5,223.6 L216.0,224.0 L216.5,223.5 L217.0,224.1 L217.5,221.5 L218.0,222.3 L218.5,223.9 L219.0,225.3 L219.5,225.2 L220.0,225.8 L220.5,225.4 L221.0,225.5 L221.5,226.0 L222.0,224.8 L222.5,222.7 L223.0,222.9 L223.5,223.3 L224.0,222.4 L224.5,223.4 L225.0,224.9 L225.5,225.8 L226.0,227.2 L226.5,227.5 L227.0,227.1 L227.5,225.4 L228.0,222.3 L228.5,222.5 L229.0,223.5 L229.5,225.5 L230.0,222.8 L230.5,224.2 L231.0,224.9 L231.5,226.1 L232.0,225.7 L232.5,225.5 L233.0,226.3 L233.5,223.0 L234.0,223.5 L234.5,224.1 L235.0,222.4 L235.5,221.8 L236.0,225.3 L236.5,223.0 L237.0,221.3 L237.5,222.3 L238.0,222.3 L238.5,224.4 L239.0,225.6 L239.5,226.1 L240.0,223.2 L240.5,224.2 L241.0,224.7 L241.5,226.4 L242.0,222.6 L242.5,222.5 L243.0,222.1 L243.5,222.4 L244.0,223.6 L244.5,222.8 L245.0,224.0 L245.5,226.2 L246.0,223.7 L246.5,224.5 L247.0,224.4 L247.5,224.8 L248.0,226.3 L248.5,225.9 L249.0,224.1 L249.5,222.2 L250.0,222.9 L250.5,222.7 L251.0,224.0 L251.5,224.8 L252.0,222.6 L252.5,225.3 L253.0,225.4 L253.5,223.6 L254.0,224.7 L254.5,224.8 L255.0,225.7 L255.5,224.3 L256.0,224.5 L256.5,224.4 L257.0,224.1 L257.5,226.5 L258.0,225.9 L258.5,225.8 L259.0,225.5 L259.5,225.0 L260.0,223.6 L260.5,224.3 L261.0,224.5 L261.5,225.4 L262.0,226.3 L262.5,227.0 L263.0,225.0 L263.5,221.0 L264.0,223.7 L264.5,224.3 L265.0,223.5 L265.5,221.0 L266.0,222.0 L266.5,222.6 L267.0,224.3 L267.5,224.2 L268.0,224.0 L268.5,223.4 L269.0,223.5 L269.5,224.9 L270.0,223.4 L270.5,223.3 L271.0,223.5 L271.5,224.7 L272.0,225.0 L272.5,226.6 L273.0,224.8 L273.5,223.2 L274.0,221.7 L274.5,222.0 L275.0,223.4 L275.5,225.0 L276.0,224.3 L276.5,223.3 L277.0,223.0 L277.5,222.4 L278.0,223.0 L278.5,224.6 L279.0,221.0 L279.5,222.2 L280.0,225.8 L280.5,226.1 L281.0,226.8 L281.5,224.2 L282.0,224.8 L282.5,222.0 L283.0,222.9 L283.5,224.2 L284.0,222.2 L284.5,223.9 L285.0,222.6 L285.5,223.5 L286.0,221.0 L286.5,223.0 L287.0,223.5 L287.5,221.5 L288.0,222.2 L288.5,223.3 L289.0,221.4 L289.5,222.7 L290.0,226.0 L290.5,226.2 L291.0,227.6 L291.5,226.8 L292.0,223.9 L292.5,221.8 L293.0,223.4 L293.5,221.7 L294.0,223.4 L294.5,224.4 L295.0,226.2 L295.5,225.6 L296.0,224.9 L296.5,224.4 L297.0,223.5 L297.5,224.9 L298.0,226.3 L298.5,226.0 L299.0,224.7 L299.5,223.0 L300.0,221.9 L300.5,224.2 L301.0,223.7 L301.5,222.5 L302.0,223.0 L302.5,223.0 L303.0,222.1 L303.5,223.4 L304.0,223.9 L304.5,223.9 L305.0,222.8 L305.5,222.2 L306.0,224.9 L306.5,225.4 L307.0,223.5 L307.5,221.2 L308.0,221.3 L308.5,222.6 L309.0,222.4 L309.5,222.4 L310.0,222.1 L310.5,223.8 L311.0,223.5 L311.5,221.1 L312.0,224.8 L312.5,225.9 L313.0,225.7 L313.5,225.4 L314.0,224.4 L314.5,225.1 L315.0,226.6 L315.5,226.0 L316.0,226.9 L316.5,227.6 L317.0,227.1 L317.5,226.5 L318.0,227.1 L318.5,226.8 L319.0,224.3 L319.5,223.0 L320.0,223.6 L320.5,225.2 L321.0,225.4 L321.5,224.6 L322.0,225.2 L322.5,226.2 L323.0,226.2 L323.5,226.5 L324.0,226.6 L324.5,225.5 L325.0,227.7 L325.5,226.7 L326.0,226.9 L326.5,224.0 L327.0,223.6 L327.5,223.3 L328.0,224.9 L328.5,223.7 L329.0,221.6 L329.5,222.9 L330.0,223.0 L330.5,223.6 L331.0,223.5 L331.5,226.2 L332.0,222.8 L332.5,221.0 L333.0,223.4 L333.5,221.4 L334.0,221.9 L334.5,222.7 L335.0,225.5 L335.5,226.3 L336.0,225.9 L336.5,224.8 L337.0,224.8 L337.5,225.9 L338.0,223.8 L338.5,223.0 L339.0,222.6 L339.5,221.9 L340.0,222.8 L340.5,223.3 L341.0,223.5 L341.5,224.7 L342.0,223.3 L342.5,223.7 L343.0,225.5 L343.5,226.9 L344.0,227.0 L344.5,226.3 L345.0,224.2 L345.5,223.4 L346.0,224.4 L346.5,222.5 L347.0,223.1 L347.5,225.0 L348.0,225.1 L348.5,224.2 L349.0,222.1 L349.5,223.1 L350.0,225.5 L350.5,227.3 L351.0,226.9 L351.5,227.0 L352.0,226.8 L352.5,225.2 L353.0,224.2 L353.5,222.5 L354.0,225.5 L354.5,226.7 L355.0,225.0 L355.5,222.9 L356.0,222.2 L356.5,223.8 L357.0,223.0 L357.5,222.4 L358.0,222.4 L358.5,224.1 L359.0,222.5 L359.5,225.2 L360.0,225.0 L360.5,223.9 L361.0,222.0 L361.5,225.4 L362.0,227.6 L362.5,225.0 L363.0,224.2 L363.5,223.0 L364.0,226.5 L364.5,226.8 L365.0,226.9 L365.5,226.6 L366.0,227.7 L366.5,226.6 L367.0,225.0 L367.5,223.2 L368.0,225.2 L368.5,227.2 L369.0,227.2 L369.5,226.6 L370.0,222.7 L370.5,221.3 L371.0,222.6 L371.5,223.6 L372.0,222.9 L372.5,223.3 L373.0,223.9 L373.5,223.4 L374.0,222.9 L374.5,224.5 L375.0,222.1 L375.5,224.7 L376.0,225.1 L376.5,224.8 L377.0,223.3 L377.5,225.7 L378.0,224.5 L378.5,221.6 L379.0,222.1 L379.5,223.8 L380.0,225.0 L380.5,227.1 L381.0,227.6 L381.5,227.1 L382.0,227.2 L382.5,226.9 L383.0,225.8 L383.5,226.0 L384.0,226.3 L384.5,224.2 L385.0,224.0 L385.5,222.9 L386.0,225.2 L386.5,224.7 L387.0,225.0 L387.5,225.5 L388.0,222.6 L388.5,223.6 L389.0,224.9 L389.5,226.3 L390.0,226.5 L390.5,225.0 L391.0,224.1 L391.5,225.2 L392.0,223.1 L392.5,224.2 L393.0,224.2 L393.5,223.1 L394.0,221.0 L394.5,222.0 L395.0,221.0 L395.5,224.6 L396.0,226.0 L396.5,224.7 L397.0,225.1 L397.5,225.3 L398.0,223.8 L398.5,224.2 L399.0,225.3 L399.5,226.9 L400.0,227.4 L400.5,227.6 L401.0,227.6 L401.5,225.6 L402.0,222.2 L402.5,225.2 L403.0,222.8 L403.5,221.0 L404.0,222.2 L404.5,222.2 L405.0,222.2 L405.5,222.2 L406.0,222.9 L406.5,221.0 L407.0,223.0 L407.5,223.5 L408.0,225.6 L408.5,226.3 L409.0,225.3 L409.5,223.3 L410.0,222.0 L410.5,223.5 L411.0,224.1 L411.5,224.4 L412.0,225.6 L412.5,225.8 L413.0,225.1 L413.5,225.2 L414.0,221.5 L414.5,223.6 L415.0,222.3 L415.5,224.7 L416.0,225.3 L416.5,225.7 L417.0,222.2 L417.5,222.5 L418.0,224.0 L418.5,224.3 L419.0,224.6 L419.5,226.0 L420.0,226.2 L420.5,221.3 L421.0,223.0 L421.5,225.3 L422.0,225.5 L422.5,223.6 L423.0,224.3 L423.5,225.5 L424.0,226.4 L424.5,227.6 L425.0,227.1 L425.5,227.5 L426.0,226.4 L426.5,226.9 L427.0,226.6 L427.5,227.5 L428.0,223.3 L428.5,222.7 L429.0,222.0 L429.5,223.3 L430.0,225.3 L430.5,226.0 L431.0,225.1 L431.5,225.1 L432.0,225.2 L432.5,225.5 L433.0,225.9 L433.5,225.5 L434.0,225.3 L434.5,224.3 L435.0,225.5 L435.5,222.0 L436.0,221.0 L436.5,221.7 L437.0,224.7 L437.5,225.5 L438.0,226.8 L438.5,226.5 L439.0,226.8 L439.5,226.8 L440.0,224.5 L440.5,221.0 L441.0,222.3 L441.5,223.5 L442.0,221.0 L442.5,223.3 L443.0,224.2 L443.5,225.6 L444.0,226.6 L444.5,226.9 L445.0,227.5 L445.5,223.3 L446.0,222.9 L446.5,225.6 L447.0,226.7 L447.5,226.3 L448.0,227.1 L448.5,227.3 L449.0,225.5 L449.5,221.8 L450.0,223.2 L450.5,225.4 L451.0,225.2 L451.5,224.7 L452.0,223.3 L452.5,225.3 L453.0,226.6 L453.5,227.3 L454.0,225.7 L454.5,222.6 L455.0,222.2 L455.5,224.3 L456.0,224.9 L456.5,224.7 L457.0,222.1 L457.5,223.1 L458.0,224.9 L458.5,221.0 L459.0,223.0 L459.5,224.4 L460.0,223.1 L460.5,223.5 L461.0,224.5 L461.5,224.8 L462.0,224.9 L462.5,224.6 L463.0,221.5 L463.5,223.3 L464.0,223.9 L464.5,224.8 L465.0,224.5 L465.5,223.2 L466.0,224.4 L466.5,222.3 L467.0,222.7 L467.5,224.3 L468.0,221.0 L468.5,223.4 L469.0,224.3 L469.5,225.1 L470.0,225.4 L470.5,223.4 L471.0,222.0 L471.5,222.0 L472.0,224.0 L472.5,224.4 L473.0,224.6 L473.5,225.9 L474.0,226.5 L474.5,226.8 L475.0,222.0 L475.5,223.6 L476.0,222.2 L476.5,222.5 L477.0,223.1 L477.5,221.9 L478.0,224.9 L478.5,225.4 L479.0,224.8 L479.5,222.7 L480.0,224.7 L480.5,224.4 L481.0,225.0 L481.5,223.2 L482.0,222.1 L482.5,223.1 L483.0,224.6 L483.5,225.1 L484.0,226.9 L484.5,227.5 L485.0,225.9 L485.5,223.0 L486.0,224.3 L486.5,225.0 L487.0,225.1 L487.5,222.8 L488.0,222.3 L488.5,223.6 L489.0,224.4 L489.5,221.8 L490.0,222.6 L490.5,222.9 L491.0,224.4 L491.5,223.2 L492.0,224.6 L492.5,225.0 L493.0,223.2 L493.5,222.1 L494.0,223.5 L494.5,223.9 L495.0,221.9 L495.5,223.3 L496.0,221.6 L496.5,225.3 L497.0,225.1 L497.5,221.0 L498.0,222.7 L498.5,224.9 L499.0,221.6 L499.5,223.0 L500.0,223.5 L500.5,225.4 L501.0,225.1 L501.5,223.9 L502.0,224.6 L502.5,227.1 L503.0,226.2 L503.5,222.8 L504.0,223.9 L504.5,222.4 L505.0,223.7 L505.5,224.7 L506.0,224.2 L506.5,225.1 L507.0,225.6 L507.5,226.0 L508.0,227.3 L508.5,226.5 L509.0,226.3 L509.5,226.1 L510.0,226.3 L510.5,226.9 L511.0,226.4 L511.5,224.8 L512.0,221.3 L512.5,222.5 L513.0,223.1 L513.5,221.6 L514.0,223.4 L514.5,222.6 L515.0,224.5 L515.5,221.4 L516.0,221.8 L516.5,222.9 L517.0,223.7 L517.5,223.5 L518.0,222.5 L518.5,222.9 L519.0,224.1 L519.5,224.9 L520.0,226.3 L520.5,223.8 L521.0,222.9 L521.5,223.8 L522.0,224.4 L522.5,223.7 L523.0,222.7 L523.5,226.0 L524.0,227.3 L524.5,226.8 L525.0,227.6 L525.5,227.2 L526.0,227.6 L526.5,225.6 L527.0,226.9 L527.5,226.0 L528.0,225.2 L528.5,226.3 L529.0,226.3 L529.5,225.2 L530.0,223.2 L530.5,223.9 L531.0,222.8 L531.5,225.8 L532.0,226.7 L532.5,224.5 L533.0,223.1 L533.5,223.5 L534.0,225.4 L534.5,223.8 L535.0,223.6 L535.5,221.9 L536.0,223.3 L536.5,225.2 L537.0,226.3 L537.5,224.2 L538.0,222.0 L538.5,222.0 L539.0,223.7 L539.5,225.3 L540.0,225.5 L540.5,227.3 L541.0,227.6 L541.5,226.8 L542.0,226.7 L542.5,225.3 L543.0,222.4 L543.5,223.2 L544.0,224.1 L544.5,222.2 L545.0,224.8 L545.5,223.0 L546.0,225.1 L546.5,224.4 L547.0,222.7 L547.5,221.0 L548.0,225.4 L548.5,227.1 L549.0,227.6 L549.5,226.0 L550.0,222.8 L550.5,225.2 L551.0,226.1 L551.5,223.7 L552.0,224.4 L552.5,226.1 L553.0,222.6 L553.5,223.3 L554.0,222.7 L554.5,223.5 L555.0,224.0 L555.5,223.1 L556.0,223.3 L556.5,223.9 L557.0,223.9 L557.5,224.7 L558.0,224.7 L558.5,225.8 L559.0,225.8 L559.5,226.7 L560.0,226.1 L560.5,223.2 L561.0,222.0 L561.5,223.0 L562.0,221.7 L562.5,223.1 L563.0,222.0 L563.5,222.9 L564.0,223.4 L564.5,224.0 L565.0,224.2 L565.5,225.1 L566.0,222.9 L566.5,222.2 L567.0,224.8 L567.5,226.6 L568.0,227.1 L568.5,227.2 L569.0,226.6 L569.5,222.6 L570.0,222.4 L570.5,223.9 L571.0,222.9 L571.5,225.5 L572.0,226.0 L572.5,225.4 L573.0,223.8 L573.5,222.6 L574.0,224.0 L574.5,221.3 L575.0,223.0 L575.5,225.9 L576.0,223.7 L576.5,222.7 L577.0,224.3 L577.5,223.3 L578.0,225.9 L578.5,225.1 L579.0,225.7 L579.5,225.6 L580.0,223.6 L580.5,223.9 L581.0,224.0 L581.5,225.0 L582.0,222.4 L582.5,224.9 L583.0,225.2 L583.5,225.1 L584.0,225.4 L584.5,223.8 L585.0,225.6 L585.5,222.3 L586.0,222.0 L586.5,223.5 L587.0,226.2 L587.5,226.0 L588.0,225.5 L588.5,221.8 L589.0,224.7 L589.5,223.4 L590.0,225.7 L590.5,224.1 L591.0,225.9 L591.5,225.9 L592.0,225.8 L592.5,225.6 L593.0,226.4 L593.5,226.3 L594.0,226.9 L594.5,227.4 L595.0,226.5 L595.5,226.6 L596.0,226.5 L596.5,226.9 L597.0,224.4 L597.5,223.8 L598.0,223.0 L598.5,225.8 L599.0,223.6 L599.5,222.8 L600.0,224.4 L600.5,225.4 L601.0,226.5 L601.5,226.3 L602.0,226.3 L602.5,223.8 L603.0,223.3 L603.5,225.4 L604.0,224.0 L604.5,225.7 L605.0,223.8 L605.5,221.3 L606.0,224.0 L606.5,225.2 L607.0,222.8 L607.5,223.1 L608.0,224.7 L608.5,224.8 L609.0,226.1 L609.5,226.1 L610.0,224.3 L610.5,223.6 L611.0,223.6 L611.5,224.4 L612.0,223.8 L612.5,224.5 L613.0,223.1 L613.5,221.2 L614.0,222.0 L614.5,224.0 L615.0,223.2 L615.5,221.7 L616.0,224.2 L616.5,225.6 L617.0,225.9 L617.5,225.6 L618.0,224.0 L618.5,222.5 L619.0,223.6 L619.5,224.9 L620.0,224.6 L620.5,224.3 L621.0,224.8 L621.5,225.1 L622.0,225.0 L622.5,226.2 L623.0,225.8 L623.5,226.8 L624.0,228.4 L624.5,229.0 L625.0,228.7 L625.5,228.6 L626.0,228.6 L626.5,228.6 L627.0,228.6 L627.5,228.3 L628.0,229.2 L628.5,229.4 L629.0,230.0 L629.5,230.4 L630.0,230.5 L630.5,229.5 L631.0,229.6 L631.5,230.6 L632.0,231.2 L632.5,232.0 L633.0,232.2 L633.5,232.2 L634.0,232.2 L634.5,231.7 L635.0,232.1 L635.5,231.9 L636.0,231.6 L636.5,231.6 L637.0,231.9 L637.5,232.8 L638.0,233.1 L638.5,232.8 L639.0,232.5 L639.5,232.6 L640.0,232.9 L640.5,233.0 L641.0,233.4 L641.5,233.8 L642.0,234.0 L642.5,234.0 L643.0,234.0 L643.5,234.0 L644.0,233.7 L644.5,234.0 L645.0,234.0 L645.5,234.0 L646.0,233.9 L646.5,234.0 L647.0,234.0 L647.5,234.3 L648.0,234.1 L648.5,234.4 L649.0,234.7 L649.5,234.8 L650.0,234.6 L650.5,234.9 L651.0,234.6 L651.5,234.7 L652.0,234.9 L652.5,235.1 L653.0,235.2 L653.5,235.3 L654.0,235.1 L654.5,235.0 L655.0,235.0 L655.0,235.9 L654.5,235.7 L654.0,235.7 L653.5,235.9 L653.0,235.9 L652.5,236.1 L652.0,236.0 L651.5,236.1 L651.0,236.1 L650.5,236.1 L650.0,236.4 L649.5,236.8 L649.0,236.6 L648.5,236.4 L648.0,236.8 L647.5,236.7 L647.0,236.9 L646.5,237.0 L646.0,236.4 L645.5,236.5 L645.0,236.5 L644.5,236.6 L644.0,236.6 L643.5,236.8 L643.0,236.8 L642.5,237.2 L642.0,237.7 L641.5,238.2 L641.0,237.8 L640.5,237.6 L640.0,237.7 L639.5,238.1 L639.0,238.7 L638.5,239.1 L638.0,238.9 L637.5,238.4 L637.0,238.6 L636.5,238.9 L636.0,239.2 L635.5,239.8 L635.0,239.3 L634.5,239.8 L634.0,240.3 L633.5,239.8 L633.0,239.8 L632.5,240.6 L632.0,241.3 L631.5,240.3 L631.0,241.8 L630.5,240.9 L630.0,240.8 L629.5,241.7 L629.0,242.7 L628.5,240.9 L628.0,242.2 L627.5,242.1 L627.0,241.0 L626.5,241.8 L626.0,242.0 L625.5,242.7 L625.0,242.7 L624.5,243.8 L624.0,245.2 L623.5,245.2 L623.0,244.6 L622.5,245.4 L622.0,245.6 L621.5,243.9 L621.0,244.6 L620.5,245.7 L620.0,244.3 L619.5,246.7 L619.0,248.7 L618.5,248.1 L618.0,247.3 L617.5,246.0 L617.0,247.0 L616.5,247.8 L616.0,244.3 L615.5,244.1 L615.0,244.2 L614.5,245.8 L614.0,246.3 L613.5,248.1 L613.0,249.1 L612.5,247.2 L612.0,247.4 L611.5,246.0 L611.0,246.7 L610.5,246.6 L610.0,244.8 L609.5,246.9 L609.0,248.7 L608.5,248.1 L608.0,248.7 L607.5,248.8 L607.0,247.4 L606.5,245.6 L606.0,243.5 L605.5,244.3 L605.0,243.9 L604.5,244.5 L604.0,243.5 L603.5,244.3 L603.0,244.0 L602.5,244.9 L602.0,247.5 L601.5,245.2 L601.0,245.2 L600.5,244.9 L600.0,244.5 L599.5,245.5 L599.0,246.2 L598.5,245.5 L598.0,245.2 L597.5,246.3 L597.0,247.0 L596.5,246.2 L596.0,247.3 L595.5,246.1 L595.0,245.9 L594.5,247.1 L594.0,248.8 L593.5,246.6 L593.0,248.2 L592.5,249.0 L592.0,247.5 L591.5,248.2 L591.0,245.8 L590.5,245.9 L590.0,246.6 L589.5,244.9 L589.0,247.4 L588.5,248.4 L588.0,246.9 L587.5,248.6 L587.0,249.4 L586.5,247.2 L586.0,246.0 L585.5,246.7 L585.0,247.8 L584.5,247.0 L584.0,246.8 L583.5,244.3 L583.0,243.7 L582.5,244.0 L582.0,244.2 L581.5,243.4 L581.0,243.5 L580.5,244.6 L580.0,243.3 L579.5,244.5 L579.0,243.8 L578.5,244.9 L578.0,246.1 L577.5,248.4 L577.0,249.6 L576.5,247.4 L576.0,244.2 L575.5,244.7 L575.0,244.8 L574.5,244.9 L574.0,245.2 L573.5,244.4 L573.0,245.3 L572.5,246.0 L572.0,246.6 L571.5,246.7 L571.0,247.2 L570.5,246.5 L570.0,247.3 L569.5,247.2 L569.0,248.3 L568.5,248.7 L568.0,247.8 L567.5,246.5 L567.0,247.4 L566.5,248.0 L566.0,248.9 L565.5,249.1 L565.0,247.0 L564.5,246.1 L564.0,245.3 L563.5,244.8 L563.0,244.9 L562.5,245.3 L562.0,246.1 L561.5,249.5 L561.0,247.0 L560.5,245.2 L560.0,244.7 L559.5,245.8 L559.0,244.9 L558.5,245.0 L558.0,247.8 L557.5,246.8 L557.0,247.5 L556.5,248.2 L556.0,249.2 L555.5,250.0 L555.0,248.9 L554.5,246.4 L554.0,246.5 L553.5,247.1 L553.0,247.1 L552.5,245.4 L552.0,247.5 L551.5,246.8 L551.0,245.8 L550.5,244.8 L550.0,246.1 L549.5,246.9 L549.0,247.8 L548.5,247.3 L548.0,246.7 L547.5,245.1 L547.0,244.0 L546.5,244.5 L546.0,246.4 L545.5,246.7 L545.0,248.4 L544.5,246.1 L544.0,245.7 L543.5,245.5 L543.0,246.6 L542.5,246.5 L542.0,248.0 L541.5,246.2 L541.0,245.9 L540.5,247.3 L540.0,247.1 L539.5,246.6 L539.0,248.6 L538.5,249.3 L538.0,248.9 L537.5,250.0 L537.0,250.0 L536.5,249.4 L536.0,245.0 L535.5,243.8 L535.0,244.4 L534.5,244.7 L534.0,247.7 L533.5,246.3 L533.0,246.3 L532.5,246.5 L532.0,247.2 L531.5,247.8 L531.0,249.2 L530.5,247.2 L530.0,245.6 L529.5,246.1 L529.0,248.3 L528.5,249.3 L528.0,247.0 L527.5,248.5 L527.0,248.8 L526.5,247.7 L526.0,248.9 L525.5,245.1 L525.0,244.2 L524.5,244.8 L524.0,245.3 L523.5,247.4 L523.0,247.8 L522.5,247.6 L522.0,248.3 L521.5,248.5 L521.0,246.0 L520.5,245.5 L520.0,246.3 L519.5,244.7 L519.0,245.3 L518.5,247.4 L518.0,246.4 L517.5,246.5 L517.0,246.8 L516.5,244.4 L516.0,244.5 L515.5,243.8 L515.0,244.3 L514.5,244.8 L514.0,247.2 L513.5,246.4 L513.0,246.9 L512.5,246.0 L512.0,245.1 L511.5,246.6 L511.0,246.7 L510.5,246.5 L510.0,245.4 L509.5,246.5 L509.0,246.6 L508.5,247.4 L508.0,249.8 L507.5,247.8 L507.0,247.5 L506.5,246.5 L506.0,247.4 L505.5,246.3 L505.0,248.4 L504.5,245.0 L504.0,245.7 L503.5,245.5 L503.0,247.3 L502.5,248.2 L502.0,249.4 L501.5,248.9 L501.0,246.7 L500.5,243.6 L500.0,243.8 L499.5,243.8 L499.0,245.2 L498.5,245.1 L498.0,245.3 L497.5,247.6 L497.0,249.6 L496.5,247.2 L496.0,245.3 L495.5,245.7 L495.0,247.6 L494.5,248.5 L494.0,249.4 L493.5,249.3 L493.0,248.6 L492.5,244.4 L492.0,244.7 L491.5,243.6 L491.0,244.3 L490.5,243.5 L490.0,246.1 L489.5,244.2 L489.0,245.3 L488.5,243.5 L488.0,245.6 L487.5,245.3 L487.0,247.1 L486.5,248.2 L486.0,246.4 L485.5,248.3 L485.0,248.2 L484.5,249.3 L484.0,248.7 L483.5,247.6 L483.0,248.1 L482.5,247.8 L482.0,244.8 L481.5,244.6 L481.0,245.6 L480.5,246.3 L480.0,248.2 L479.5,247.7 L479.0,246.5 L478.5,248.1 L478.0,249.4 L477.5,248.1 L477.0,245.4 L476.5,246.1 L476.0,247.6 L475.5,246.8 L475.0,247.5 L474.5,246.4 L474.0,245.9 L473.5,248.1 L473.0,245.7 L472.5,246.4 L472.0,246.9 L471.5,247.0 L471.0,246.4 L470.5,246.7 L470.0,247.8 L469.5,245.0 L469.0,246.8 L468.5,247.8 L468.0,249.2 L467.5,248.8 L467.0,248.7 L466.5,248.7 L466.0,245.6 L465.5,244.6 L465.0,245.2 L464.5,248.2 L464.0,246.9 L463.5,245.7 L463.0,247.0 L462.5,246.6 L462.0,244.9 L461.5,246.9 L461.0,249.9 L460.5,248.4 L460.0,248.0 L459.5,247.2 L459.0,247.3 L458.5,246.8 L458.0,244.4 L457.5,245.4 L457.0,246.8 L456.5,246.1 L456.0,247.8 L455.5,248.6 L455.0,250.0 L454.5,246.9 L454.0,245.4 L453.5,246.5 L453.0,246.8 L452.5,248.9 L452.0,248.4 L451.5,247.6 L451.0,250.0 L450.5,245.4 L450.0,244.8 L449.5,244.1 L449.0,246.0 L448.5,245.5 L448.0,245.9 L447.5,245.2 L447.0,245.6 L446.5,243.9 L446.0,245.4 L445.5,245.1 L445.0,244.9 L444.5,244.8 L444.0,245.9 L443.5,247.8 L443.0,247.7 L442.5,248.9 L442.0,247.3 L441.5,245.8 L441.0,246.3 L440.5,247.3 L440.0,245.2 L439.5,247.0 L439.0,248.3 L438.5,246.4 L438.0,246.8 L437.5,249.4 L437.0,248.5 L436.5,248.1 L436.0,246.9 L435.5,245.1 L435.0,246.1 L434.5,245.1 L434.0,244.0 L433.5,245.7 L433.0,247.1 L432.5,247.3 L432.0,250.0 L431.5,246.7 L431.0,246.2 L430.5,249.5 L430.0,249.4 L429.5,248.9 L429.0,247.1 L428.5,245.8 L428.0,246.2 L427.5,245.3 L427.0,247.5 L426.5,248.3 L426.0,247.8 L425.5,247.2 L425.0,247.1 L424.5,247.0 L424.0,245.5 L423.5,246.8 L423.0,249.0 L422.5,245.9 L422.0,246.9 L421.5,248.3 L421.0,248.7 L420.5,249.3 L420.0,245.4 L419.5,243.7 L419.0,244.0 L418.5,245.0 L418.0,246.3 L417.5,247.6 L417.0,248.3 L416.5,245.8 L416.0,246.6 L415.5,246.0 L415.0,246.0 L414.5,247.0 L414.0,249.1 L413.5,250.0 L413.0,246.9 L412.5,244.2 L412.0,243.5 L411.5,244.2 L411.0,247.2 L410.5,246.4 L410.0,247.7 L409.5,248.5 L409.0,250.0 L408.5,249.7 L408.0,249.7 L407.5,250.0 L407.0,246.9 L406.5,246.9 L406.0,249.2 L405.5,247.9 L405.0,244.9 L404.5,246.8 L404.0,247.1 L403.5,245.9 L403.0,244.2 L402.5,245.5 L402.0,248.4 L401.5,248.0 L401.0,249.7 L400.5,248.8 L400.0,248.4 L399.5,247.2 L399.0,247.2 L398.5,248.5 L398.0,247.9 L397.5,248.7 L397.0,249.9 L396.5,247.5 L396.0,244.6 L395.5,243.4 L395.0,245.0 L394.5,245.7 L394.0,249.1 L393.5,246.6 L393.0,247.7 L392.5,249.3 L392.0,247.1 L391.5,245.2 L391.0,243.9 L390.5,245.1 L390.0,243.9 L389.5,244.9 L389.0,246.8 L388.5,248.1 L388.0,245.5 L387.5,246.8 L387.0,247.6 L386.5,248.6 L386.0,246.1 L385.5,247.2 L385.0,248.8 L384.5,249.4 L384.0,247.4 L383.5,246.6 L383.0,248.4 L382.5,249.5 L382.0,246.5 L381.5,249.5 L381.0,248.5 L380.5,250.0 L380.0,249.8 L379.5,248.3 L379.0,248.2 L378.5,246.3 L378.0,248.2 L377.5,249.3 L377.0,248.6 L376.5,243.5 L376.0,243.5 L375.5,243.3 L375.0,244.6 L374.5,244.7 L374.0,247.2 L373.5,248.3 L373.0,249.4 L372.5,246.8 L372.0,243.7 L371.5,245.7 L371.0,246.4 L370.5,246.6 L370.0,247.3 L369.5,247.6 L369.0,247.1 L368.5,247.5 L368.0,245.0 L367.5,246.3 L367.0,248.1 L366.5,249.0 L366.0,249.1 L365.5,246.3 L365.0,246.9 L364.5,248.9 L364.0,245.3 L363.5,245.0 L363.0,247.3 L362.5,247.9 L362.0,247.6 L361.5,244.4 L361.0,244.8 L360.5,245.5 L360.0,246.3 L359.5,247.8 L359.0,247.2 L358.5,247.3 L358.0,249.1 L357.5,248.7 L357.0,248.0 L356.5,248.5 L356.0,246.1 L355.5,247.0 L355.0,249.5 L354.5,249.4 L354.0,246.8 L353.5,244.4 L353.0,244.7 L352.5,246.1 L352.0,245.5 L351.5,248.8 L351.0,248.9 L350.5,246.6 L350.0,244.2 L349.5,243.9 L349.0,243.6 L348.5,244.4 L348.0,243.8 L347.5,246.6 L347.0,245.0 L346.5,247.6 L346.0,249.1 L345.5,249.5 L345.0,246.4 L344.5,248.7 L344.0,246.6 L343.5,244.3 L343.0,245.4 L342.5,245.4 L342.0,247.0 L341.5,248.2 L341.0,245.8 L340.5,244.7 L340.0,245.9 L339.5,246.6 L339.0,244.7 L338.5,247.7 L338.0,245.5 L337.5,246.6 L337.0,247.7 L336.5,247.8 L336.0,250.0 L335.5,245.9 L335.0,244.6 L334.5,243.7 L334.0,244.2 L333.5,244.0 L333.0,245.7 L332.5,246.2 L332.0,246.9 L331.5,245.5 L331.0,246.2 L330.5,248.9 L330.0,248.0 L329.5,248.5 L329.0,246.5 L328.5,244.2 L328.0,243.8 L327.5,243.6 L327.0,244.2 L326.5,244.0 L326.0,245.4 L325.5,247.3 L325.0,245.7 L324.5,246.4 L324.0,247.5 L323.5,244.7 L323.0,243.7 L322.5,243.7 L322.0,245.1 L321.5,247.3 L321.0,250.0 L320.5,247.4 L320.0,244.6 L319.5,244.3 L319.0,243.6 L318.5,243.5 L318.0,244.4 L317.5,245.4 L317.0,244.6 L316.5,245.0 L316.0,245.2 L315.5,245.5 L315.0,245.9 L314.5,247.7 L314.0,247.6 L313.5,249.6 L313.0,246.6 L312.5,246.7 L312.0,249.2 L311.5,247.3 L311.0,244.1 L310.5,244.4 L310.0,244.7 L309.5,243.5 L309.0,244.4 L308.5,244.7 L308.0,244.5 L307.5,246.5 L307.0,246.1 L306.5,247.6 L306.0,246.6 L305.5,247.0 L305.0,247.6 L304.5,248.6 L304.0,244.3 L303.5,245.5 L303.0,246.9 L302.5,245.8 L302.0,247.8 L301.5,249.0 L301.0,248.0 L300.5,250.0 L300.0,249.7 L299.5,246.8 L299.0,244.3 L298.5,244.5 L298.0,246.2 L297.5,246.9 L297.0,246.5 L296.5,244.4 L296.0,244.3 L295.5,244.7 L295.0,245.9 L294.5,247.3 L294.0,248.2 L293.5,249.2 L293.0,246.1 L292.5,246.5 L292.0,243.7 L291.5,244.3 L291.0,245.3 L290.5,245.6 L290.0,247.9 L289.5,249.8 L289.0,248.3 L288.5,246.0 L288.0,246.8 L287.5,245.1 L287.0,244.7 L286.5,243.6 L286.0,244.4 L285.5,247.2 L285.0,249.5 L284.5,248.5 L284.0,245.5 L283.5,246.6 L283.0,247.4 L282.5,249.3 L282.0,246.9 L281.5,245.0 L281.0,245.9 L280.5,246.1 L280.0,246.2 L279.5,245.5 L279.0,246.2 L278.5,245.0 L278.0,247.0 L277.5,247.9 L277.0,247.9 L276.5,250.0 L276.0,250.0 L275.5,249.9 L275.0,248.3 L274.5,245.6 L274.0,243.9 L273.5,243.7 L273.0,247.7 L272.5,248.0 L272.0,248.7 L271.5,249.7 L271.0,248.7 L270.5,247.5 L270.0,247.4 L269.5,245.4 L269.0,245.3 L268.5,244.6 L268.0,245.4 L267.5,247.6 L267.0,246.0 L266.5,247.0 L266.0,248.8 L265.5,250.0 L265.0,247.5 L264.5,249.3 L264.0,249.1 L263.5,245.7 L263.0,246.7 L262.5,247.5 L262.0,246.6 L261.5,248.2 L261.0,249.2 L260.5,245.9 L260.0,245.9 L259.5,246.4 L259.0,246.6 L258.5,246.1 L258.0,244.0 L257.5,243.5 L257.0,245.4 L256.5,245.8 L256.0,245.7 L255.5,247.6 L255.0,245.4 L254.5,248.0 L254.0,249.7 L253.5,246.5 L253.0,246.6 L252.5,246.8 L252.0,247.7 L251.5,246.3 L251.0,244.9 L250.5,243.4 L250.0,245.3 L249.5,244.3 L249.0,245.3 L248.5,245.3 L248.0,245.0 L247.5,246.4 L247.0,247.1 L246.5,248.8 L246.0,248.8 L245.5,247.5 L245.0,249.3 L244.5,248.4 L244.0,249.1 L243.5,248.8 L243.0,247.9 L242.5,248.4 L242.0,244.4 L241.5,244.9 L241.0,244.9 L240.5,246.6 L240.0,248.0 L239.5,248.4 L239.0,249.6 L238.5,248.3 L238.0,245.7 L237.5,246.7 L237.0,247.6 L236.5,247.6 L236.0,246.2 L235.5,245.0 L235.0,245.5 L234.5,245.4 L234.0,248.8 L233.5,247.7 L233.0,248.4 L232.5,248.9 L232.0,246.9 L231.5,246.1 L231.0,248.9 L230.5,247.7 L230.0,249.3 L229.5,248.8 L229.0,248.0 L228.5,245.2 L228.0,245.9 L227.5,246.8 L227.0,247.4 L226.5,249.0 L226.0,247.2 L225.5,247.3 L225.0,250.0 L224.5,247.0 L224.0,248.4 L223.5,249.8 L223.0,249.0 L222.5,246.5 L222.0,246.1 L221.5,246.9 L221.0,247.1 L220.5,245.2 L220.0,246.2 L219.5,246.7 L219.0,247.6 L218.5,245.4 L218.0,246.9 L217.5,246.2 L217.0,246.1 L216.5,247.9 L216.0,249.0 L215.5,246.8 L215.0,246.6 L214.5,246.8 L214.0,249.4 L213.5,247.9 L213.0,245.6 L212.5,247.6 L212.0,249.9 L211.5,249.0 L211.0,245.1 L210.5,246.5 L210.0,246.9 L209.5,246.9 L209.0,248.4 L208.5,247.3 L208.0,248.6 L207.5,244.3 L207.0,245.5 L206.5,247.3 L206.0,247.6 L205.5,246.8 L205.0,246.6 L204.5,247.4 L204.0,248.6 L203.5,249.8 L203.0,249.3 L202.5,249.8 L202.0,247.2 L201.5,248.9 L201.0,247.6 L200.5,245.4 L200.0,247.6 L199.5,247.4 L199.0,245.5 L198.5,244.6 L198.0,245.0 L197.5,246.1 L197.0,243.4 L196.5,246.5 L196.0,246.2 L195.5,243.7 L195.0,244.5 L194.5,243.9 L194.0,243.8 L193.5,244.2 L193.0,244.3 L192.5,243.6 L192.0,243.8 L191.5,246.5 L191.0,245.9 L190.5,247.6 L190.0,247.0 L189.5,247.9 L189.0,248.1 L188.5,246.4 L188.0,247.2 L187.5,248.1 L187.0,244.7 L186.5,243.4 L186.0,244.7 L185.5,244.6 L185.0,244.6 L184.5,245.7 L184.0,246.3 L183.5,246.8 L183.0,247.1 L182.5,248.4 L182.0,248.1 L181.5,246.9 L181.0,246.7 L180.5,249.3 L180.0,249.5 L179.5,250.0 L179.0,247.8 L178.5,248.5 L178.0,248.7 L177.5,249.0 L177.0,247.3 L176.5,248.1 L176.0,247.4 L175.5,245.7 L175.0,246.0 L174.5,247.8 L174.0,247.1 L173.5,248.3 L173.0,247.1 L172.5,244.9 L172.0,245.5 L171.5,246.6 L171.0,247.2 L170.5,245.1 L170.0,246.7 L169.5,248.4 L169.0,247.0 L168.5,248.7 L168.0,247.9 L167.5,247.7 L167.0,245.5 L166.5,246.2 L166.0,246.9 L165.5,247.8 L165.0,246.0 L164.5,246.0 L164.0,244.6 L163.5,245.3 L163.0,247.1 L162.5,244.3 L162.0,245.6 L161.5,246.9 L161.0,247.1 L160.5,247.6 L160.0,247.8 L159.5,248.7 L159.0,246.8 L158.5,248.8 L158.0,250.0 L157.5,246.4 L157.0,246.8 L156.5,247.8 L156.0,248.6 L155.5,248.2 L155.0,245.9 L154.5,246.9 L154.0,247.0 L153.5,248.2 L153.0,248.9 L152.5,246.8 L152.0,245.1 L151.5,245.4 L151.0,245.0 L150.5,246.7 L150.0,246.4 L149.5,247.3 L149.0,247.6 L148.5,246.3 L148.0,248.6 L147.5,249.4 L147.0,247.3 L146.5,245.7 L146.0,246.8 L145.5,247.4 L145.0,247.4 L144.5,248.0 L144.0,246.8 L143.5,245.2 L143.0,244.6 L142.5,245.8 L142.0,246.3 L141.5,247.0 L141.0,245.7 L140.5,246.6 L140.0,247.2 L139.5,246.9 L139.0,247.1 L138.5,247.5 L138.0,243.7 L137.5,244.5 L137.0,246.9 L136.5,247.9 L136.0,247.5 L135.5,244.6 L135.0,245.0 L134.5,244.9 L134.0,245.2 L133.5,245.7 L133.0,247.0 L132.5,249.0 L132.0,248.3 L131.5,244.5 L131.0,244.3 L130.5,244.3 L130.0,245.2 L129.5,244.1 L129.0,244.4 L128.5,246.6 L128.0,249.2 L127.5,248.3 L127.0,248.2 L126.5,249.2 L126.0,248.5 L125.5,245.6 L125.0,247.1 L124.5,247.6 L124.0,247.8 L123.5,249.6 L123.0,248.4 L122.5,245.6 L122.0,245.2 L121.5,245.7 L121.0,245.8 L120.5,245.4 L120.0,244.1 L119.5,243.3 L119.0,243.9 L118.5,244.2 L118.0,244.8 L117.5,245.5 L117.0,245.8 L116.5,248.3 L116.0,246.9 L115.5,244.8 L115.0,245.2 L114.5,245.0 L114.0,247.1 L113.5,247.8 L113.0,248.3 L112.5,248.0 L112.0,247.6 L111.5,248.2 L111.0,249.8 L110.5,248.8 L110.0,247.6 L109.5,244.2 L109.0,243.5 L108.5,245.7 L108.0,245.7 L107.5,247.5 L107.0,246.8 L106.5,247.2 L106.0,247.2 L105.5,246.3 L105.0,246.9 L104.5,244.2 L104.0,243.9 L103.5,244.1 L103.0,244.5 L102.5,246.6 L102.0,245.0 L101.5,244.5 L101.0,245.2 L100.5,246.5 L100.0,244.8 L99.5,246.9 L99.0,245.4 L98.5,247.2 L98.0,246.5 L97.5,245.7 L97.0,245.8 L96.5,246.8 L96.0,246.3 L95.5,245.6 L95.0,246.7 L94.5,249.6 L94.0,249.3 L93.5,248.7 L93.0,245.6 L92.5,246.4 L92.0,245.0 L91.5,246.9 L91.0,247.2 L90.5,248.5 L90.0,249.7 L89.5,247.0 L89.0,245.4 L88.5,246.5 L88.0,248.5 L87.5,248.3 L87.0,245.8 L86.5,245.5 L86.0,244.2 L85.5,244.1 L85.0,247.2 L84.5,249.0 L84.0,248.2 L83.5,244.5 L83.0,244.5 L82.5,244.1 L82.0,244.4 L81.5,244.1 L81.0,245.8 L80.5,247.9 L80.0,247.3 L79.5,249.9 L79.0,247.5 L78.5,247.9 L78.0,250.0 L77.5,248.7 L77.0,249.3 L76.5,250.0 L76.0,246.7 L75.5,245.9 L75.0,247.5 L74.5,245.6 L74.0,247.5 L73.5,249.1 L73.0,244.9 L72.5,245.6 L72.0,246.5 L71.5,248.0 L71.0,246.4 L70.5,246.1 L70.0,246.7 L69.5,247.1 L69.0,245.7 L68.5,247.9 L68.0,249.8 L67.5,246.8 L67.0,247.4 L66.5,247.7 L66.0,246.0 L65.5,246.5 L65.0,246.2 L64.5,244.1 L64.0,243.6 L63.5,244.3 L63.0,244.0 L62.5,246.5 L62.0,244.0 L61.5,245.2 L61.0,244.4 L60.5,244.6 L60.0,244.4 L59.5,243.7 L59.0,243.9 L58.5,245.5 L58.0,244.4 L57.5,245.5 L57.0,249.0 L56.5,249.9 L56.0,247.1 L55.5,246.3 L55.0,244.1 L54.5,245.1 L54.0,246.2 L53.5,247.1 L53.0,248.5 L52.5,249.0 L52.0,248.9 L51.5,246.4 L51.0,247.8 L50.5,249.0 L50.0,246.5 L49.5,246.2 L49.0,244.8 L48.5,245.7 L48.0,245.3 L47.5,244.8 L47.0,243.4 L46.5,245.2 L46.0,246.1 L45.5,246.3 L45.0,245.5 L44.5,246.1 L44.0,245.5 L43.5,243.6 L43.0,244.0 L42.5,245.1 L42.0,246.3 L41.5,246.9 L41.0,247.7 L40.5,248.1 L40.0,246.1 L39.5,247.0 L39.0,248.1 L38.5,248.0 L38.0,243.8 L37.5,244.2 L37.0,245.0 L36.5,246.9 L36.0,247.2 L35.5,248.7 L35.0,248.3 L34.5,249.8 L34.0,246.5 L33.5,245.9 L33.0,243.4 L32.5,243.6 L32.0,243.9 L31.5,244.3 L31.0,244.3 L30.5,244.4 L30.0,245.9 L29.5,244.8 L29.0,245.0 L28.5,246.5 L28.0,247.5 L27.5,249.8 L27.0,248.9 L26.5,246.7 L26.0,245.7 L25.5,246.7 L25.0,247.5 L24.5,248.3 L24.0,247.3 L23.5,246.7 L23.0,247.2 L22.5,249.1 L22.0,246.8 L21.5,245.5 L21.0,246.6 L20.5,247.9 L20.0,246.6 L19.5,245.6 L19.0,245.7 L18.5,246.2 L18.0,246.1 L17.5,245.7 L17.0,246.5 L16.5,244.6 L16.0,244.5 L15.5,243.2 L15.0,241.4 L14.5,240.6 L14.0,239.8 L13.5,239.4 L13.0,238.5 L12.5,238.0 L12.0,237.1 L11.5,236.3 L11.0,235.5Z" fill="#aaaaaa" clip-path="url(#mr)"/>
  <rect x="10" y="220" width="646" height="31" fill="none" stroke="#2aa8e6" stroke-width="2"/>
  <rect x="199" y="221" width="2" height="29" fill="#2aa8e6"/>
</svg>

<!-- ruler labels -->
<div class="lbl" style="left:13px;top:81px;font-size:8.8px;color:#33a0de">0</div>
<div class="lbl" style="left:219.3px;top:81px;font-size:8.8px;color:#888">10</div>
<div class="lbl" style="left:425.3px;top:81px;font-size:8.8px;color:#888">20</div>
<div class="lbl" style="left:631.5px;top:81px;font-size:8.8px;color:#33a0de">30</div>

<!-- header -->
<div class="a" style="left:29px;top:9px;width:211px;height:22px;background:#fff"></div>
<svg class="a" style="left:0;top:0" width="60" height="40" viewBox="0 0 60 40">
  <path d="M9 9 H35.2 A15 15 0 0 1 35.2 31 H9 Z" fill="#f4961e"/>
  <rect x="15.9" y="9" width="2.6" height="14" fill="#fff"/>
  <ellipse cx="23.2" cy="22.6" rx="6.3" ry="5.3" transform="rotate(-20 23.2 22.6)" fill="none" stroke="#fff" stroke-width="2.5"/>
</svg>
<div class="a" style="left:48.2px;top:9px;font-size:17.6px;color:#727272;line-height:22.5px"><span class="tl" style="transform:scaleX(.917)">Beat Edit</span></div>

<div class="a" style="left:243px;top:8px;width:24px;height:24px;background:#3c3c3c;border:1px solid #0a0a0a;box-shadow:inset 0 1px 0 #6a6a6a"></div>
<svg class="a" style="left:243px;top:8px" width="24" height="24" viewBox="0 0 24 24">
  <g transform="translate(11.7 12.05)" fill="#aaaaaa">
    <circle r="6.9"/>
    <rect x="-1.4" y="-8.7" width="2.8" height="3.5" rx="1"/>
    <rect x="-1.4" y="-8.7" width="2.8" height="3.5" rx="1" transform="rotate(45)"/>
    <rect x="-1.4" y="-8.7" width="2.8" height="3.5" rx="1" transform="rotate(90)"/>
    <rect x="-1.4" y="-8.7" width="2.8" height="3.5" rx="1" transform="rotate(135)"/>
    <rect x="-1.4" y="-8.7" width="2.8" height="3.5" rx="1" transform="rotate(180)"/>
    <rect x="-1.4" y="-8.7" width="2.8" height="3.5" rx="1" transform="rotate(225)"/>
    <rect x="-1.4" y="-8.7" width="2.8" height="3.5" rx="1" transform="rotate(270)"/>
    <rect x="-1.4" y="-8.7" width="2.8" height="3.5" rx="1" transform="rotate(315)"/>
    <circle r="4.5" fill="none" stroke="#2a2a2a" stroke-width="1.1"/>
    <circle r="3.4" fill="#b9b9b9"/>
  </g>
</svg>

<!-- tweet / share -->
<div class="a" style="left:561px;top:8px;width:46px;height:17px;border:1px solid #bdbdbd;border-radius:3px;background:linear-gradient(#fdfdfd,#dcdcdc)"></div>
<svg class="a" style="left:563.5px;top:12px" width="12" height="10" viewBox="0 0 24 20">
  <path d="M23.6 2.4c-.9.4-1.8.6-2.8.8 1-.6 1.8-1.6 2.1-2.7-.9.6-2 1-3.1 1.2C18.9.7 17.6.1 16.3.1c-2.7 0-4.9 2.2-4.9 4.9 0 .4 0 .8.1 1.1C7.4 5.9 3.8 4 1.4 1 1 1.7.7 2.6.7 3.5c0 1.7.9 3.2 2.2 4.1-.8 0-1.6-.2-2.2-.6v.1c0 2.4 1.7 4.4 3.9 4.8-.4.1-.8.2-1.3.2-.3 0-.6 0-.9-.1.6 2 2.4 3.4 4.6 3.4-1.7 1.3-3.8 2.1-6.1 2.1-.4 0-.8 0-1.2-.1 2.2 1.4 4.8 2.2 7.5 2.2 9.1 0 14-7.5 14-14v-.6c1-.7 1.8-1.6 2.4-2.5z" fill="#2aa3ef"/>
</svg>
<div class="lbl" style="left:578px;top:11px;font-size:9.1px;color:#222;line-height:13px">Tweet</div>
<div class="a" style="left:610px;top:8px;width:47px;height:17px;border-radius:1.5px;background:linear-gradient(#4e6cb6,#4360a8)"></div>
<svg class="a" style="left:606px;top:4px" width="24" height="24" viewBox="606 4 24 24">
  <rect x="613" y="12" width="10.2" height="9.9" rx="0.8" fill="#fff"/>
  <path d="M618.3 21.9 V15.4 Q618.3 13.2 620.6 13.2 H621.9 V14.8 H620.9 Q619.9 14.8 619.9 15.7 V21.9 Z" fill="#4864ae"/>
  <rect x="616.4" y="16.9" width="5" height="1.4" fill="#4864ae"/>
</svg>
<div class="lbl" style="left:627px;top:9.5px;font-size:9.1px;color:#fff;line-height:13px">Share</div>

<!-- row 2 -->
<div class="sel" style="left:10px;top:38px;width:95px;height:12.8px;line-height:11.2px;padding-left:6px">Clip Markers</div>
<svg class="a" style="left:95px;top:40px" width="6" height="9" viewBox="0 0 6 9"><path d="M3 0.5L5.5 3.5H0.5Z M3 8.5L5.5 5.5H0.5Z" fill="#111"/></svg>
<div class="btn" style="left:108px;top:36px;width:94px;height:16.5px;font-size:12px;line-height:18.3px"><span class="t" style="transform:scaleX(.933)">Create Markers</span></div>
<div class="btn" style="left:203px;top:36px;width:64px;height:16.5px;font-size:12px;line-height:18.3px"><span class="t" style="transform:scaleX(.933)">Delete All</span></div>

<!-- row 3 -->
<div class="btn" style="left:9px;top:58px;width:73px;height:17px;font-size:11.2px;line-height:16px"><span class="t" style="transform:scaleX(.965)">Load Music</span></div>
<div class="lbl" style="left:85.7px;top:59px;font-size:11.3px;color:#7a7a7a;line-height:14px"><span class="tl" style="transform:scaleX(.892)">/Users/mmohl/Documents/Stoc.../135_short_across-the-african-plains_0032.wav</span></div>

<!-- transport -->
<div class="a" style="left:16px;top:261px;width:22px;height:17px;border-radius:3px;background:#2e72b8;box-shadow:inset 0 1px 0 #6aa6dc,0 0 0 0.7px #173d66"></div>
<div class="a" style="left:40px;top:261px;width:34px;height:17px;border-radius:3px;background:#2e72b8;box-shadow:inset 0 1px 0 #6aa6dc,0 0 0 0.7px #173d66"></div>
<div class="a" style="left:77px;top:261px;width:21px;height:17px;border-radius:3px;background:#2e72b8;box-shadow:inset 0 1px 0 #6aa6dc,0 0 0 0.7px #173d66"></div>
<svg class="a" style="left:0;top:250px" width="110" height="40" viewBox="0 0 110 40">
  <rect x="22.5" y="15" width="2" height="10" fill="#fff"/>
  <path d="M24.5 20 L30 15.2 V24.8 Z" fill="#fff"/>
  <path d="M53 14.5 L61 20 L53 25.5 Z" fill="#fff"/>
  <path d="M85 15.2 L90.5 20 L85 24.8 Z" fill="#fff"/>
  <rect x="90.5" y="15" width="2" height="10" fill="#fff"/>
</svg>

<svg class="a" style="left:110px;top:258px" width="30" height="24" viewBox="0 0 30 24">
  <path d="M7 9.5H10L14 6.5V16.5L10 13.5H7Z" fill="#7a7a7a"/>
  <path d="M16 8.5Q17.5 11.5 16 14.5" stroke="#7a7a7a" stroke-width="1" fill="none"/>
  <path d="M18 7Q20.5 11.5 18 16" stroke="#7a7a7a" stroke-width="1" fill="none"/>
</svg>
<div class="a" style="left:137px;top:269px;width:67px;height:2px;background:#0e0e0e"></div>
<div class="a" style="left:143px;top:263.5px;width:13px;height:13px;border-radius:50%;background:radial-gradient(circle at 45% 35%,#eef1e6,#c6ccb8);box-shadow:0 0 0 0.6px #151515"></div>

<div class="lbl" style="left:248.5px;top:264.5px;font-size:8.2px;color:#e0981e;line-height:12px">beats</div>
<svg class="a" style="left:269px;top:258px" width="30" height="24" viewBox="0 0 30 24">
  <path d="M7 9.5H10L14 6.5V16.5L10 13.5H7Z" fill="#7a7a7a"/>
  <path d="M16 8.5Q17.5 11.5 16 14.5" stroke="#7a7a7a" stroke-width="1" fill="none"/>
  <path d="M18 7Q20.5 11.5 18 16" stroke="#7a7a7a" stroke-width="1" fill="none"/>
</svg>
<div class="a" style="left:296px;top:269px;width:61px;height:2px;background:#0e0e0e"></div>
<div class="a" style="left:350px;top:263.8px;width:13px;height:13px;border-radius:50%;background:radial-gradient(circle at 45% 35%,#eef1e6,#c6ccb8);box-shadow:0 0 0 0.6px #151515"></div>

<!-- select row -->
<div class="sel" style="left:9.5px;top:294.5px;width:102px;height:13px;line-height:11px;padding-left:8px">in entire song</div>
<svg class="a" style="left:102px;top:297px" width="6" height="9" viewBox="0 0 6 9"><path d="M3 0.5L5.5 3.5H0.5Z M3 8.5L5.5 5.5H0.5Z" fill="#111"/></svg>
<div class="sel" style="left:114px;top:294.5px;width:109.5px;height:13px;line-height:11px;padding-left:7px">select exactly</div>
<svg class="a" style="left:213px;top:297px" width="6" height="9" viewBox="0 0 6 9"><path d="M3 0.5L5.5 3.5H0.5Z M3 8.5L5.5 5.5H0.5Z" fill="#111"/></svg>
<div class="lbl" style="left:230px;top:294px;color:#7c7c7c;line-height:14px">1 beat every</div>
<div class="a" style="left:295px;top:294px;width:30px;height:14px;background:#9a9a9a;border:2px solid #050505"></div>
<div class="a" style="left:297.5px;top:296px;font-size:9.5px;color:#000;line-height:12px">4</div>
<div class="lbl" style="left:332px;top:294px;color:#7c7c7c;line-height:14px">beats</div>
<div class="sel" style="left:365.5px;top:294.5px;width:59.5px;height:12.5px;line-height:11px;padding-left:7px">evenly</div>
<svg class="a" style="left:416px;top:296.5px" width="6" height="9" viewBox="0 0 6 9"><path d="M3 0.5L5.5 3.5H0.5Z M3 8.5L5.5 5.5H0.5Z" fill="#111"/></svg>
<div class="btn" style="left:428px;top:292px;width:44px;height:17.3px;font-size:12px;line-height:18.5px"><span class="t" style="transform:scaleX(.89)">Select</span></div>

<!-- extra markers -->
<div class="a" style="left:9.5px;top:320px;width:8px;height:8px;border-radius:50%;background:#f4f4f4"></div>
<div class="lbl" style="left:22px;top:317px;color:#777;line-height:14px">add extra markers</div>

<div class="lbl" style="left:0;width:97px;text-align:right;top:335.5px;color:#4d4d4d;line-height:14px">amount</div>
<div class="lbl" style="left:0;width:96.5px;text-align:right;top:354px;color:#4d4d4d;line-height:14px">musical</div>
<div class="lbl" style="left:0;width:96.5px;text-align:right;top:372.5px;color:#4d4d4d;line-height:14px">min distance</div>
<div class="a" style="left:105px;top:341px;width:284px;height:2px;background:#171717"></div>
<div class="a" style="left:105px;top:359.5px;width:284px;height:2px;background:#171717"></div>
<div class="a" style="left:105px;top:378px;width:284px;height:2px;background:#171717"></div>
<div class="a" style="left:133px;top:338px;width:8px;height:8px;border-radius:50%;background:#4a4a4a"></div>
<div class="a" style="left:105.3px;top:356.5px;width:8px;height:8px;border-radius:50%;background:#4a4a4a"></div>
<div class="a" style="left:105.3px;top:375px;width:8px;height:8px;border-radius:50%;background:#4a4a4a"></div>
<div class="lbl" style="left:398px;top:354px;color:#4d4d4d;line-height:14px">chaotic</div>
<div class="lbl" style="left:398px;top:372.5px;color:#4d4d4d;line-height:14px">0.10s</div>

<svg class="a" style="left:80px;top:392px" width="18" height="17" viewBox="0 0 18 17">
  <path d="M8.4 0.9 Q13 1.4 16 3.5 V12.5 Q12.5 15 8.4 16 Q4.5 15 1 12.5 V3.5 Q4 1.4 8.4 0.9 Z" fill="#5a5a5a"/>
  <path d="M1.2 3.6 Q4.5 5.8 8.4 6.6 Q12.5 5.8 15.8 3.6 M8.4 6.6 V15.8" stroke="#2c2c2c" stroke-width="0.7" fill="none"/>
  <ellipse cx="8.2" cy="2.5" rx="1.3" ry="0.7" fill="#2a2a2a"/>
  <circle cx="3" cy="4.5" r="0.8" fill="#2a2a2a"/>
  <circle cx="6" cy="8.5" r="0.9" fill="#2a2a2a"/>
  <circle cx="3" cy="11.5" r="0.9" fill="#2a2a2a"/>
  <circle cx="11.5" cy="8.6" r="0.9" fill="#2a2a2a"/>
  <circle cx="13.5" cy="11" r="0.9" fill="#2a2a2a"/>
  <circle cx="11" cy="13.6" r="0.8" fill="#2a2a2a"/>
</svg>
<div class="a" style="left:105px;top:393px;width:30px;height:15px;background:#676767;border:2px solid #111"></div>
</body></html>
